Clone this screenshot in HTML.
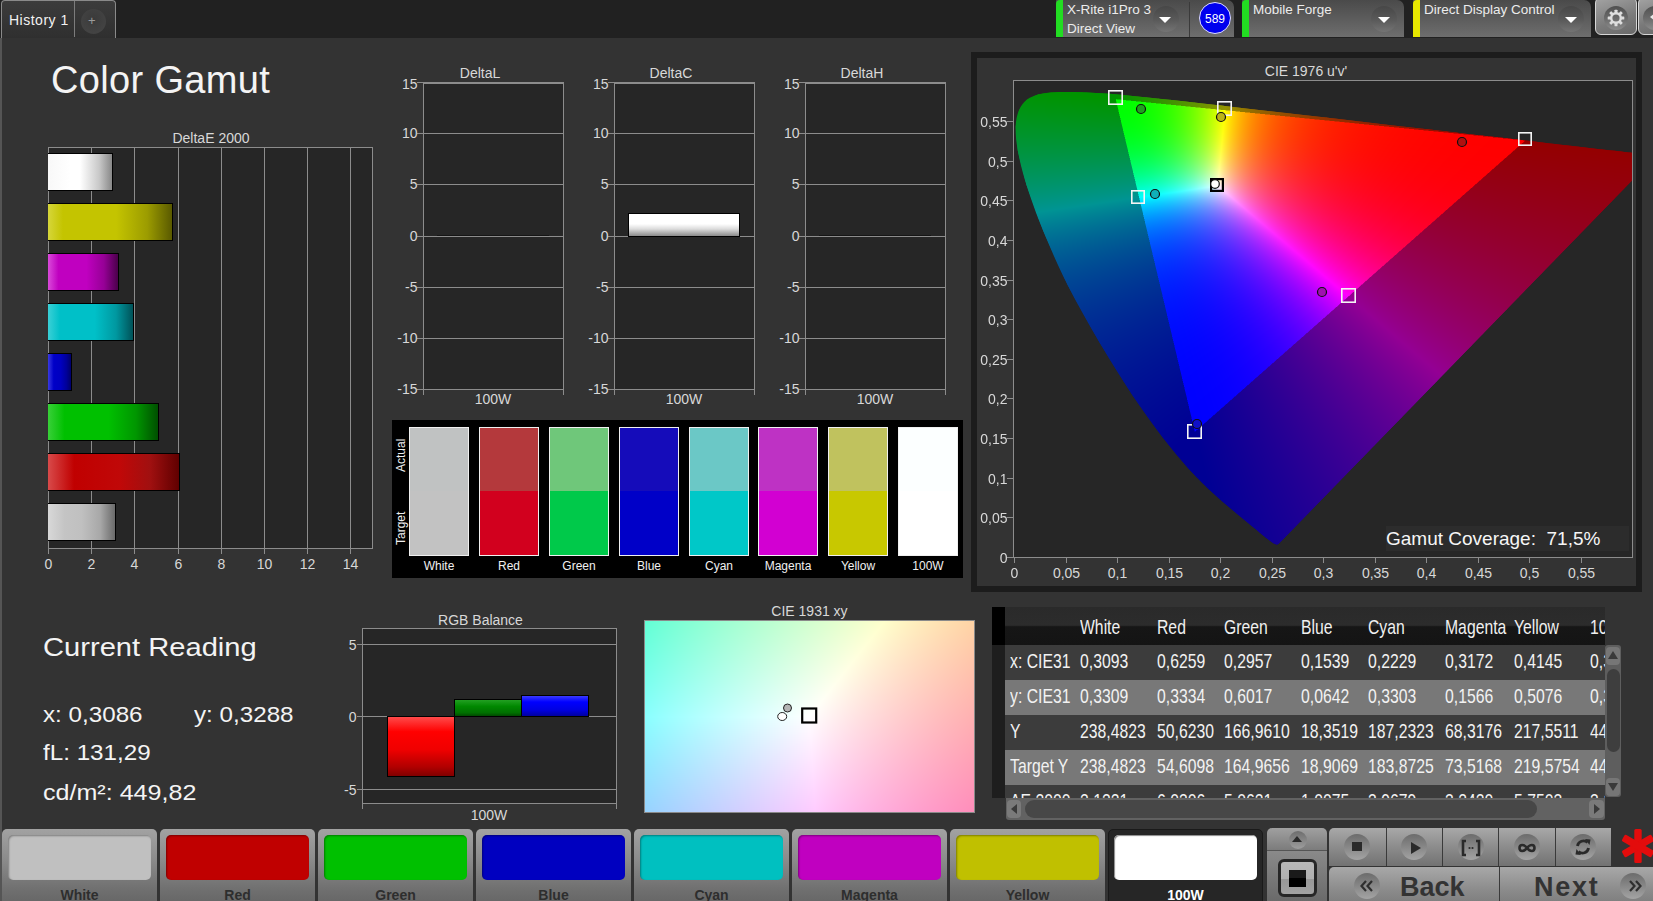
<!DOCTYPE html>
<html><head><meta charset="utf-8"><style>*{margin:0;padding:0;box-sizing:border-box}
html,body{width:1653px;height:901px;overflow:hidden;background:#212121;font-family:"Liberation Sans",sans-serif}
.a{position:absolute}
.t{position:absolute;white-space:nowrap;color:#e8e8e8;line-height:1}
.drop{position:absolute;width:26px;height:26px;border-radius:50%;background:linear-gradient(#474747,#5a5a5a 55%,#747474 100%)}
.drop:after{content:"";position:absolute;left:6.5px;top:11px;border-left:6.5px solid transparent;border-right:6.5px solid transparent;border-top:6.5px solid #fff}
</style></head><body>
<div class="a" style="left:0px;top:38px;width:1653px;height:863px;background:#333333"></div>
<div class="a" style="left:0px;top:38px;width:2px;height:863px;background:#555555"></div>
<div class="a" style="left:1px;top:0px;width:115px;height:38px;background:linear-gradient(#3c3c3c,#2f2f2f);border:1px solid #8a8a8a;border-bottom:none;border-radius:4px 4px 0 0"></div>
<div class="a" style="left:74px;top:1px;width:1px;height:36px;background:#7c7c7c"></div>
<div class="t" style="left:9px;top:12.5px;font-size:14px;color:#f2f2f2;letter-spacing:0.5px">History 1</div>
<div class="a" style="left:81px;top:9px;width:25px;height:25px;border-radius:50%;background:radial-gradient(circle at 50% 40%,#3a3a3a,#434343 70%,#3d3d3d)"></div>
<div class="t" style="left:88px;top:14px;font-size:13px;color:#9c9c9c;">+</div>
<div class="a" style="left:1056px;top:0px;width:178px;height:37px;background:linear-gradient(#4a4a4a,#6e6e6e);border-radius:0 7px 0 0"></div>
<div class="a" style="left:1056px;top:0px;width:7px;height:37px;background:#22dd22;border-radius:4px 0 0 0"></div>
<div class="t" style="left:1067px;top:3.0px;font-size:13.5px;color:#ececec;">X-Rite i1Pro 3</div>
<div class="t" style="left:1067px;top:21.5px;font-size:13.5px;color:#ececec;">Direct View</div>
<div class="drop" style="left:1152.5px;top:6px"></div>
<div class="a" style="left:1189px;top:2px;width:1px;height:35px;background:#3a3a3a"></div>
<div class="a" style="left:1199px;top:2px;width:32px;height:32px;border-radius:50%;background:#0000ee;border:1px solid #e0e0ff"></div>
<div class="t" style="left:1195.0px;top:12.5px;width:40px;text-align:center;font-size:12px;color:#ffffff;">589</div>
<div class="a" style="left:1242px;top:0px;width:162px;height:37px;background:linear-gradient(#4a4a4a,#6e6e6e);border-radius:0 7px 0 0"></div>
<div class="a" style="left:1242px;top:0px;width:7px;height:37px;background:#22dd22;border-radius:4px 0 0 0"></div>
<div class="t" style="left:1253px;top:3.0px;font-size:13.5px;color:#ececec;">Mobile Forge</div>
<div class="drop" style="left:1371px;top:6px"></div>
<div class="a" style="left:1413px;top:0px;width:178px;height:37px;background:linear-gradient(#4a4a4a,#6e6e6e);border-radius:0 7px 0 0"></div>
<div class="a" style="left:1413px;top:0px;width:7px;height:37px;background:#e8e800;border-radius:4px 0 0 0"></div>
<div class="t" style="left:1424px;top:3.0px;font-size:13.5px;color:#ececec;">Direct Display Control</div>
<div class="drop" style="left:1558px;top:6px"></div>
<div class="a" style="left:1595px;top:-3px;width:42px;height:38px;background:linear-gradient(160deg,#a4a4a4,#7a7a7a 60%,#6a6a6a);border:1.5px solid #d6d6d6;border-radius:6px"></div>
<div class="a" style="left:1604px;top:5.5px;width:24px;height:24px;border-radius:50%;background:linear-gradient(#505050,#6a6a6a 50%,#8c8c8c)"></div>
<svg class="a" style="left:1604px;top:5.5px" width="24" height="24" viewBox="-12 -12 24 24"><g fill="#dedede"><rect x="-1.5" y="-8.3" width="3" height="4" rx="0.6" transform="rotate(0)"/><rect x="-1.5" y="-8.3" width="3" height="4" rx="0.6" transform="rotate(45)"/><rect x="-1.5" y="-8.3" width="3" height="4" rx="0.6" transform="rotate(90)"/><rect x="-1.5" y="-8.3" width="3" height="4" rx="0.6" transform="rotate(135)"/><rect x="-1.5" y="-8.3" width="3" height="4" rx="0.6" transform="rotate(180)"/><rect x="-1.5" y="-8.3" width="3" height="4" rx="0.6" transform="rotate(225)"/><rect x="-1.5" y="-8.3" width="3" height="4" rx="0.6" transform="rotate(270)"/><rect x="-1.5" y="-8.3" width="3" height="4" rx="0.6" transform="rotate(315)"/></g><circle r="4.8" fill="none" stroke="#dedede" stroke-width="2.4"/></svg>
<div class="a" style="left:1638px;top:-3px;width:30px;height:38px;background:linear-gradient(160deg,#a4a4a4,#7a7a7a 60%,#6a6a6a);border:1.5px solid #d6d6d6;border-radius:6px"></div>
<div class="a" style="left:1643px;top:5.5px;width:24px;height:24px;border-radius:50%;background:linear-gradient(#505050,#6a6a6a 50%,#8c8c8c)"></div>
<div class="a" style="left:1650px;top:13px;border-top:4px solid transparent;border-bottom:4px solid transparent;border-right:5px solid #e8e8e8"></div>
<div class="t" style="left:51px;top:61px;font-size:38px;color:#f4f4f4;letter-spacing:0.35px">Color Gamut</div>
<div class="t" style="left:111.0px;top:131px;width:200px;text-align:center;font-size:14px;color:#d8d8d8;">DeltaE 2000</div>
<div class="a" style="left:48px;top:147px;width:325px;height:402px;background:#262626;border:1px solid #8c8c8c"></div>
<div class="a" style="left:91px;top:148px;width:1px;height:400px;background:#8c8c8c"></div>
<div class="a" style="left:134px;top:148px;width:1px;height:400px;background:#8c8c8c"></div>
<div class="a" style="left:178px;top:148px;width:1px;height:400px;background:#8c8c8c"></div>
<div class="a" style="left:221px;top:148px;width:1px;height:400px;background:#8c8c8c"></div>
<div class="a" style="left:264px;top:148px;width:1px;height:400px;background:#8c8c8c"></div>
<div class="a" style="left:307px;top:148px;width:1px;height:400px;background:#8c8c8c"></div>
<div class="a" style="left:350px;top:148px;width:1px;height:400px;background:#8c8c8c"></div>
<div class="a" style="left:48px;top:548px;width:1px;height:6px;background:#8c8c8c"></div>
<div class="t" style="left:28.5px;top:557px;width:40px;text-align:center;font-size:14px;color:#d8d8d8;">0</div>
<div class="a" style="left:91px;top:548px;width:1px;height:6px;background:#8c8c8c"></div>
<div class="t" style="left:71.5px;top:557px;width:40px;text-align:center;font-size:14px;color:#d8d8d8;">2</div>
<div class="a" style="left:134px;top:548px;width:1px;height:6px;background:#8c8c8c"></div>
<div class="t" style="left:114.5px;top:557px;width:40px;text-align:center;font-size:14px;color:#d8d8d8;">4</div>
<div class="a" style="left:178px;top:548px;width:1px;height:6px;background:#8c8c8c"></div>
<div class="t" style="left:158.5px;top:557px;width:40px;text-align:center;font-size:14px;color:#d8d8d8;">6</div>
<div class="a" style="left:221px;top:548px;width:1px;height:6px;background:#8c8c8c"></div>
<div class="t" style="left:201.5px;top:557px;width:40px;text-align:center;font-size:14px;color:#d8d8d8;">8</div>
<div class="a" style="left:264px;top:548px;width:1px;height:6px;background:#8c8c8c"></div>
<div class="t" style="left:244.5px;top:557px;width:40px;text-align:center;font-size:14px;color:#d8d8d8;">10</div>
<div class="a" style="left:307px;top:548px;width:1px;height:6px;background:#8c8c8c"></div>
<div class="t" style="left:287.5px;top:557px;width:40px;text-align:center;font-size:14px;color:#d8d8d8;">12</div>
<div class="a" style="left:350px;top:548px;width:1px;height:6px;background:#8c8c8c"></div>
<div class="t" style="left:330.5px;top:557px;width:40px;text-align:center;font-size:14px;color:#d8d8d8;">14</div>
<div class="a" style="left:48px;top:153px;width:65px;height:38px;background:linear-gradient(90deg,#f8f8f8 0%,#ffffff 35%,#ffffff 50%,#c8c8c8 80%,#888888 100%);border:1px solid #000;border-left:none"></div>
<div class="a" style="left:48px;top:203px;width:125px;height:38px;background:linear-gradient(90deg,#d6d63a 0%,#c4c400 12%,#c4c400 55%,#9c9c00 80%,#5a5a00 100%);border:1px solid #000;border-left:none"></div>
<div class="a" style="left:48px;top:253px;width:71px;height:38px;background:linear-gradient(90deg,#da4ada 0%,#c000c0 15%,#c000c0 55%,#960096 80%,#4a004a 100%);border:1px solid #000;border-left:none"></div>
<div class="a" style="left:48px;top:303px;width:86px;height:38px;background:linear-gradient(90deg,#3ad0d6 0%,#00c0c8 14%,#00c0c8 55%,#0098a0 80%,#005258 100%);border:1px solid #000;border-left:none"></div>
<div class="a" style="left:48px;top:353px;width:24px;height:38px;background:linear-gradient(90deg,#3a3ae0 0%,#0000c8 25%,#0000c0 55%,#00009a 80%,#00006a 100%);border:1px solid #000;border-left:none"></div>
<div class="a" style="left:48px;top:403px;width:111px;height:38px;background:linear-gradient(90deg,#38d038 0%,#00c000 15%,#00c000 55%,#009600 80%,#005000 100%);border:1px solid #000;border-left:none"></div>
<div class="a" style="left:48px;top:453px;width:132px;height:38px;background:linear-gradient(90deg,#d84a4a 0%,#c00000 20%,#c00808 55%,#a01010 78%,#600000 100%);border:1px solid #000;border-left:none"></div>
<div class="a" style="left:48px;top:503px;width:68px;height:38px;background:linear-gradient(90deg,#d8d8d8 0%,#c4c4c4 25%,#c0c0c0 50%,#a8a8a8 78%,#6a6a6a 100%);border:1px solid #000;border-left:none"></div>
<div class="t" style="left:43px;top:634.5px;font-size:25px;color:#f4f4f4;transform:scaleX(1.165);transform-origin:0 0">Current Reading</div>
<div class="t" style="left:43px;top:703.5px;font-size:22px;color:#f4f4f4;transform:scaleX(1.1);transform-origin:0 0">x: 0,3086</div>
<div class="t" style="left:194px;top:703.5px;font-size:22px;color:#f4f4f4;transform:scaleX(1.1);transform-origin:0 0">y: 0,3288</div>
<div class="t" style="left:43px;top:742px;font-size:22px;color:#f4f4f4;transform:scaleX(1.1);transform-origin:0 0">fL: 131,29</div>
<div class="t" style="left:43px;top:781.5px;font-size:22px;color:#f4f4f4;transform:scaleX(1.14);transform-origin:0 0">cd/m&#178;: 449,82</div>
<div class="t" style="left:380.5px;top:613px;width:200px;text-align:center;font-size:14px;color:#d8d8d8;">RGB Balance</div>
<div class="a" style="left:362px;top:628px;width:255px;height:176px;background:#262626;border:1px solid #8c8c8c"></div>
<div class="a" style="left:363px;top:644px;width:253px;height:1px;background:#8c8c8c"></div>
<div class="a" style="left:357px;top:644px;width:6px;height:1px;background:#8c8c8c"></div>
<div class="t" style="left:326.5px;top:638px;width:30px;text-align:right;font-size:14px;color:#d8d8d8;">5</div>
<div class="a" style="left:363px;top:716px;width:253px;height:1px;background:#8c8c8c"></div>
<div class="a" style="left:357px;top:716px;width:6px;height:1px;background:#8c8c8c"></div>
<div class="t" style="left:326.5px;top:710px;width:30px;text-align:right;font-size:14px;color:#d8d8d8;">0</div>
<div class="a" style="left:363px;top:789px;width:253px;height:1px;background:#8c8c8c"></div>
<div class="a" style="left:357px;top:789px;width:6px;height:1px;background:#8c8c8c"></div>
<div class="t" style="left:326.5px;top:783px;width:30px;text-align:right;font-size:14px;color:#d8d8d8;">-5</div>
<div class="a" style="left:362px;top:803px;width:1px;height:6px;background:#8c8c8c"></div>
<div class="a" style="left:616px;top:803px;width:1px;height:6px;background:#8c8c8c"></div>
<div class="t" style="left:389.0px;top:808px;width:200px;text-align:center;font-size:14px;color:#d8d8d8;">100W</div>
<div class="a" style="left:387px;top:716px;width:68px;height:61px;background:linear-gradient(#ff4a4a 0%,#ff0000 25%,#f00000 55%,#b00000 85%,#800000 100%);border:1px solid #000"></div>
<div class="a" style="left:454px;top:699px;width:68px;height:18px;background:linear-gradient(#22a022 0%,#008800 40%,#007000 80%,#004a00 100%);border:1px solid #000"></div>
<div class="a" style="left:521px;top:695px;width:68px;height:22px;background:linear-gradient(#3a3aff 0%,#0000ff 30%,#0000e0 70%,#0000a0 100%);border:1px solid #000"></div>
<div class="t" style="left:380.0px;top:66px;width:200px;text-align:center;font-size:14px;color:#d8d8d8;">DeltaL</div>
<div class="a" style="left:423px;top:82px;width:141px;height:308px;background:#262626;border:1px solid #8c8c8c"></div>
<div class="a" style="left:424px;top:83px;width:139px;height:1px;background:#8c8c8c"></div>
<div class="a" style="left:417px;top:82px;width:6px;height:1px;background:#8c8c8c"></div>
<div class="t" style="left:387.5px;top:77px;width:30px;text-align:right;font-size:14px;color:#d8d8d8;">15</div>
<div class="a" style="left:424px;top:133px;width:139px;height:1px;background:#8c8c8c"></div>
<div class="a" style="left:417px;top:133px;width:6px;height:1px;background:#8c8c8c"></div>
<div class="t" style="left:387.5px;top:126px;width:30px;text-align:right;font-size:14px;color:#d8d8d8;">10</div>
<div class="a" style="left:424px;top:184px;width:139px;height:1px;background:#8c8c8c"></div>
<div class="a" style="left:417px;top:184px;width:6px;height:1px;background:#8c8c8c"></div>
<div class="t" style="left:387.5px;top:177px;width:30px;text-align:right;font-size:14px;color:#d8d8d8;">5</div>
<div class="a" style="left:424px;top:236px;width:139px;height:1px;background:#8c8c8c"></div>
<div class="a" style="left:417px;top:236px;width:6px;height:1px;background:#8c8c8c"></div>
<div class="t" style="left:387.5px;top:229px;width:30px;text-align:right;font-size:14px;color:#d8d8d8;">0</div>
<div class="a" style="left:424px;top:287px;width:139px;height:1px;background:#8c8c8c"></div>
<div class="a" style="left:417px;top:287px;width:6px;height:1px;background:#8c8c8c"></div>
<div class="t" style="left:387.5px;top:280px;width:30px;text-align:right;font-size:14px;color:#d8d8d8;">-5</div>
<div class="a" style="left:424px;top:338px;width:139px;height:1px;background:#8c8c8c"></div>
<div class="a" style="left:417px;top:338px;width:6px;height:1px;background:#8c8c8c"></div>
<div class="t" style="left:387.5px;top:331px;width:30px;text-align:right;font-size:14px;color:#d8d8d8;">-10</div>
<div class="a" style="left:417px;top:389px;width:6px;height:1px;background:#8c8c8c"></div>
<div class="t" style="left:387.5px;top:382px;width:30px;text-align:right;font-size:14px;color:#d8d8d8;">-15</div>
<div class="a" style="left:423px;top:389px;width:1px;height:6px;background:#8c8c8c"></div>
<div class="a" style="left:563px;top:389px;width:1px;height:6px;background:#8c8c8c"></div>
<div class="t" style="left:393.0px;top:392px;width:200px;text-align:center;font-size:14px;color:#d8d8d8;">100W</div>
<div class="a" style="left:437px;top:235px;width:112px;height:1px;background:#151515"></div>
<div class="t" style="left:571.0px;top:66px;width:200px;text-align:center;font-size:14px;color:#d8d8d8;">DeltaC</div>
<div class="a" style="left:614px;top:82px;width:141px;height:308px;background:#262626;border:1px solid #8c8c8c"></div>
<div class="a" style="left:615px;top:83px;width:139px;height:1px;background:#8c8c8c"></div>
<div class="a" style="left:608px;top:82px;width:6px;height:1px;background:#8c8c8c"></div>
<div class="t" style="left:578.5px;top:77px;width:30px;text-align:right;font-size:14px;color:#d8d8d8;">15</div>
<div class="a" style="left:615px;top:133px;width:139px;height:1px;background:#8c8c8c"></div>
<div class="a" style="left:608px;top:133px;width:6px;height:1px;background:#8c8c8c"></div>
<div class="t" style="left:578.5px;top:126px;width:30px;text-align:right;font-size:14px;color:#d8d8d8;">10</div>
<div class="a" style="left:615px;top:184px;width:139px;height:1px;background:#8c8c8c"></div>
<div class="a" style="left:608px;top:184px;width:6px;height:1px;background:#8c8c8c"></div>
<div class="t" style="left:578.5px;top:177px;width:30px;text-align:right;font-size:14px;color:#d8d8d8;">5</div>
<div class="a" style="left:615px;top:236px;width:139px;height:1px;background:#8c8c8c"></div>
<div class="a" style="left:608px;top:236px;width:6px;height:1px;background:#8c8c8c"></div>
<div class="t" style="left:578.5px;top:229px;width:30px;text-align:right;font-size:14px;color:#d8d8d8;">0</div>
<div class="a" style="left:615px;top:287px;width:139px;height:1px;background:#8c8c8c"></div>
<div class="a" style="left:608px;top:287px;width:6px;height:1px;background:#8c8c8c"></div>
<div class="t" style="left:578.5px;top:280px;width:30px;text-align:right;font-size:14px;color:#d8d8d8;">-5</div>
<div class="a" style="left:615px;top:338px;width:139px;height:1px;background:#8c8c8c"></div>
<div class="a" style="left:608px;top:338px;width:6px;height:1px;background:#8c8c8c"></div>
<div class="t" style="left:578.5px;top:331px;width:30px;text-align:right;font-size:14px;color:#d8d8d8;">-10</div>
<div class="a" style="left:608px;top:389px;width:6px;height:1px;background:#8c8c8c"></div>
<div class="t" style="left:578.5px;top:382px;width:30px;text-align:right;font-size:14px;color:#d8d8d8;">-15</div>
<div class="a" style="left:614px;top:389px;width:1px;height:6px;background:#8c8c8c"></div>
<div class="a" style="left:754px;top:389px;width:1px;height:6px;background:#8c8c8c"></div>
<div class="t" style="left:584.0px;top:392px;width:200px;text-align:center;font-size:14px;color:#d8d8d8;">100W</div>
<div class="a" style="left:628px;top:213px;width:112px;height:24px;background:linear-gradient(#ffffff 0%,#ffffff 45%,#dcdcdc 68%,#8a8a8a 100%);border:1px solid #000"></div>
<div class="t" style="left:762.0px;top:66px;width:200px;text-align:center;font-size:14px;color:#d8d8d8;">DeltaH</div>
<div class="a" style="left:805px;top:82px;width:141px;height:308px;background:#262626;border:1px solid #8c8c8c"></div>
<div class="a" style="left:806px;top:83px;width:139px;height:1px;background:#8c8c8c"></div>
<div class="a" style="left:799px;top:82px;width:6px;height:1px;background:#8c8c8c"></div>
<div class="t" style="left:769.5px;top:77px;width:30px;text-align:right;font-size:14px;color:#d8d8d8;">15</div>
<div class="a" style="left:806px;top:133px;width:139px;height:1px;background:#8c8c8c"></div>
<div class="a" style="left:799px;top:133px;width:6px;height:1px;background:#8c8c8c"></div>
<div class="t" style="left:769.5px;top:126px;width:30px;text-align:right;font-size:14px;color:#d8d8d8;">10</div>
<div class="a" style="left:806px;top:184px;width:139px;height:1px;background:#8c8c8c"></div>
<div class="a" style="left:799px;top:184px;width:6px;height:1px;background:#8c8c8c"></div>
<div class="t" style="left:769.5px;top:177px;width:30px;text-align:right;font-size:14px;color:#d8d8d8;">5</div>
<div class="a" style="left:806px;top:236px;width:139px;height:1px;background:#8c8c8c"></div>
<div class="a" style="left:799px;top:236px;width:6px;height:1px;background:#8c8c8c"></div>
<div class="t" style="left:769.5px;top:229px;width:30px;text-align:right;font-size:14px;color:#d8d8d8;">0</div>
<div class="a" style="left:806px;top:287px;width:139px;height:1px;background:#8c8c8c"></div>
<div class="a" style="left:799px;top:287px;width:6px;height:1px;background:#8c8c8c"></div>
<div class="t" style="left:769.5px;top:280px;width:30px;text-align:right;font-size:14px;color:#d8d8d8;">-5</div>
<div class="a" style="left:806px;top:338px;width:139px;height:1px;background:#8c8c8c"></div>
<div class="a" style="left:799px;top:338px;width:6px;height:1px;background:#8c8c8c"></div>
<div class="t" style="left:769.5px;top:331px;width:30px;text-align:right;font-size:14px;color:#d8d8d8;">-10</div>
<div class="a" style="left:799px;top:389px;width:6px;height:1px;background:#8c8c8c"></div>
<div class="t" style="left:769.5px;top:382px;width:30px;text-align:right;font-size:14px;color:#d8d8d8;">-15</div>
<div class="a" style="left:805px;top:389px;width:1px;height:6px;background:#8c8c8c"></div>
<div class="a" style="left:945px;top:389px;width:1px;height:6px;background:#8c8c8c"></div>
<div class="t" style="left:775.0px;top:392px;width:200px;text-align:center;font-size:14px;color:#d8d8d8;">100W</div>
<div class="a" style="left:819px;top:235px;width:112px;height:1px;background:#151515"></div>
<div class="a" style="left:392px;top:420px;width:571px;height:158px;background:#000000"></div>
<div class="a" style="left:409px;top:427px;width:60px;height:129px;border:1px solid #f0f0f0;background:linear-gradient(#c0c2c2 0%,#c0c2c2 50%,#c2c2c2 50%,#c2c2c2 100%)"></div>
<div class="t" style="left:339.0px;top:560px;width:200px;text-align:center;font-size:12px;color:#f0f0f0;">White</div>
<div class="a" style="left:479px;top:427px;width:60px;height:129px;border:1px solid #f0f0f0;background:linear-gradient(#b4393c 0%,#b4393c 50%,#d2001e 50%,#d2001e 100%)"></div>
<div class="t" style="left:409.0px;top:560px;width:200px;text-align:center;font-size:12px;color:#f0f0f0;">Red</div>
<div class="a" style="left:549px;top:427px;width:60px;height:129px;border:1px solid #f0f0f0;background:linear-gradient(#6fc77a 0%,#6fc77a 50%,#00c94a 50%,#00c94a 100%)"></div>
<div class="t" style="left:479.0px;top:560px;width:200px;text-align:center;font-size:12px;color:#f0f0f0;">Green</div>
<div class="a" style="left:619px;top:427px;width:60px;height:129px;border:1px solid #f0f0f0;background:linear-gradient(#150cba 0%,#150cba 50%,#0000c8 50%,#0000c8 100%)"></div>
<div class="t" style="left:549.0px;top:560px;width:200px;text-align:center;font-size:12px;color:#f0f0f0;">Blue</div>
<div class="a" style="left:689px;top:427px;width:60px;height:129px;border:1px solid #f0f0f0;background:linear-gradient(#6bc8c6 0%,#6bc8c6 50%,#00c8c8 50%,#00c8c8 100%)"></div>
<div class="t" style="left:619.0px;top:560px;width:200px;text-align:center;font-size:12px;color:#f0f0f0;">Cyan</div>
<div class="a" style="left:758px;top:427px;width:60px;height:129px;border:1px solid #f0f0f0;background:linear-gradient(#be32c4 0%,#be32c4 50%,#d200d2 50%,#d200d2 100%)"></div>
<div class="t" style="left:688.0px;top:560px;width:200px;text-align:center;font-size:12px;color:#f0f0f0;">Magenta</div>
<div class="a" style="left:828px;top:427px;width:60px;height:129px;border:1px solid #f0f0f0;background:linear-gradient(#c0c25e 0%,#c0c25e 50%,#c8c800 50%,#c8c800 100%)"></div>
<div class="t" style="left:758.0px;top:560px;width:200px;text-align:center;font-size:12px;color:#f0f0f0;">Yellow</div>
<div class="a" style="left:898px;top:427px;width:60px;height:129px;border:1px solid #f0f0f0;background:linear-gradient(#fcffff 0%,#fcffff 50%,#ffffff 50%,#ffffff 100%)"></div>
<div class="t" style="left:828.0px;top:560px;width:200px;text-align:center;font-size:12px;color:#f0f0f0;">100W</div>
<div class="t" style="left:395px;top:472px;font-size:12px;color:#f0f0f0;transform:rotate(-90deg);transform-origin:0 0">Actual</div>
<div class="t" style="left:395px;top:545px;font-size:12px;color:#f0f0f0;transform:rotate(-90deg);transform-origin:0 0">Target</div>
<div class="a" style="left:971px;top:52px;width:671px;height:540px;background:#333333;border:6px solid #1c1c1c"></div>
<div class="t" style="left:1206.0px;top:64px;width:200px;text-align:center;font-size:14px;color:#d8d8d8;">CIE 1976 u'v'</div>
<div class="a" style="left:1013px;top:80px;width:620px;height:478px;background:#262626;border:1px solid #8c8c8c"></div>
<svg class="a" style="left:1014px;top:81px" width="618" height="476"><defs><clipPath id="lc"><path d="M264.7 462.8 L264.3 463.1 L263.5 463.4 L262.3 463.4 L259.9 462.6 L257.3 460.8 L253.7 458.1 L248.4 453.9 L241.9 448.3 L233.6 441.4 L222.7 432.5 L209.6 421.5 L193.5 407.0 L174.2 387.3 L148.6 356.3 L118.3 314.0 L85.5 261.4 L53.9 204.4 L29.2 149.7 L12.4 103.6 L3.8 69.4 L1.7 45.5 L5.0 29.2 L12.9 18.8 L24.0 13.4 L37.3 11.5 L51.8 11.0 L66.5 11.2 L81.8 11.9 L98.3 13.1 L116.3 14.7 L136.0 16.7 L157.9 19.1 L182.0 21.8 L208.8 24.8 L238.3 28.2 L270.4 31.9 L305.0 35.8 L341.6 40.0 L379.2 44.4 L415.7 48.6 L451.2 52.7 L483.4 56.3 L511.8 59.6 L536.0 62.4 L556.2 64.7 L573.3 66.7 L588.1 68.4 L600.6 69.8 L610.7 71.0 L618.6 71.9 L629.3 73.1 L642.2 74.6 Z"/></clipPath><clipPath id="tc"><path d="M101.7 17.3 L511.0 58.5 L180.7 350.5 Z"/></clipPath></defs><g clip-path="url(#lc)"><rect x="0" y="0" width="12.5" height="12.5" fill="#009300"/><rect x="12" y="0" width="12.5" height="12.5" fill="#009300"/><rect x="24" y="0" width="12.5" height="12.5" fill="#009300"/><rect x="36" y="0" width="12.5" height="12.5" fill="#009300"/><rect x="48" y="0" width="12.5" height="12.5" fill="#009300"/><rect x="60" y="0" width="12.5" height="12.5" fill="#009300"/><rect x="72" y="0" width="12.5" height="12.5" fill="#009300"/><rect x="84" y="0" width="12.5" height="12.5" fill="#009300"/><rect x="96" y="0" width="12.5" height="12.5" fill="#039300"/><rect x="108" y="0" width="12.5" height="12.5" fill="#0f9300"/><rect x="120" y="0" width="12.5" height="12.5" fill="#1c9300"/><rect x="132" y="0" width="12.5" height="12.5" fill="#299300"/><rect x="144" y="0" width="12.5" height="12.5" fill="#389300"/><rect x="156" y="0" width="12.5" height="12.5" fill="#479300"/><rect x="168" y="0" width="12.5" height="12.5" fill="#579300"/><rect x="180" y="0" width="12.5" height="12.5" fill="#689300"/><rect x="192" y="0" width="12.5" height="12.5" fill="#7b9300"/><rect x="204" y="0" width="12.5" height="12.5" fill="#8e9300"/><rect x="216" y="0" width="12.5" height="12.5" fill="#938500"/><rect x="228" y="0" width="12.5" height="12.5" fill="#937500"/><rect x="240" y="0" width="12.5" height="12.5" fill="#936800"/><rect x="252" y="0" width="12.5" height="12.5" fill="#935c00"/><rect x="264" y="0" width="12.5" height="12.5" fill="#935300"/><rect x="276" y="0" width="12.5" height="12.5" fill="#934a00"/><rect x="288" y="0" width="12.5" height="12.5" fill="#934300"/><rect x="300" y="0" width="12.5" height="12.5" fill="#933c00"/><rect x="312" y="0" width="12.5" height="12.5" fill="#933600"/><rect x="324" y="0" width="12.5" height="12.5" fill="#933100"/><rect x="336" y="0" width="12.5" height="12.5" fill="#932c00"/><rect x="348" y="0" width="12.5" height="12.5" fill="#932800"/><rect x="360" y="0" width="12.5" height="12.5" fill="#932400"/><rect x="372" y="0" width="12.5" height="12.5" fill="#932000"/><rect x="384" y="0" width="12.5" height="12.5" fill="#931d00"/><rect x="396" y="0" width="12.5" height="12.5" fill="#931a00"/><rect x="408" y="0" width="12.5" height="12.5" fill="#931700"/><rect x="420" y="0" width="12.5" height="12.5" fill="#931500"/><rect x="432" y="0" width="12.5" height="12.5" fill="#931200"/><rect x="444" y="0" width="12.5" height="12.5" fill="#931000"/><rect x="456" y="0" width="12.5" height="12.5" fill="#930e00"/><rect x="468" y="0" width="12.5" height="12.5" fill="#930c00"/><rect x="480" y="0" width="12.5" height="12.5" fill="#930a00"/><rect x="492" y="0" width="12.5" height="12.5" fill="#930800"/><rect x="504" y="0" width="12.5" height="12.5" fill="#930700"/><rect x="516" y="0" width="12.5" height="12.5" fill="#930500"/><rect x="528" y="0" width="12.5" height="12.5" fill="#930400"/><rect x="540" y="0" width="12.5" height="12.5" fill="#930200"/><rect x="552" y="0" width="12.5" height="12.5" fill="#930100"/><rect x="564" y="0" width="12.5" height="12.5" fill="#930000"/><rect x="576" y="0" width="12.5" height="12.5" fill="#930000"/><rect x="588" y="0" width="12.5" height="12.5" fill="#930000"/><rect x="600" y="0" width="12.5" height="12.5" fill="#930000"/><rect x="612" y="0" width="12.5" height="12.5" fill="#930000"/><rect x="0" y="12" width="12.5" height="12.5" fill="#009308"/><rect x="12" y="12" width="12.5" height="12.5" fill="#009307"/><rect x="24" y="12" width="12.5" height="12.5" fill="#009306"/><rect x="36" y="12" width="12.5" height="12.5" fill="#009305"/><rect x="48" y="12" width="12.5" height="12.5" fill="#009304"/><rect x="60" y="12" width="12.5" height="12.5" fill="#009303"/><rect x="72" y="12" width="12.5" height="12.5" fill="#009302"/><rect x="84" y="12" width="12.5" height="12.5" fill="#009301"/><rect x="96" y="12" width="12.5" height="12.5" fill="#009300"/><rect x="108" y="12" width="12.5" height="12.5" fill="#0c9300"/><rect x="120" y="12" width="12.5" height="12.5" fill="#1a9300"/><rect x="132" y="12" width="12.5" height="12.5" fill="#289300"/><rect x="144" y="12" width="12.5" height="12.5" fill="#369300"/><rect x="156" y="12" width="12.5" height="12.5" fill="#469300"/><rect x="168" y="12" width="12.5" height="12.5" fill="#579300"/><rect x="180" y="12" width="12.5" height="12.5" fill="#699300"/><rect x="192" y="12" width="12.5" height="12.5" fill="#7c9300"/><rect x="204" y="12" width="12.5" height="12.5" fill="#909300"/><rect x="216" y="12" width="12.5" height="12.5" fill="#938300"/><rect x="228" y="12" width="12.5" height="12.5" fill="#937300"/><rect x="240" y="12" width="12.5" height="12.5" fill="#936600"/><rect x="252" y="12" width="12.5" height="12.5" fill="#935a00"/><rect x="264" y="12" width="12.5" height="12.5" fill="#935000"/><rect x="276" y="12" width="12.5" height="12.5" fill="#934800"/><rect x="288" y="12" width="12.5" height="12.5" fill="#934000"/><rect x="300" y="12" width="12.5" height="12.5" fill="#933a00"/><rect x="312" y="12" width="12.5" height="12.5" fill="#933400"/><rect x="324" y="12" width="12.5" height="12.5" fill="#932f00"/><rect x="336" y="12" width="12.5" height="12.5" fill="#932a00"/><rect x="348" y="12" width="12.5" height="12.5" fill="#932600"/><rect x="360" y="12" width="12.5" height="12.5" fill="#932200"/><rect x="372" y="12" width="12.5" height="12.5" fill="#931e00"/><rect x="384" y="12" width="12.5" height="12.5" fill="#931b00"/><rect x="396" y="12" width="12.5" height="12.5" fill="#931800"/><rect x="408" y="12" width="12.5" height="12.5" fill="#931500"/><rect x="420" y="12" width="12.5" height="12.5" fill="#931300"/><rect x="432" y="12" width="12.5" height="12.5" fill="#931000"/><rect x="444" y="12" width="12.5" height="12.5" fill="#930e00"/><rect x="456" y="12" width="12.5" height="12.5" fill="#930c00"/><rect x="468" y="12" width="12.5" height="12.5" fill="#930a00"/><rect x="480" y="12" width="12.5" height="12.5" fill="#930800"/><rect x="492" y="12" width="12.5" height="12.5" fill="#930700"/><rect x="504" y="12" width="12.5" height="12.5" fill="#930500"/><rect x="516" y="12" width="12.5" height="12.5" fill="#930400"/><rect x="528" y="12" width="12.5" height="12.5" fill="#930200"/><rect x="540" y="12" width="12.5" height="12.5" fill="#930100"/><rect x="552" y="12" width="12.5" height="12.5" fill="#930000"/><rect x="564" y="12" width="12.5" height="12.5" fill="#930000"/><rect x="576" y="12" width="12.5" height="12.5" fill="#930000"/><rect x="588" y="12" width="12.5" height="12.5" fill="#930000"/><rect x="600" y="12" width="12.5" height="12.5" fill="#930000"/><rect x="612" y="12" width="12.5" height="12.5" fill="#930000"/><rect x="0" y="24" width="12.5" height="12.5" fill="#009313"/><rect x="12" y="24" width="12.5" height="12.5" fill="#009313"/><rect x="24" y="24" width="12.5" height="12.5" fill="#009312"/><rect x="36" y="24" width="12.5" height="12.5" fill="#009311"/><rect x="48" y="24" width="12.5" height="12.5" fill="#009310"/><rect x="60" y="24" width="12.5" height="12.5" fill="#00930f"/><rect x="72" y="24" width="12.5" height="12.5" fill="#00930f"/><rect x="84" y="24" width="12.5" height="12.5" fill="#00930e"/><rect x="96" y="24" width="12.5" height="12.5" fill="#00930d"/><rect x="108" y="24" width="12.5" height="12.5" fill="#0a930c"/><rect x="120" y="24" width="12.5" height="12.5" fill="#17930b"/><rect x="132" y="24" width="12.5" height="12.5" fill="#269309"/><rect x="144" y="24" width="12.5" height="12.5" fill="#359308"/><rect x="156" y="24" width="12.5" height="12.5" fill="#459307"/><rect x="168" y="24" width="12.5" height="12.5" fill="#569306"/><rect x="180" y="24" width="12.5" height="12.5" fill="#699304"/><rect x="192" y="24" width="12.5" height="12.5" fill="#7d9303"/><rect x="204" y="24" width="12.5" height="12.5" fill="#929301"/><rect x="216" y="24" width="12.5" height="12.5" fill="#938100"/><rect x="228" y="24" width="12.5" height="12.5" fill="#937100"/><rect x="240" y="24" width="12.5" height="12.5" fill="#936300"/><rect x="252" y="24" width="12.5" height="12.5" fill="#935800"/><rect x="264" y="24" width="12.5" height="12.5" fill="#934e00"/><rect x="276" y="24" width="12.5" height="12.5" fill="#934500"/><rect x="288" y="24" width="12.5" height="12.5" fill="#933e00"/><rect x="300" y="24" width="12.5" height="12.5" fill="#933700"/><rect x="312" y="24" width="12.5" height="12.5" fill="#933200"/><rect x="324" y="24" width="12.5" height="12.5" fill="#932c00"/><rect x="336" y="24" width="12.5" height="12.5" fill="#932800"/><rect x="348" y="24" width="12.5" height="12.5" fill="#932400"/><rect x="360" y="24" width="12.5" height="12.5" fill="#932000"/><rect x="372" y="24" width="12.5" height="12.5" fill="#931c00"/><rect x="384" y="24" width="12.5" height="12.5" fill="#931900"/><rect x="396" y="24" width="12.5" height="12.5" fill="#931600"/><rect x="408" y="24" width="12.5" height="12.5" fill="#931300"/><rect x="420" y="24" width="12.5" height="12.5" fill="#931100"/><rect x="432" y="24" width="12.5" height="12.5" fill="#930f00"/><rect x="444" y="24" width="12.5" height="12.5" fill="#930c00"/><rect x="456" y="24" width="12.5" height="12.5" fill="#930a00"/><rect x="468" y="24" width="12.5" height="12.5" fill="#930900"/><rect x="480" y="24" width="12.5" height="12.5" fill="#930700"/><rect x="492" y="24" width="12.5" height="12.5" fill="#930500"/><rect x="504" y="24" width="12.5" height="12.5" fill="#930400"/><rect x="516" y="24" width="12.5" height="12.5" fill="#930200"/><rect x="528" y="24" width="12.5" height="12.5" fill="#930100"/><rect x="540" y="24" width="12.5" height="12.5" fill="#930000"/><rect x="552" y="24" width="12.5" height="12.5" fill="#930000"/><rect x="564" y="24" width="12.5" height="12.5" fill="#930000"/><rect x="576" y="24" width="12.5" height="12.5" fill="#930000"/><rect x="588" y="24" width="12.5" height="12.5" fill="#930000"/><rect x="600" y="24" width="12.5" height="12.5" fill="#930000"/><rect x="612" y="24" width="12.5" height="12.5" fill="#930000"/><rect x="0" y="36" width="12.5" height="12.5" fill="#00931f"/><rect x="12" y="36" width="12.5" height="12.5" fill="#00931f"/><rect x="24" y="36" width="12.5" height="12.5" fill="#00931e"/><rect x="36" y="36" width="12.5" height="12.5" fill="#00931e"/><rect x="48" y="36" width="12.5" height="12.5" fill="#00931d"/><rect x="60" y="36" width="12.5" height="12.5" fill="#00931d"/><rect x="72" y="36" width="12.5" height="12.5" fill="#00931c"/><rect x="84" y="36" width="12.5" height="12.5" fill="#00931c"/><rect x="96" y="36" width="12.5" height="12.5" fill="#00931b"/><rect x="108" y="36" width="12.5" height="12.5" fill="#07931a"/><rect x="120" y="36" width="12.5" height="12.5" fill="#15931a"/><rect x="132" y="36" width="12.5" height="12.5" fill="#249319"/><rect x="144" y="36" width="12.5" height="12.5" fill="#339318"/><rect x="156" y="36" width="12.5" height="12.5" fill="#449317"/><rect x="168" y="36" width="12.5" height="12.5" fill="#569316"/><rect x="180" y="36" width="12.5" height="12.5" fill="#699315"/><rect x="192" y="36" width="12.5" height="12.5" fill="#7e9314"/><rect x="204" y="36" width="12.5" height="12.5" fill="#939313"/><rect x="216" y="36" width="12.5" height="12.5" fill="#937f10"/><rect x="228" y="36" width="12.5" height="12.5" fill="#936e0d"/><rect x="240" y="36" width="12.5" height="12.5" fill="#93600a"/><rect x="252" y="36" width="12.5" height="12.5" fill="#935508"/><rect x="264" y="36" width="12.5" height="12.5" fill="#934b06"/><rect x="276" y="36" width="12.5" height="12.5" fill="#934305"/><rect x="288" y="36" width="12.5" height="12.5" fill="#933b03"/><rect x="300" y="36" width="12.5" height="12.5" fill="#933502"/><rect x="312" y="36" width="12.5" height="12.5" fill="#932f01"/><rect x="324" y="36" width="12.5" height="12.5" fill="#932a00"/><rect x="336" y="36" width="12.5" height="12.5" fill="#932600"/><rect x="348" y="36" width="12.5" height="12.5" fill="#932100"/><rect x="360" y="36" width="12.5" height="12.5" fill="#931e00"/><rect x="372" y="36" width="12.5" height="12.5" fill="#931a00"/><rect x="384" y="36" width="12.5" height="12.5" fill="#931700"/><rect x="396" y="36" width="12.5" height="12.5" fill="#931400"/><rect x="408" y="36" width="12.5" height="12.5" fill="#931200"/><rect x="420" y="36" width="12.5" height="12.5" fill="#930f00"/><rect x="432" y="36" width="12.5" height="12.5" fill="#930d00"/><rect x="444" y="36" width="12.5" height="12.5" fill="#930b00"/><rect x="456" y="36" width="12.5" height="12.5" fill="#930900"/><rect x="468" y="36" width="12.5" height="12.5" fill="#930700"/><rect x="480" y="36" width="12.5" height="12.5" fill="#930500"/><rect x="492" y="36" width="12.5" height="12.5" fill="#930400"/><rect x="504" y="36" width="12.5" height="12.5" fill="#930200"/><rect x="516" y="36" width="12.5" height="12.5" fill="#930100"/><rect x="528" y="36" width="12.5" height="12.5" fill="#930000"/><rect x="540" y="36" width="12.5" height="12.5" fill="#930000"/><rect x="552" y="36" width="12.5" height="12.5" fill="#930000"/><rect x="564" y="36" width="12.5" height="12.5" fill="#930000"/><rect x="576" y="36" width="12.5" height="12.5" fill="#930000"/><rect x="588" y="36" width="12.5" height="12.5" fill="#930000"/><rect x="600" y="36" width="12.5" height="12.5" fill="#930000"/><rect x="612" y="36" width="12.5" height="12.5" fill="#930000"/><rect x="0" y="48" width="12.5" height="12.5" fill="#00932c"/><rect x="12" y="48" width="12.5" height="12.5" fill="#00932b"/><rect x="24" y="48" width="12.5" height="12.5" fill="#00932b"/><rect x="36" y="48" width="12.5" height="12.5" fill="#00932b"/><rect x="48" y="48" width="12.5" height="12.5" fill="#00932b"/><rect x="60" y="48" width="12.5" height="12.5" fill="#00932b"/><rect x="72" y="48" width="12.5" height="12.5" fill="#00932b"/><rect x="84" y="48" width="12.5" height="12.5" fill="#00932a"/><rect x="96" y="48" width="12.5" height="12.5" fill="#00932a"/><rect x="108" y="48" width="12.5" height="12.5" fill="#04932a"/><rect x="120" y="48" width="12.5" height="12.5" fill="#12932a"/><rect x="132" y="48" width="12.5" height="12.5" fill="#219329"/><rect x="144" y="48" width="12.5" height="12.5" fill="#329329"/><rect x="156" y="48" width="12.5" height="12.5" fill="#439329"/><rect x="168" y="48" width="12.5" height="12.5" fill="#569329"/><rect x="180" y="48" width="12.5" height="12.5" fill="#6a9328"/><rect x="192" y="48" width="12.5" height="12.5" fill="#7f9328"/><rect x="204" y="48" width="12.5" height="12.5" fill="#939127"/><rect x="216" y="48" width="12.5" height="12.5" fill="#937c21"/><rect x="228" y="48" width="12.5" height="12.5" fill="#936c1c"/><rect x="240" y="48" width="12.5" height="12.5" fill="#935e18"/><rect x="252" y="48" width="12.5" height="12.5" fill="#935215"/><rect x="264" y="48" width="12.5" height="12.5" fill="#934912"/><rect x="276" y="48" width="12.5" height="12.5" fill="#934010"/><rect x="288" y="48" width="12.5" height="12.5" fill="#93390e"/><rect x="300" y="48" width="12.5" height="12.5" fill="#93320c"/><rect x="312" y="48" width="12.5" height="12.5" fill="#932d0a"/><rect x="324" y="48" width="12.5" height="12.5" fill="#932809"/><rect x="336" y="48" width="12.5" height="12.5" fill="#932307"/><rect x="348" y="48" width="12.5" height="12.5" fill="#931f06"/><rect x="360" y="48" width="12.5" height="12.5" fill="#931b05"/><rect x="372" y="48" width="12.5" height="12.5" fill="#931804"/><rect x="384" y="48" width="12.5" height="12.5" fill="#931503"/><rect x="396" y="48" width="12.5" height="12.5" fill="#931202"/><rect x="408" y="48" width="12.5" height="12.5" fill="#931002"/><rect x="420" y="48" width="12.5" height="12.5" fill="#930d01"/><rect x="432" y="48" width="12.5" height="12.5" fill="#930b00"/><rect x="444" y="48" width="12.5" height="12.5" fill="#930900"/><rect x="456" y="48" width="12.5" height="12.5" fill="#930700"/><rect x="468" y="48" width="12.5" height="12.5" fill="#930500"/><rect x="480" y="48" width="12.5" height="12.5" fill="#930300"/><rect x="492" y="48" width="12.5" height="12.5" fill="#930200"/><rect x="504" y="48" width="12.5" height="12.5" fill="#930000"/><rect x="516" y="48" width="12.5" height="12.5" fill="#930000"/><rect x="528" y="48" width="12.5" height="12.5" fill="#930000"/><rect x="540" y="48" width="12.5" height="12.5" fill="#930000"/><rect x="552" y="48" width="12.5" height="12.5" fill="#930000"/><rect x="564" y="48" width="12.5" height="12.5" fill="#930000"/><rect x="576" y="48" width="12.5" height="12.5" fill="#930000"/><rect x="588" y="48" width="12.5" height="12.5" fill="#930000"/><rect x="600" y="48" width="12.5" height="12.5" fill="#930000"/><rect x="612" y="48" width="12.5" height="12.5" fill="#930000"/><rect x="0" y="60" width="12.5" height="12.5" fill="#009339"/><rect x="12" y="60" width="12.5" height="12.5" fill="#009339"/><rect x="24" y="60" width="12.5" height="12.5" fill="#009339"/><rect x="36" y="60" width="12.5" height="12.5" fill="#009339"/><rect x="48" y="60" width="12.5" height="12.5" fill="#009339"/><rect x="60" y="60" width="12.5" height="12.5" fill="#00933a"/><rect x="72" y="60" width="12.5" height="12.5" fill="#00933a"/><rect x="84" y="60" width="12.5" height="12.5" fill="#00933a"/><rect x="96" y="60" width="12.5" height="12.5" fill="#00933a"/><rect x="108" y="60" width="12.5" height="12.5" fill="#01933b"/><rect x="120" y="60" width="12.5" height="12.5" fill="#0f933b"/><rect x="132" y="60" width="12.5" height="12.5" fill="#1f933b"/><rect x="144" y="60" width="12.5" height="12.5" fill="#30933c"/><rect x="156" y="60" width="12.5" height="12.5" fill="#42933c"/><rect x="168" y="60" width="12.5" height="12.5" fill="#55933c"/><rect x="180" y="60" width="12.5" height="12.5" fill="#6a933d"/><rect x="192" y="60" width="12.5" height="12.5" fill="#80933d"/><rect x="204" y="60" width="12.5" height="12.5" fill="#938f3c"/><rect x="216" y="60" width="12.5" height="12.5" fill="#937a33"/><rect x="228" y="60" width="12.5" height="12.5" fill="#93692d"/><rect x="240" y="60" width="12.5" height="12.5" fill="#935b27"/><rect x="252" y="60" width="12.5" height="12.5" fill="#935022"/><rect x="264" y="60" width="12.5" height="12.5" fill="#93461f"/><rect x="276" y="60" width="12.5" height="12.5" fill="#933d1b"/><rect x="288" y="60" width="12.5" height="12.5" fill="#933618"/><rect x="300" y="60" width="12.5" height="12.5" fill="#933016"/><rect x="312" y="60" width="12.5" height="12.5" fill="#932a14"/><rect x="324" y="60" width="12.5" height="12.5" fill="#932512"/><rect x="336" y="60" width="12.5" height="12.5" fill="#932110"/><rect x="348" y="60" width="12.5" height="12.5" fill="#931d0e"/><rect x="360" y="60" width="12.5" height="12.5" fill="#93190d"/><rect x="372" y="60" width="12.5" height="12.5" fill="#93160b"/><rect x="384" y="60" width="12.5" height="12.5" fill="#93130a"/><rect x="396" y="60" width="12.5" height="12.5" fill="#931009"/><rect x="408" y="60" width="12.5" height="12.5" fill="#930e08"/><rect x="420" y="60" width="12.5" height="12.5" fill="#930b07"/><rect x="432" y="60" width="12.5" height="12.5" fill="#930906"/><rect x="444" y="60" width="12.5" height="12.5" fill="#930705"/><rect x="456" y="60" width="12.5" height="12.5" fill="#930505"/><rect x="468" y="60" width="12.5" height="12.5" fill="#930304"/><rect x="480" y="60" width="12.5" height="12.5" fill="#930203"/><rect x="492" y="60" width="12.5" height="12.5" fill="#930003"/><rect x="504" y="60" width="12.5" height="12.5" fill="#930002"/><rect x="516" y="60" width="12.5" height="12.5" fill="#930002"/><rect x="528" y="60" width="12.5" height="12.5" fill="#930001"/><rect x="540" y="60" width="12.5" height="12.5" fill="#930001"/><rect x="552" y="60" width="12.5" height="12.5" fill="#930000"/><rect x="564" y="60" width="12.5" height="12.5" fill="#930000"/><rect x="576" y="60" width="12.5" height="12.5" fill="#930000"/><rect x="588" y="60" width="12.5" height="12.5" fill="#930000"/><rect x="600" y="60" width="12.5" height="12.5" fill="#930000"/><rect x="612" y="60" width="12.5" height="12.5" fill="#930000"/><rect x="0" y="72" width="12.5" height="12.5" fill="#009347"/><rect x="12" y="72" width="12.5" height="12.5" fill="#009347"/><rect x="24" y="72" width="12.5" height="12.5" fill="#009348"/><rect x="36" y="72" width="12.5" height="12.5" fill="#009348"/><rect x="48" y="72" width="12.5" height="12.5" fill="#009349"/><rect x="60" y="72" width="12.5" height="12.5" fill="#00934a"/><rect x="72" y="72" width="12.5" height="12.5" fill="#00934a"/><rect x="84" y="72" width="12.5" height="12.5" fill="#00934b"/><rect x="96" y="72" width="12.5" height="12.5" fill="#00934c"/><rect x="108" y="72" width="12.5" height="12.5" fill="#00934d"/><rect x="120" y="72" width="12.5" height="12.5" fill="#0c934e"/><rect x="132" y="72" width="12.5" height="12.5" fill="#1d934f"/><rect x="144" y="72" width="12.5" height="12.5" fill="#2e9350"/><rect x="156" y="72" width="12.5" height="12.5" fill="#419351"/><rect x="168" y="72" width="12.5" height="12.5" fill="#559352"/><rect x="180" y="72" width="12.5" height="12.5" fill="#6a9353"/><rect x="192" y="72" width="12.5" height="12.5" fill="#829354"/><rect x="204" y="72" width="12.5" height="12.5" fill="#938c52"/><rect x="216" y="72" width="12.5" height="12.5" fill="#937747"/><rect x="228" y="72" width="12.5" height="12.5" fill="#93663e"/><rect x="240" y="72" width="12.5" height="12.5" fill="#935836"/><rect x="252" y="72" width="12.5" height="12.5" fill="#934d30"/><rect x="264" y="72" width="12.5" height="12.5" fill="#93432b"/><rect x="276" y="72" width="12.5" height="12.5" fill="#933b27"/><rect x="288" y="72" width="12.5" height="12.5" fill="#933323"/><rect x="300" y="72" width="12.5" height="12.5" fill="#932d20"/><rect x="312" y="72" width="12.5" height="12.5" fill="#93281d"/><rect x="324" y="72" width="12.5" height="12.5" fill="#93231b"/><rect x="336" y="72" width="12.5" height="12.5" fill="#931e18"/><rect x="348" y="72" width="12.5" height="12.5" fill="#931a16"/><rect x="360" y="72" width="12.5" height="12.5" fill="#931714"/><rect x="372" y="72" width="12.5" height="12.5" fill="#931413"/><rect x="384" y="72" width="12.5" height="12.5" fill="#931111"/><rect x="396" y="72" width="12.5" height="12.5" fill="#930e10"/><rect x="408" y="72" width="12.5" height="12.5" fill="#930c0f"/><rect x="420" y="72" width="12.5" height="12.5" fill="#93090d"/><rect x="432" y="72" width="12.5" height="12.5" fill="#93070c"/><rect x="444" y="72" width="12.5" height="12.5" fill="#93050b"/><rect x="456" y="72" width="12.5" height="12.5" fill="#93030a"/><rect x="468" y="72" width="12.5" height="12.5" fill="#930209"/><rect x="480" y="72" width="12.5" height="12.5" fill="#930008"/><rect x="492" y="72" width="12.5" height="12.5" fill="#930008"/><rect x="504" y="72" width="12.5" height="12.5" fill="#930007"/><rect x="516" y="72" width="12.5" height="12.5" fill="#930006"/><rect x="528" y="72" width="12.5" height="12.5" fill="#930006"/><rect x="540" y="72" width="12.5" height="12.5" fill="#930005"/><rect x="552" y="72" width="12.5" height="12.5" fill="#930004"/><rect x="564" y="72" width="12.5" height="12.5" fill="#930004"/><rect x="576" y="72" width="12.5" height="12.5" fill="#930003"/><rect x="588" y="72" width="12.5" height="12.5" fill="#930003"/><rect x="600" y="72" width="12.5" height="12.5" fill="#930002"/><rect x="612" y="72" width="12.5" height="12.5" fill="#930002"/><rect x="0" y="84" width="12.5" height="12.5" fill="#009355"/><rect x="12" y="84" width="12.5" height="12.5" fill="#009356"/><rect x="24" y="84" width="12.5" height="12.5" fill="#009357"/><rect x="36" y="84" width="12.5" height="12.5" fill="#009358"/><rect x="48" y="84" width="12.5" height="12.5" fill="#009359"/><rect x="60" y="84" width="12.5" height="12.5" fill="#00935b"/><rect x="72" y="84" width="12.5" height="12.5" fill="#00935c"/><rect x="84" y="84" width="12.5" height="12.5" fill="#00935d"/><rect x="96" y="84" width="12.5" height="12.5" fill="#00935e"/><rect x="108" y="84" width="12.5" height="12.5" fill="#009360"/><rect x="120" y="84" width="12.5" height="12.5" fill="#099362"/><rect x="132" y="84" width="12.5" height="12.5" fill="#1a9363"/><rect x="144" y="84" width="12.5" height="12.5" fill="#2c9365"/><rect x="156" y="84" width="12.5" height="12.5" fill="#3f9367"/><rect x="168" y="84" width="12.5" height="12.5" fill="#549369"/><rect x="180" y="84" width="12.5" height="12.5" fill="#6b936b"/><rect x="192" y="84" width="12.5" height="12.5" fill="#83936e"/><rect x="204" y="84" width="12.5" height="12.5" fill="#938969"/><rect x="216" y="84" width="12.5" height="12.5" fill="#93745b"/><rect x="228" y="84" width="12.5" height="12.5" fill="#936350"/><rect x="240" y="84" width="12.5" height="12.5" fill="#935547"/><rect x="252" y="84" width="12.5" height="12.5" fill="#934a3f"/><rect x="264" y="84" width="12.5" height="12.5" fill="#934039"/><rect x="276" y="84" width="12.5" height="12.5" fill="#933833"/><rect x="288" y="84" width="12.5" height="12.5" fill="#93312f"/><rect x="300" y="84" width="12.5" height="12.5" fill="#932a2b"/><rect x="312" y="84" width="12.5" height="12.5" fill="#932527"/><rect x="324" y="84" width="12.5" height="12.5" fill="#932024"/><rect x="336" y="84" width="12.5" height="12.5" fill="#931c21"/><rect x="348" y="84" width="12.5" height="12.5" fill="#93181f"/><rect x="360" y="84" width="12.5" height="12.5" fill="#93151c"/><rect x="372" y="84" width="12.5" height="12.5" fill="#93111a"/><rect x="384" y="84" width="12.5" height="12.5" fill="#930f18"/><rect x="396" y="84" width="12.5" height="12.5" fill="#930c17"/><rect x="408" y="84" width="12.5" height="12.5" fill="#930a15"/><rect x="420" y="84" width="12.5" height="12.5" fill="#930714"/><rect x="432" y="84" width="12.5" height="12.5" fill="#930512"/><rect x="444" y="84" width="12.5" height="12.5" fill="#930311"/><rect x="456" y="84" width="12.5" height="12.5" fill="#930210"/><rect x="468" y="84" width="12.5" height="12.5" fill="#93000f"/><rect x="480" y="84" width="12.5" height="12.5" fill="#93000e"/><rect x="492" y="84" width="12.5" height="12.5" fill="#93000d"/><rect x="504" y="84" width="12.5" height="12.5" fill="#93000c"/><rect x="516" y="84" width="12.5" height="12.5" fill="#93000b"/><rect x="528" y="84" width="12.5" height="12.5" fill="#93000a"/><rect x="540" y="84" width="12.5" height="12.5" fill="#930009"/><rect x="552" y="84" width="12.5" height="12.5" fill="#930009"/><rect x="564" y="84" width="12.5" height="12.5" fill="#930008"/><rect x="576" y="84" width="12.5" height="12.5" fill="#930007"/><rect x="588" y="84" width="12.5" height="12.5" fill="#930007"/><rect x="600" y="84" width="12.5" height="12.5" fill="#930006"/><rect x="612" y="84" width="12.5" height="12.5" fill="#930006"/><rect x="0" y="96" width="12.5" height="12.5" fill="#009365"/><rect x="12" y="96" width="12.5" height="12.5" fill="#009366"/><rect x="24" y="96" width="12.5" height="12.5" fill="#009368"/><rect x="36" y="96" width="12.5" height="12.5" fill="#009369"/><rect x="48" y="96" width="12.5" height="12.5" fill="#00936b"/><rect x="60" y="96" width="12.5" height="12.5" fill="#00936d"/><rect x="72" y="96" width="12.5" height="12.5" fill="#00936e"/><rect x="84" y="96" width="12.5" height="12.5" fill="#009370"/><rect x="96" y="96" width="12.5" height="12.5" fill="#009373"/><rect x="108" y="96" width="12.5" height="12.5" fill="#009375"/><rect x="120" y="96" width="12.5" height="12.5" fill="#059377"/><rect x="132" y="96" width="12.5" height="12.5" fill="#17937a"/><rect x="144" y="96" width="12.5" height="12.5" fill="#29937c"/><rect x="156" y="96" width="12.5" height="12.5" fill="#3e937f"/><rect x="168" y="96" width="12.5" height="12.5" fill="#539383"/><rect x="180" y="96" width="12.5" height="12.5" fill="#6b9386"/><rect x="192" y="96" width="12.5" height="12.5" fill="#85938a"/><rect x="204" y="96" width="12.5" height="12.5" fill="#938782"/><rect x="216" y="96" width="12.5" height="12.5" fill="#937170"/><rect x="228" y="96" width="12.5" height="12.5" fill="#936063"/><rect x="240" y="96" width="12.5" height="12.5" fill="#935258"/><rect x="252" y="96" width="12.5" height="12.5" fill="#93464e"/><rect x="264" y="96" width="12.5" height="12.5" fill="#933d47"/><rect x="276" y="96" width="12.5" height="12.5" fill="#933540"/><rect x="288" y="96" width="12.5" height="12.5" fill="#932e3b"/><rect x="300" y="96" width="12.5" height="12.5" fill="#932836"/><rect x="312" y="96" width="12.5" height="12.5" fill="#932231"/><rect x="324" y="96" width="12.5" height="12.5" fill="#931e2e"/><rect x="336" y="96" width="12.5" height="12.5" fill="#93192a"/><rect x="348" y="96" width="12.5" height="12.5" fill="#931627"/><rect x="360" y="96" width="12.5" height="12.5" fill="#931224"/><rect x="372" y="96" width="12.5" height="12.5" fill="#930f22"/><rect x="384" y="96" width="12.5" height="12.5" fill="#930c20"/><rect x="396" y="96" width="12.5" height="12.5" fill="#930a1e"/><rect x="408" y="96" width="12.5" height="12.5" fill="#93071c"/><rect x="420" y="96" width="12.5" height="12.5" fill="#93051a"/><rect x="432" y="96" width="12.5" height="12.5" fill="#930318"/><rect x="444" y="96" width="12.5" height="12.5" fill="#930117"/><rect x="456" y="96" width="12.5" height="12.5" fill="#930016"/><rect x="468" y="96" width="12.5" height="12.5" fill="#930014"/><rect x="480" y="96" width="12.5" height="12.5" fill="#930013"/><rect x="492" y="96" width="12.5" height="12.5" fill="#930012"/><rect x="504" y="96" width="12.5" height="12.5" fill="#930011"/><rect x="516" y="96" width="12.5" height="12.5" fill="#930010"/><rect x="528" y="96" width="12.5" height="12.5" fill="#93000f"/><rect x="540" y="96" width="12.5" height="12.5" fill="#93000e"/><rect x="552" y="96" width="12.5" height="12.5" fill="#93000d"/><rect x="564" y="96" width="12.5" height="12.5" fill="#93000c"/><rect x="576" y="96" width="12.5" height="12.5" fill="#93000c"/><rect x="588" y="96" width="12.5" height="12.5" fill="#93000b"/><rect x="600" y="96" width="12.5" height="12.5" fill="#93000a"/><rect x="612" y="96" width="12.5" height="12.5" fill="#93000a"/><rect x="0" y="108" width="12.5" height="12.5" fill="#009375"/><rect x="12" y="108" width="12.5" height="12.5" fill="#009377"/><rect x="24" y="108" width="12.5" height="12.5" fill="#009379"/><rect x="36" y="108" width="12.5" height="12.5" fill="#00937b"/><rect x="48" y="108" width="12.5" height="12.5" fill="#00937e"/><rect x="60" y="108" width="12.5" height="12.5" fill="#009380"/><rect x="72" y="108" width="12.5" height="12.5" fill="#009383"/><rect x="84" y="108" width="12.5" height="12.5" fill="#009385"/><rect x="96" y="108" width="12.5" height="12.5" fill="#009388"/><rect x="108" y="108" width="12.5" height="12.5" fill="#00938b"/><rect x="120" y="108" width="12.5" height="12.5" fill="#02938f"/><rect x="132" y="108" width="12.5" height="12.5" fill="#149392"/><rect x="144" y="108" width="12.5" height="12.5" fill="#269193"/><rect x="156" y="108" width="12.5" height="12.5" fill="#398d93"/><rect x="168" y="108" width="12.5" height="12.5" fill="#4d8993"/><rect x="180" y="108" width="12.5" height="12.5" fill="#618593"/><rect x="192" y="108" width="12.5" height="12.5" fill="#768093"/><rect x="204" y="108" width="12.5" height="12.5" fill="#8b7c93"/><rect x="216" y="108" width="12.5" height="12.5" fill="#936e87"/><rect x="228" y="108" width="12.5" height="12.5" fill="#935c77"/><rect x="240" y="108" width="12.5" height="12.5" fill="#934e69"/><rect x="252" y="108" width="12.5" height="12.5" fill="#93435e"/><rect x="264" y="108" width="12.5" height="12.5" fill="#933a55"/><rect x="276" y="108" width="12.5" height="12.5" fill="#93324d"/><rect x="288" y="108" width="12.5" height="12.5" fill="#932b47"/><rect x="300" y="108" width="12.5" height="12.5" fill="#932541"/><rect x="312" y="108" width="12.5" height="12.5" fill="#93203c"/><rect x="324" y="108" width="12.5" height="12.5" fill="#931b37"/><rect x="336" y="108" width="12.5" height="12.5" fill="#931734"/><rect x="348" y="108" width="12.5" height="12.5" fill="#931330"/><rect x="360" y="108" width="12.5" height="12.5" fill="#93102d"/><rect x="372" y="108" width="12.5" height="12.5" fill="#930d2a"/><rect x="384" y="108" width="12.5" height="12.5" fill="#930a27"/><rect x="396" y="108" width="12.5" height="12.5" fill="#930825"/><rect x="408" y="108" width="12.5" height="12.5" fill="#930523"/><rect x="420" y="108" width="12.5" height="12.5" fill="#930321"/><rect x="432" y="108" width="12.5" height="12.5" fill="#93011f"/><rect x="444" y="108" width="12.5" height="12.5" fill="#93001d"/><rect x="456" y="108" width="12.5" height="12.5" fill="#93001b"/><rect x="468" y="108" width="12.5" height="12.5" fill="#93001a"/><rect x="480" y="108" width="12.5" height="12.5" fill="#930018"/><rect x="492" y="108" width="12.5" height="12.5" fill="#930017"/><rect x="504" y="108" width="12.5" height="12.5" fill="#930016"/><rect x="516" y="108" width="12.5" height="12.5" fill="#930015"/><rect x="528" y="108" width="12.5" height="12.5" fill="#930014"/><rect x="540" y="108" width="12.5" height="12.5" fill="#930013"/><rect x="552" y="108" width="12.5" height="12.5" fill="#930012"/><rect x="564" y="108" width="12.5" height="12.5" fill="#930011"/><rect x="576" y="108" width="12.5" height="12.5" fill="#930010"/><rect x="588" y="108" width="12.5" height="12.5" fill="#93000f"/><rect x="600" y="108" width="12.5" height="12.5" fill="#93000e"/><rect x="612" y="108" width="12.5" height="12.5" fill="#93000e"/><rect x="0" y="120" width="12.5" height="12.5" fill="#009387"/><rect x="12" y="120" width="12.5" height="12.5" fill="#009389"/><rect x="24" y="120" width="12.5" height="12.5" fill="#00938c"/><rect x="36" y="120" width="12.5" height="12.5" fill="#00938f"/><rect x="48" y="120" width="12.5" height="12.5" fill="#009392"/><rect x="60" y="120" width="12.5" height="12.5" fill="#009293"/><rect x="72" y="120" width="12.5" height="12.5" fill="#008f93"/><rect x="84" y="120" width="12.5" height="12.5" fill="#008c93"/><rect x="96" y="120" width="12.5" height="12.5" fill="#008893"/><rect x="108" y="120" width="12.5" height="12.5" fill="#008593"/><rect x="120" y="120" width="12.5" height="12.5" fill="#008193"/><rect x="132" y="120" width="12.5" height="12.5" fill="#0e7e93"/><rect x="144" y="120" width="12.5" height="12.5" fill="#1e7a93"/><rect x="156" y="120" width="12.5" height="12.5" fill="#2f7693"/><rect x="168" y="120" width="12.5" height="12.5" fill="#407293"/><rect x="180" y="120" width="12.5" height="12.5" fill="#516f93"/><rect x="192" y="120" width="12.5" height="12.5" fill="#636b93"/><rect x="204" y="120" width="12.5" height="12.5" fill="#766693"/><rect x="216" y="120" width="12.5" height="12.5" fill="#886293"/><rect x="228" y="120" width="12.5" height="12.5" fill="#93598b"/><rect x="240" y="120" width="12.5" height="12.5" fill="#934b7c"/><rect x="252" y="120" width="12.5" height="12.5" fill="#93406f"/><rect x="264" y="120" width="12.5" height="12.5" fill="#933664"/><rect x="276" y="120" width="12.5" height="12.5" fill="#932e5b"/><rect x="288" y="120" width="12.5" height="12.5" fill="#932853"/><rect x="300" y="120" width="12.5" height="12.5" fill="#93224d"/><rect x="312" y="120" width="12.5" height="12.5" fill="#931d47"/><rect x="324" y="120" width="12.5" height="12.5" fill="#931842"/><rect x="336" y="120" width="12.5" height="12.5" fill="#93143d"/><rect x="348" y="120" width="12.5" height="12.5" fill="#931139"/><rect x="360" y="120" width="12.5" height="12.5" fill="#930d35"/><rect x="372" y="120" width="12.5" height="12.5" fill="#930a32"/><rect x="384" y="120" width="12.5" height="12.5" fill="#93082f"/><rect x="396" y="120" width="12.5" height="12.5" fill="#93052c"/><rect x="408" y="120" width="12.5" height="12.5" fill="#93032a"/><rect x="420" y="120" width="12.5" height="12.5" fill="#930127"/><rect x="432" y="120" width="12.5" height="12.5" fill="#930025"/><rect x="444" y="120" width="12.5" height="12.5" fill="#930023"/><rect x="456" y="120" width="12.5" height="12.5" fill="#930021"/><rect x="468" y="120" width="12.5" height="12.5" fill="#930020"/><rect x="480" y="120" width="12.5" height="12.5" fill="#93001e"/><rect x="492" y="120" width="12.5" height="12.5" fill="#93001c"/><rect x="504" y="120" width="12.5" height="12.5" fill="#93001b"/><rect x="516" y="120" width="12.5" height="12.5" fill="#93001a"/><rect x="528" y="120" width="12.5" height="12.5" fill="#930018"/><rect x="540" y="120" width="12.5" height="12.5" fill="#930017"/><rect x="552" y="120" width="12.5" height="12.5" fill="#930016"/><rect x="564" y="120" width="12.5" height="12.5" fill="#930015"/><rect x="576" y="120" width="12.5" height="12.5" fill="#930014"/><rect x="588" y="120" width="12.5" height="12.5" fill="#930013"/><rect x="600" y="120" width="12.5" height="12.5" fill="#930012"/><rect x="612" y="120" width="12.5" height="12.5" fill="#930011"/><rect x="0" y="132" width="12.5" height="12.5" fill="#008d93"/><rect x="12" y="132" width="12.5" height="12.5" fill="#008b93"/><rect x="24" y="132" width="12.5" height="12.5" fill="#008893"/><rect x="36" y="132" width="12.5" height="12.5" fill="#008593"/><rect x="48" y="132" width="12.5" height="12.5" fill="#008293"/><rect x="60" y="132" width="12.5" height="12.5" fill="#007f93"/><rect x="72" y="132" width="12.5" height="12.5" fill="#007c93"/><rect x="84" y="132" width="12.5" height="12.5" fill="#007993"/><rect x="96" y="132" width="12.5" height="12.5" fill="#007593"/><rect x="108" y="132" width="12.5" height="12.5" fill="#007293"/><rect x="120" y="132" width="12.5" height="12.5" fill="#006f93"/><rect x="132" y="132" width="12.5" height="12.5" fill="#096b93"/><rect x="144" y="132" width="12.5" height="12.5" fill="#176893"/><rect x="156" y="132" width="12.5" height="12.5" fill="#266493"/><rect x="168" y="132" width="12.5" height="12.5" fill="#356193"/><rect x="180" y="132" width="12.5" height="12.5" fill="#455d93"/><rect x="192" y="132" width="12.5" height="12.5" fill="#555993"/><rect x="204" y="132" width="12.5" height="12.5" fill="#655693"/><rect x="216" y="132" width="12.5" height="12.5" fill="#755293"/><rect x="228" y="132" width="12.5" height="12.5" fill="#864e93"/><rect x="240" y="132" width="12.5" height="12.5" fill="#93478f"/><rect x="252" y="132" width="12.5" height="12.5" fill="#933c80"/><rect x="264" y="132" width="12.5" height="12.5" fill="#933374"/><rect x="276" y="132" width="12.5" height="12.5" fill="#932b69"/><rect x="288" y="132" width="12.5" height="12.5" fill="#932460"/><rect x="300" y="132" width="12.5" height="12.5" fill="#931f59"/><rect x="312" y="132" width="12.5" height="12.5" fill="#931a52"/><rect x="324" y="132" width="12.5" height="12.5" fill="#93154c"/><rect x="336" y="132" width="12.5" height="12.5" fill="#931147"/><rect x="348" y="132" width="12.5" height="12.5" fill="#930e42"/><rect x="360" y="132" width="12.5" height="12.5" fill="#930b3e"/><rect x="372" y="132" width="12.5" height="12.5" fill="#93083a"/><rect x="384" y="132" width="12.5" height="12.5" fill="#930537"/><rect x="396" y="132" width="12.5" height="12.5" fill="#930334"/><rect x="408" y="132" width="12.5" height="12.5" fill="#930131"/><rect x="420" y="132" width="12.5" height="12.5" fill="#93002e"/><rect x="432" y="132" width="12.5" height="12.5" fill="#93002c"/><rect x="444" y="132" width="12.5" height="12.5" fill="#930029"/><rect x="456" y="132" width="12.5" height="12.5" fill="#930027"/><rect x="468" y="132" width="12.5" height="12.5" fill="#930025"/><rect x="480" y="132" width="12.5" height="12.5" fill="#930023"/><rect x="492" y="132" width="12.5" height="12.5" fill="#930022"/><rect x="504" y="132" width="12.5" height="12.5" fill="#930020"/><rect x="516" y="132" width="12.5" height="12.5" fill="#93001f"/><rect x="528" y="132" width="12.5" height="12.5" fill="#93001d"/><rect x="540" y="132" width="12.5" height="12.5" fill="#93001c"/><rect x="552" y="132" width="12.5" height="12.5" fill="#93001b"/><rect x="564" y="132" width="12.5" height="12.5" fill="#93001a"/><rect x="576" y="132" width="12.5" height="12.5" fill="#930018"/><rect x="588" y="132" width="12.5" height="12.5" fill="#930017"/><rect x="600" y="132" width="12.5" height="12.5" fill="#930016"/><rect x="612" y="132" width="12.5" height="12.5" fill="#930015"/><rect x="0" y="144" width="12.5" height="12.5" fill="#007d93"/><rect x="12" y="144" width="12.5" height="12.5" fill="#007a93"/><rect x="24" y="144" width="12.5" height="12.5" fill="#007893"/><rect x="36" y="144" width="12.5" height="12.5" fill="#007593"/><rect x="48" y="144" width="12.5" height="12.5" fill="#007293"/><rect x="60" y="144" width="12.5" height="12.5" fill="#006f93"/><rect x="72" y="144" width="12.5" height="12.5" fill="#006c93"/><rect x="84" y="144" width="12.5" height="12.5" fill="#006993"/><rect x="96" y="144" width="12.5" height="12.5" fill="#006693"/><rect x="108" y="144" width="12.5" height="12.5" fill="#006393"/><rect x="120" y="144" width="12.5" height="12.5" fill="#006093"/><rect x="132" y="144" width="12.5" height="12.5" fill="#055d93"/><rect x="144" y="144" width="12.5" height="12.5" fill="#125993"/><rect x="156" y="144" width="12.5" height="12.5" fill="#1f5693"/><rect x="168" y="144" width="12.5" height="12.5" fill="#2d5393"/><rect x="180" y="144" width="12.5" height="12.5" fill="#3b4f93"/><rect x="192" y="144" width="12.5" height="12.5" fill="#494c93"/><rect x="204" y="144" width="12.5" height="12.5" fill="#584893"/><rect x="216" y="144" width="12.5" height="12.5" fill="#664493"/><rect x="228" y="144" width="12.5" height="12.5" fill="#754193"/><rect x="240" y="144" width="12.5" height="12.5" fill="#853d93"/><rect x="252" y="144" width="12.5" height="12.5" fill="#933892"/><rect x="264" y="144" width="12.5" height="12.5" fill="#932f84"/><rect x="276" y="144" width="12.5" height="12.5" fill="#932878"/><rect x="288" y="144" width="12.5" height="12.5" fill="#93216e"/><rect x="300" y="144" width="12.5" height="12.5" fill="#931b65"/><rect x="312" y="144" width="12.5" height="12.5" fill="#93175d"/><rect x="324" y="144" width="12.5" height="12.5" fill="#931257"/><rect x="336" y="144" width="12.5" height="12.5" fill="#930f51"/><rect x="348" y="144" width="12.5" height="12.5" fill="#930b4c"/><rect x="360" y="144" width="12.5" height="12.5" fill="#930847"/><rect x="372" y="144" width="12.5" height="12.5" fill="#930543"/><rect x="384" y="144" width="12.5" height="12.5" fill="#93033f"/><rect x="396" y="144" width="12.5" height="12.5" fill="#93013b"/><rect x="408" y="144" width="12.5" height="12.5" fill="#930038"/><rect x="420" y="144" width="12.5" height="12.5" fill="#930035"/><rect x="432" y="144" width="12.5" height="12.5" fill="#930032"/><rect x="444" y="144" width="12.5" height="12.5" fill="#930030"/><rect x="456" y="144" width="12.5" height="12.5" fill="#93002d"/><rect x="468" y="144" width="12.5" height="12.5" fill="#93002b"/><rect x="480" y="144" width="12.5" height="12.5" fill="#930029"/><rect x="492" y="144" width="12.5" height="12.5" fill="#930027"/><rect x="504" y="144" width="12.5" height="12.5" fill="#930025"/><rect x="516" y="144" width="12.5" height="12.5" fill="#930024"/><rect x="528" y="144" width="12.5" height="12.5" fill="#930022"/><rect x="540" y="144" width="12.5" height="12.5" fill="#930021"/><rect x="552" y="144" width="12.5" height="12.5" fill="#93001f"/><rect x="564" y="144" width="12.5" height="12.5" fill="#93001e"/><rect x="576" y="144" width="12.5" height="12.5" fill="#93001d"/><rect x="588" y="144" width="12.5" height="12.5" fill="#93001c"/><rect x="600" y="144" width="12.5" height="12.5" fill="#93001b"/><rect x="612" y="144" width="12.5" height="12.5" fill="#930019"/><rect x="0" y="156" width="12.5" height="12.5" fill="#006f93"/><rect x="12" y="156" width="12.5" height="12.5" fill="#006d93"/><rect x="24" y="156" width="12.5" height="12.5" fill="#006a93"/><rect x="36" y="156" width="12.5" height="12.5" fill="#006793"/><rect x="48" y="156" width="12.5" height="12.5" fill="#006593"/><rect x="60" y="156" width="12.5" height="12.5" fill="#006293"/><rect x="72" y="156" width="12.5" height="12.5" fill="#005f93"/><rect x="84" y="156" width="12.5" height="12.5" fill="#005c93"/><rect x="96" y="156" width="12.5" height="12.5" fill="#005993"/><rect x="108" y="156" width="12.5" height="12.5" fill="#005693"/><rect x="120" y="156" width="12.5" height="12.5" fill="#005393"/><rect x="132" y="156" width="12.5" height="12.5" fill="#025093"/><rect x="144" y="156" width="12.5" height="12.5" fill="#0e4d93"/><rect x="156" y="156" width="12.5" height="12.5" fill="#1a4a93"/><rect x="168" y="156" width="12.5" height="12.5" fill="#264793"/><rect x="180" y="156" width="12.5" height="12.5" fill="#334493"/><rect x="192" y="156" width="12.5" height="12.5" fill="#404093"/><rect x="204" y="156" width="12.5" height="12.5" fill="#4d3d93"/><rect x="216" y="156" width="12.5" height="12.5" fill="#5a3993"/><rect x="228" y="156" width="12.5" height="12.5" fill="#683693"/><rect x="240" y="156" width="12.5" height="12.5" fill="#753293"/><rect x="252" y="156" width="12.5" height="12.5" fill="#832f93"/><rect x="264" y="156" width="12.5" height="12.5" fill="#922b93"/><rect x="276" y="156" width="12.5" height="12.5" fill="#932487"/><rect x="288" y="156" width="12.5" height="12.5" fill="#931e7c"/><rect x="300" y="156" width="12.5" height="12.5" fill="#931872"/><rect x="312" y="156" width="12.5" height="12.5" fill="#931369"/><rect x="324" y="156" width="12.5" height="12.5" fill="#930f62"/><rect x="336" y="156" width="12.5" height="12.5" fill="#930c5b"/><rect x="348" y="156" width="12.5" height="12.5" fill="#930855"/><rect x="360" y="156" width="12.5" height="12.5" fill="#930550"/><rect x="372" y="156" width="12.5" height="12.5" fill="#93034b"/><rect x="384" y="156" width="12.5" height="12.5" fill="#930047"/><rect x="396" y="156" width="12.5" height="12.5" fill="#930043"/><rect x="408" y="156" width="12.5" height="12.5" fill="#93003f"/><rect x="420" y="156" width="12.5" height="12.5" fill="#93003c"/><rect x="432" y="156" width="12.5" height="12.5" fill="#930039"/><rect x="444" y="156" width="12.5" height="12.5" fill="#930036"/><rect x="456" y="156" width="12.5" height="12.5" fill="#930034"/><rect x="468" y="156" width="12.5" height="12.5" fill="#930031"/><rect x="480" y="156" width="12.5" height="12.5" fill="#93002f"/><rect x="492" y="156" width="12.5" height="12.5" fill="#93002d"/><rect x="504" y="156" width="12.5" height="12.5" fill="#93002b"/><rect x="516" y="156" width="12.5" height="12.5" fill="#930029"/><rect x="528" y="156" width="12.5" height="12.5" fill="#930027"/><rect x="540" y="156" width="12.5" height="12.5" fill="#930026"/><rect x="552" y="156" width="12.5" height="12.5" fill="#930024"/><rect x="564" y="156" width="12.5" height="12.5" fill="#930023"/><rect x="576" y="156" width="12.5" height="12.5" fill="#930021"/><rect x="588" y="156" width="12.5" height="12.5" fill="#930020"/><rect x="600" y="156" width="12.5" height="12.5" fill="#93001f"/><rect x="612" y="156" width="12.5" height="12.5" fill="#93001e"/><rect x="0" y="168" width="12.5" height="12.5" fill="#006493"/><rect x="12" y="168" width="12.5" height="12.5" fill="#006193"/><rect x="24" y="168" width="12.5" height="12.5" fill="#005f93"/><rect x="36" y="168" width="12.5" height="12.5" fill="#005c93"/><rect x="48" y="168" width="12.5" height="12.5" fill="#005993"/><rect x="60" y="168" width="12.5" height="12.5" fill="#005793"/><rect x="72" y="168" width="12.5" height="12.5" fill="#005493"/><rect x="84" y="168" width="12.5" height="12.5" fill="#005193"/><rect x="96" y="168" width="12.5" height="12.5" fill="#004f93"/><rect x="108" y="168" width="12.5" height="12.5" fill="#004c93"/><rect x="120" y="168" width="12.5" height="12.5" fill="#004993"/><rect x="132" y="168" width="12.5" height="12.5" fill="#004693"/><rect x="144" y="168" width="12.5" height="12.5" fill="#0a4393"/><rect x="156" y="168" width="12.5" height="12.5" fill="#154093"/><rect x="168" y="168" width="12.5" height="12.5" fill="#203d93"/><rect x="180" y="168" width="12.5" height="12.5" fill="#2c3a93"/><rect x="192" y="168" width="12.5" height="12.5" fill="#383793"/><rect x="204" y="168" width="12.5" height="12.5" fill="#443493"/><rect x="216" y="168" width="12.5" height="12.5" fill="#503093"/><rect x="228" y="168" width="12.5" height="12.5" fill="#5c2d93"/><rect x="240" y="168" width="12.5" height="12.5" fill="#692a93"/><rect x="252" y="168" width="12.5" height="12.5" fill="#752693"/><rect x="264" y="168" width="12.5" height="12.5" fill="#822393"/><rect x="276" y="168" width="12.5" height="12.5" fill="#901f93"/><rect x="288" y="168" width="12.5" height="12.5" fill="#931a8a"/><rect x="300" y="168" width="12.5" height="12.5" fill="#93157f"/><rect x="312" y="168" width="12.5" height="12.5" fill="#931076"/><rect x="324" y="168" width="12.5" height="12.5" fill="#930c6d"/><rect x="336" y="168" width="12.5" height="12.5" fill="#930966"/><rect x="348" y="168" width="12.5" height="12.5" fill="#93065f"/><rect x="360" y="168" width="12.5" height="12.5" fill="#930359"/><rect x="372" y="168" width="12.5" height="12.5" fill="#930054"/><rect x="384" y="168" width="12.5" height="12.5" fill="#93004f"/><rect x="396" y="168" width="12.5" height="12.5" fill="#93004b"/><rect x="408" y="168" width="12.5" height="12.5" fill="#930047"/><rect x="420" y="168" width="12.5" height="12.5" fill="#930043"/><rect x="432" y="168" width="12.5" height="12.5" fill="#930040"/><rect x="444" y="168" width="12.5" height="12.5" fill="#93003d"/><rect x="456" y="168" width="12.5" height="12.5" fill="#93003a"/><rect x="468" y="168" width="12.5" height="12.5" fill="#930037"/><rect x="480" y="168" width="12.5" height="12.5" fill="#930035"/><rect x="492" y="168" width="12.5" height="12.5" fill="#930032"/><rect x="504" y="168" width="12.5" height="12.5" fill="#930030"/><rect x="516" y="168" width="12.5" height="12.5" fill="#93002e"/><rect x="528" y="168" width="12.5" height="12.5" fill="#93002c"/><rect x="540" y="168" width="12.5" height="12.5" fill="#93002b"/><rect x="552" y="168" width="12.5" height="12.5" fill="#930029"/><rect x="564" y="168" width="12.5" height="12.5" fill="#930027"/><rect x="576" y="168" width="12.5" height="12.5" fill="#930026"/><rect x="588" y="168" width="12.5" height="12.5" fill="#930024"/><rect x="600" y="168" width="12.5" height="12.5" fill="#930023"/><rect x="612" y="168" width="12.5" height="12.5" fill="#930022"/><rect x="0" y="180" width="12.5" height="12.5" fill="#005993"/><rect x="12" y="180" width="12.5" height="12.5" fill="#005793"/><rect x="24" y="180" width="12.5" height="12.5" fill="#005593"/><rect x="36" y="180" width="12.5" height="12.5" fill="#005293"/><rect x="48" y="180" width="12.5" height="12.5" fill="#005093"/><rect x="60" y="180" width="12.5" height="12.5" fill="#004d93"/><rect x="72" y="180" width="12.5" height="12.5" fill="#004b93"/><rect x="84" y="180" width="12.5" height="12.5" fill="#004893"/><rect x="96" y="180" width="12.5" height="12.5" fill="#004593"/><rect x="108" y="180" width="12.5" height="12.5" fill="#004393"/><rect x="120" y="180" width="12.5" height="12.5" fill="#004093"/><rect x="132" y="180" width="12.5" height="12.5" fill="#003d93"/><rect x="144" y="180" width="12.5" height="12.5" fill="#073a93"/><rect x="156" y="180" width="12.5" height="12.5" fill="#113893"/><rect x="168" y="180" width="12.5" height="12.5" fill="#1b3593"/><rect x="180" y="180" width="12.5" height="12.5" fill="#263293"/><rect x="192" y="180" width="12.5" height="12.5" fill="#312f93"/><rect x="204" y="180" width="12.5" height="12.5" fill="#3c2c93"/><rect x="216" y="180" width="12.5" height="12.5" fill="#472993"/><rect x="228" y="180" width="12.5" height="12.5" fill="#522693"/><rect x="240" y="180" width="12.5" height="12.5" fill="#5e2393"/><rect x="252" y="180" width="12.5" height="12.5" fill="#691f93"/><rect x="264" y="180" width="12.5" height="12.5" fill="#751c93"/><rect x="276" y="180" width="12.5" height="12.5" fill="#811993"/><rect x="288" y="180" width="12.5" height="12.5" fill="#8e1593"/><rect x="300" y="180" width="12.5" height="12.5" fill="#93118d"/><rect x="312" y="180" width="12.5" height="12.5" fill="#930d82"/><rect x="324" y="180" width="12.5" height="12.5" fill="#930979"/><rect x="336" y="180" width="12.5" height="12.5" fill="#930671"/><rect x="348" y="180" width="12.5" height="12.5" fill="#930369"/><rect x="360" y="180" width="12.5" height="12.5" fill="#930063"/><rect x="372" y="180" width="12.5" height="12.5" fill="#93005d"/><rect x="384" y="180" width="12.5" height="12.5" fill="#930058"/><rect x="396" y="180" width="12.5" height="12.5" fill="#930053"/><rect x="408" y="180" width="12.5" height="12.5" fill="#93004f"/><rect x="420" y="180" width="12.5" height="12.5" fill="#93004b"/><rect x="432" y="180" width="12.5" height="12.5" fill="#930047"/><rect x="444" y="180" width="12.5" height="12.5" fill="#930043"/><rect x="456" y="180" width="12.5" height="12.5" fill="#930040"/><rect x="468" y="180" width="12.5" height="12.5" fill="#93003d"/><rect x="480" y="180" width="12.5" height="12.5" fill="#93003b"/><rect x="492" y="180" width="12.5" height="12.5" fill="#930038"/><rect x="504" y="180" width="12.5" height="12.5" fill="#930036"/><rect x="516" y="180" width="12.5" height="12.5" fill="#930034"/><rect x="528" y="180" width="12.5" height="12.5" fill="#930032"/><rect x="540" y="180" width="12.5" height="12.5" fill="#930030"/><rect x="552" y="180" width="12.5" height="12.5" fill="#93002e"/><rect x="564" y="180" width="12.5" height="12.5" fill="#93002c"/><rect x="576" y="180" width="12.5" height="12.5" fill="#93002a"/><rect x="588" y="180" width="12.5" height="12.5" fill="#930029"/><rect x="600" y="180" width="12.5" height="12.5" fill="#930027"/><rect x="612" y="180" width="12.5" height="12.5" fill="#930026"/><rect x="0" y="192" width="12.5" height="12.5" fill="#005193"/><rect x="12" y="192" width="12.5" height="12.5" fill="#004e93"/><rect x="24" y="192" width="12.5" height="12.5" fill="#004c93"/><rect x="36" y="192" width="12.5" height="12.5" fill="#004a93"/><rect x="48" y="192" width="12.5" height="12.5" fill="#004793"/><rect x="60" y="192" width="12.5" height="12.5" fill="#004593"/><rect x="72" y="192" width="12.5" height="12.5" fill="#004293"/><rect x="84" y="192" width="12.5" height="12.5" fill="#004093"/><rect x="96" y="192" width="12.5" height="12.5" fill="#003d93"/><rect x="108" y="192" width="12.5" height="12.5" fill="#003b93"/><rect x="120" y="192" width="12.5" height="12.5" fill="#003893"/><rect x="132" y="192" width="12.5" height="12.5" fill="#003693"/><rect x="144" y="192" width="12.5" height="12.5" fill="#043393"/><rect x="156" y="192" width="12.5" height="12.5" fill="#0d3093"/><rect x="168" y="192" width="12.5" height="12.5" fill="#172e93"/><rect x="180" y="192" width="12.5" height="12.5" fill="#212b93"/><rect x="192" y="192" width="12.5" height="12.5" fill="#2b2893"/><rect x="204" y="192" width="12.5" height="12.5" fill="#352593"/><rect x="216" y="192" width="12.5" height="12.5" fill="#3f2293"/><rect x="228" y="192" width="12.5" height="12.5" fill="#4a1f93"/><rect x="240" y="192" width="12.5" height="12.5" fill="#551c93"/><rect x="252" y="192" width="12.5" height="12.5" fill="#5f1993"/><rect x="264" y="192" width="12.5" height="12.5" fill="#6a1693"/><rect x="276" y="192" width="12.5" height="12.5" fill="#751393"/><rect x="288" y="192" width="12.5" height="12.5" fill="#811093"/><rect x="300" y="192" width="12.5" height="12.5" fill="#8c0d93"/><rect x="312" y="192" width="12.5" height="12.5" fill="#93098f"/><rect x="324" y="192" width="12.5" height="12.5" fill="#930685"/><rect x="336" y="192" width="12.5" height="12.5" fill="#93027c"/><rect x="348" y="192" width="12.5" height="12.5" fill="#930074"/><rect x="360" y="192" width="12.5" height="12.5" fill="#93006d"/><rect x="372" y="192" width="12.5" height="12.5" fill="#930066"/><rect x="384" y="192" width="12.5" height="12.5" fill="#930061"/><rect x="396" y="192" width="12.5" height="12.5" fill="#93005b"/><rect x="408" y="192" width="12.5" height="12.5" fill="#930056"/><rect x="420" y="192" width="12.5" height="12.5" fill="#930052"/><rect x="432" y="192" width="12.5" height="12.5" fill="#93004e"/><rect x="444" y="192" width="12.5" height="12.5" fill="#93004a"/><rect x="456" y="192" width="12.5" height="12.5" fill="#930047"/><rect x="468" y="192" width="12.5" height="12.5" fill="#930044"/><rect x="480" y="192" width="12.5" height="12.5" fill="#930041"/><rect x="492" y="192" width="12.5" height="12.5" fill="#93003e"/><rect x="504" y="192" width="12.5" height="12.5" fill="#93003b"/><rect x="516" y="192" width="12.5" height="12.5" fill="#930039"/><rect x="528" y="192" width="12.5" height="12.5" fill="#930037"/><rect x="540" y="192" width="12.5" height="12.5" fill="#930035"/><rect x="552" y="192" width="12.5" height="12.5" fill="#930033"/><rect x="564" y="192" width="12.5" height="12.5" fill="#930031"/><rect x="576" y="192" width="12.5" height="12.5" fill="#93002f"/><rect x="588" y="192" width="12.5" height="12.5" fill="#93002d"/><rect x="600" y="192" width="12.5" height="12.5" fill="#93002c"/><rect x="612" y="192" width="12.5" height="12.5" fill="#93002a"/><rect x="0" y="204" width="12.5" height="12.5" fill="#004993"/><rect x="12" y="204" width="12.5" height="12.5" fill="#004793"/><rect x="24" y="204" width="12.5" height="12.5" fill="#004493"/><rect x="36" y="204" width="12.5" height="12.5" fill="#004293"/><rect x="48" y="204" width="12.5" height="12.5" fill="#004093"/><rect x="60" y="204" width="12.5" height="12.5" fill="#003e93"/><rect x="72" y="204" width="12.5" height="12.5" fill="#003b93"/><rect x="84" y="204" width="12.5" height="12.5" fill="#003993"/><rect x="96" y="204" width="12.5" height="12.5" fill="#003693"/><rect x="108" y="204" width="12.5" height="12.5" fill="#003493"/><rect x="120" y="204" width="12.5" height="12.5" fill="#003293"/><rect x="132" y="204" width="12.5" height="12.5" fill="#002f93"/><rect x="144" y="204" width="12.5" height="12.5" fill="#012c93"/><rect x="156" y="204" width="12.5" height="12.5" fill="#0a2a93"/><rect x="168" y="204" width="12.5" height="12.5" fill="#132793"/><rect x="180" y="204" width="12.5" height="12.5" fill="#1d2593"/><rect x="192" y="204" width="12.5" height="12.5" fill="#262293"/><rect x="204" y="204" width="12.5" height="12.5" fill="#2f1f93"/><rect x="216" y="204" width="12.5" height="12.5" fill="#391d93"/><rect x="228" y="204" width="12.5" height="12.5" fill="#431a93"/><rect x="240" y="204" width="12.5" height="12.5" fill="#4d1793"/><rect x="252" y="204" width="12.5" height="12.5" fill="#571493"/><rect x="264" y="204" width="12.5" height="12.5" fill="#611193"/><rect x="276" y="204" width="12.5" height="12.5" fill="#6b0e93"/><rect x="288" y="204" width="12.5" height="12.5" fill="#750b93"/><rect x="300" y="204" width="12.5" height="12.5" fill="#800893"/><rect x="312" y="204" width="12.5" height="12.5" fill="#8a0593"/><rect x="324" y="204" width="12.5" height="12.5" fill="#930292"/><rect x="336" y="204" width="12.5" height="12.5" fill="#930088"/><rect x="348" y="204" width="12.5" height="12.5" fill="#93007f"/><rect x="360" y="204" width="12.5" height="12.5" fill="#930077"/><rect x="372" y="204" width="12.5" height="12.5" fill="#930070"/><rect x="384" y="204" width="12.5" height="12.5" fill="#930069"/><rect x="396" y="204" width="12.5" height="12.5" fill="#930064"/><rect x="408" y="204" width="12.5" height="12.5" fill="#93005e"/><rect x="420" y="204" width="12.5" height="12.5" fill="#93005a"/><rect x="432" y="204" width="12.5" height="12.5" fill="#930055"/><rect x="444" y="204" width="12.5" height="12.5" fill="#930051"/><rect x="456" y="204" width="12.5" height="12.5" fill="#93004e"/><rect x="468" y="204" width="12.5" height="12.5" fill="#93004a"/><rect x="480" y="204" width="12.5" height="12.5" fill="#930047"/><rect x="492" y="204" width="12.5" height="12.5" fill="#930044"/><rect x="504" y="204" width="12.5" height="12.5" fill="#930041"/><rect x="516" y="204" width="12.5" height="12.5" fill="#93003f"/><rect x="528" y="204" width="12.5" height="12.5" fill="#93003c"/><rect x="540" y="204" width="12.5" height="12.5" fill="#93003a"/><rect x="552" y="204" width="12.5" height="12.5" fill="#930038"/><rect x="564" y="204" width="12.5" height="12.5" fill="#930036"/><rect x="576" y="204" width="12.5" height="12.5" fill="#930034"/><rect x="588" y="204" width="12.5" height="12.5" fill="#930032"/><rect x="600" y="204" width="12.5" height="12.5" fill="#930030"/><rect x="612" y="204" width="12.5" height="12.5" fill="#93002e"/><rect x="0" y="216" width="12.5" height="12.5" fill="#004293"/><rect x="12" y="216" width="12.5" height="12.5" fill="#004093"/><rect x="24" y="216" width="12.5" height="12.5" fill="#003e93"/><rect x="36" y="216" width="12.5" height="12.5" fill="#003b93"/><rect x="48" y="216" width="12.5" height="12.5" fill="#003993"/><rect x="60" y="216" width="12.5" height="12.5" fill="#003793"/><rect x="72" y="216" width="12.5" height="12.5" fill="#003593"/><rect x="84" y="216" width="12.5" height="12.5" fill="#003393"/><rect x="96" y="216" width="12.5" height="12.5" fill="#003093"/><rect x="108" y="216" width="12.5" height="12.5" fill="#002e93"/><rect x="120" y="216" width="12.5" height="12.5" fill="#002c93"/><rect x="132" y="216" width="12.5" height="12.5" fill="#002993"/><rect x="144" y="216" width="12.5" height="12.5" fill="#002793"/><rect x="156" y="216" width="12.5" height="12.5" fill="#082493"/><rect x="168" y="216" width="12.5" height="12.5" fill="#102293"/><rect x="180" y="216" width="12.5" height="12.5" fill="#191f93"/><rect x="192" y="216" width="12.5" height="12.5" fill="#221d93"/><rect x="204" y="216" width="12.5" height="12.5" fill="#2a1a93"/><rect x="216" y="216" width="12.5" height="12.5" fill="#331893"/><rect x="228" y="216" width="12.5" height="12.5" fill="#3c1593"/><rect x="240" y="216" width="12.5" height="12.5" fill="#461293"/><rect x="252" y="216" width="12.5" height="12.5" fill="#4f1093"/><rect x="264" y="216" width="12.5" height="12.5" fill="#580d93"/><rect x="276" y="216" width="12.5" height="12.5" fill="#620a93"/><rect x="288" y="216" width="12.5" height="12.5" fill="#6b0793"/><rect x="300" y="216" width="12.5" height="12.5" fill="#750593"/><rect x="312" y="216" width="12.5" height="12.5" fill="#7f0293"/><rect x="324" y="216" width="12.5" height="12.5" fill="#890093"/><rect x="336" y="216" width="12.5" height="12.5" fill="#930093"/><rect x="348" y="216" width="12.5" height="12.5" fill="#93008a"/><rect x="360" y="216" width="12.5" height="12.5" fill="#930081"/><rect x="372" y="216" width="12.5" height="12.5" fill="#93007a"/><rect x="384" y="216" width="12.5" height="12.5" fill="#930073"/><rect x="396" y="216" width="12.5" height="12.5" fill="#93006c"/><rect x="408" y="216" width="12.5" height="12.5" fill="#930067"/><rect x="420" y="216" width="12.5" height="12.5" fill="#930062"/><rect x="432" y="216" width="12.5" height="12.5" fill="#93005d"/><rect x="444" y="216" width="12.5" height="12.5" fill="#930058"/><rect x="456" y="216" width="12.5" height="12.5" fill="#930054"/><rect x="468" y="216" width="12.5" height="12.5" fill="#930051"/><rect x="480" y="216" width="12.5" height="12.5" fill="#93004d"/><rect x="492" y="216" width="12.5" height="12.5" fill="#93004a"/><rect x="504" y="216" width="12.5" height="12.5" fill="#930047"/><rect x="516" y="216" width="12.5" height="12.5" fill="#930044"/><rect x="528" y="216" width="12.5" height="12.5" fill="#930041"/><rect x="540" y="216" width="12.5" height="12.5" fill="#93003f"/><rect x="552" y="216" width="12.5" height="12.5" fill="#93003d"/><rect x="564" y="216" width="12.5" height="12.5" fill="#93003a"/><rect x="576" y="216" width="12.5" height="12.5" fill="#930038"/><rect x="588" y="216" width="12.5" height="12.5" fill="#930036"/><rect x="600" y="216" width="12.5" height="12.5" fill="#930035"/><rect x="612" y="216" width="12.5" height="12.5" fill="#930033"/><rect x="0" y="228" width="12.5" height="12.5" fill="#003c93"/><rect x="12" y="228" width="12.5" height="12.5" fill="#003a93"/><rect x="24" y="228" width="12.5" height="12.5" fill="#003893"/><rect x="36" y="228" width="12.5" height="12.5" fill="#003593"/><rect x="48" y="228" width="12.5" height="12.5" fill="#003393"/><rect x="60" y="228" width="12.5" height="12.5" fill="#003193"/><rect x="72" y="228" width="12.5" height="12.5" fill="#002f93"/><rect x="84" y="228" width="12.5" height="12.5" fill="#002d93"/><rect x="96" y="228" width="12.5" height="12.5" fill="#002b93"/><rect x="108" y="228" width="12.5" height="12.5" fill="#002993"/><rect x="120" y="228" width="12.5" height="12.5" fill="#002693"/><rect x="132" y="228" width="12.5" height="12.5" fill="#002493"/><rect x="144" y="228" width="12.5" height="12.5" fill="#002293"/><rect x="156" y="228" width="12.5" height="12.5" fill="#051f93"/><rect x="168" y="228" width="12.5" height="12.5" fill="#0d1d93"/><rect x="180" y="228" width="12.5" height="12.5" fill="#151b93"/><rect x="192" y="228" width="12.5" height="12.5" fill="#1e1893"/><rect x="204" y="228" width="12.5" height="12.5" fill="#261693"/><rect x="216" y="228" width="12.5" height="12.5" fill="#2e1393"/><rect x="228" y="228" width="12.5" height="12.5" fill="#371193"/><rect x="240" y="228" width="12.5" height="12.5" fill="#3f0e93"/><rect x="252" y="228" width="12.5" height="12.5" fill="#480c93"/><rect x="264" y="228" width="12.5" height="12.5" fill="#510993"/><rect x="276" y="228" width="12.5" height="12.5" fill="#5a0793"/><rect x="288" y="228" width="12.5" height="12.5" fill="#630493"/><rect x="300" y="228" width="12.5" height="12.5" fill="#6c0193"/><rect x="312" y="228" width="12.5" height="12.5" fill="#750093"/><rect x="324" y="228" width="12.5" height="12.5" fill="#7f0093"/><rect x="336" y="228" width="12.5" height="12.5" fill="#880093"/><rect x="348" y="228" width="12.5" height="12.5" fill="#920093"/><rect x="360" y="228" width="12.5" height="12.5" fill="#93008c"/><rect x="372" y="228" width="12.5" height="12.5" fill="#930084"/><rect x="384" y="228" width="12.5" height="12.5" fill="#93007c"/><rect x="396" y="228" width="12.5" height="12.5" fill="#930075"/><rect x="408" y="228" width="12.5" height="12.5" fill="#93006f"/><rect x="420" y="228" width="12.5" height="12.5" fill="#930069"/><rect x="432" y="228" width="12.5" height="12.5" fill="#930064"/><rect x="444" y="228" width="12.5" height="12.5" fill="#930060"/><rect x="456" y="228" width="12.5" height="12.5" fill="#93005b"/><rect x="468" y="228" width="12.5" height="12.5" fill="#930057"/><rect x="480" y="228" width="12.5" height="12.5" fill="#930054"/><rect x="492" y="228" width="12.5" height="12.5" fill="#930050"/><rect x="504" y="228" width="12.5" height="12.5" fill="#93004d"/><rect x="516" y="228" width="12.5" height="12.5" fill="#93004a"/><rect x="528" y="228" width="12.5" height="12.5" fill="#930047"/><rect x="540" y="228" width="12.5" height="12.5" fill="#930044"/><rect x="552" y="228" width="12.5" height="12.5" fill="#930042"/><rect x="564" y="228" width="12.5" height="12.5" fill="#93003f"/><rect x="576" y="228" width="12.5" height="12.5" fill="#93003d"/><rect x="588" y="228" width="12.5" height="12.5" fill="#93003b"/><rect x="600" y="228" width="12.5" height="12.5" fill="#930039"/><rect x="612" y="228" width="12.5" height="12.5" fill="#930037"/><rect x="0" y="240" width="12.5" height="12.5" fill="#003693"/><rect x="12" y="240" width="12.5" height="12.5" fill="#003493"/><rect x="24" y="240" width="12.5" height="12.5" fill="#003293"/><rect x="36" y="240" width="12.5" height="12.5" fill="#003093"/><rect x="48" y="240" width="12.5" height="12.5" fill="#002e93"/><rect x="60" y="240" width="12.5" height="12.5" fill="#002c93"/><rect x="72" y="240" width="12.5" height="12.5" fill="#002a93"/><rect x="84" y="240" width="12.5" height="12.5" fill="#002893"/><rect x="96" y="240" width="12.5" height="12.5" fill="#002693"/><rect x="108" y="240" width="12.5" height="12.5" fill="#002493"/><rect x="120" y="240" width="12.5" height="12.5" fill="#002293"/><rect x="132" y="240" width="12.5" height="12.5" fill="#001f93"/><rect x="144" y="240" width="12.5" height="12.5" fill="#001d93"/><rect x="156" y="240" width="12.5" height="12.5" fill="#031b93"/><rect x="168" y="240" width="12.5" height="12.5" fill="#0b1993"/><rect x="180" y="240" width="12.5" height="12.5" fill="#121693"/><rect x="192" y="240" width="12.5" height="12.5" fill="#1a1493"/><rect x="204" y="240" width="12.5" height="12.5" fill="#221293"/><rect x="216" y="240" width="12.5" height="12.5" fill="#2a0f93"/><rect x="228" y="240" width="12.5" height="12.5" fill="#320d93"/><rect x="240" y="240" width="12.5" height="12.5" fill="#3a0b93"/><rect x="252" y="240" width="12.5" height="12.5" fill="#420893"/><rect x="264" y="240" width="12.5" height="12.5" fill="#4a0693"/><rect x="276" y="240" width="12.5" height="12.5" fill="#530393"/><rect x="288" y="240" width="12.5" height="12.5" fill="#5b0193"/><rect x="300" y="240" width="12.5" height="12.5" fill="#640093"/><rect x="312" y="240" width="12.5" height="12.5" fill="#6c0093"/><rect x="324" y="240" width="12.5" height="12.5" fill="#750093"/><rect x="336" y="240" width="12.5" height="12.5" fill="#7e0093"/><rect x="348" y="240" width="12.5" height="12.5" fill="#870093"/><rect x="360" y="240" width="12.5" height="12.5" fill="#900093"/><rect x="372" y="240" width="12.5" height="12.5" fill="#93008e"/><rect x="384" y="240" width="12.5" height="12.5" fill="#930086"/><rect x="396" y="240" width="12.5" height="12.5" fill="#93007e"/><rect x="408" y="240" width="12.5" height="12.5" fill="#930078"/><rect x="420" y="240" width="12.5" height="12.5" fill="#930072"/><rect x="432" y="240" width="12.5" height="12.5" fill="#93006c"/><rect x="444" y="240" width="12.5" height="12.5" fill="#930067"/><rect x="456" y="240" width="12.5" height="12.5" fill="#930062"/><rect x="468" y="240" width="12.5" height="12.5" fill="#93005e"/><rect x="480" y="240" width="12.5" height="12.5" fill="#93005a"/><rect x="492" y="240" width="12.5" height="12.5" fill="#930056"/><rect x="504" y="240" width="12.5" height="12.5" fill="#930053"/><rect x="516" y="240" width="12.5" height="12.5" fill="#930050"/><rect x="528" y="240" width="12.5" height="12.5" fill="#93004c"/><rect x="540" y="240" width="12.5" height="12.5" fill="#93004a"/><rect x="552" y="240" width="12.5" height="12.5" fill="#930047"/><rect x="564" y="240" width="12.5" height="12.5" fill="#930044"/><rect x="576" y="240" width="12.5" height="12.5" fill="#930042"/><rect x="588" y="240" width="12.5" height="12.5" fill="#930040"/><rect x="600" y="240" width="12.5" height="12.5" fill="#93003e"/><rect x="612" y="240" width="12.5" height="12.5" fill="#93003c"/><rect x="0" y="252" width="12.5" height="12.5" fill="#003193"/><rect x="12" y="252" width="12.5" height="12.5" fill="#002f93"/><rect x="24" y="252" width="12.5" height="12.5" fill="#002d93"/><rect x="36" y="252" width="12.5" height="12.5" fill="#002b93"/><rect x="48" y="252" width="12.5" height="12.5" fill="#002993"/><rect x="60" y="252" width="12.5" height="12.5" fill="#002793"/><rect x="72" y="252" width="12.5" height="12.5" fill="#002593"/><rect x="84" y="252" width="12.5" height="12.5" fill="#002393"/><rect x="96" y="252" width="12.5" height="12.5" fill="#002193"/><rect x="108" y="252" width="12.5" height="12.5" fill="#001f93"/><rect x="120" y="252" width="12.5" height="12.5" fill="#001d93"/><rect x="132" y="252" width="12.5" height="12.5" fill="#001b93"/><rect x="144" y="252" width="12.5" height="12.5" fill="#001993"/><rect x="156" y="252" width="12.5" height="12.5" fill="#011793"/><rect x="168" y="252" width="12.5" height="12.5" fill="#091593"/><rect x="180" y="252" width="12.5" height="12.5" fill="#101393"/><rect x="192" y="252" width="12.5" height="12.5" fill="#171093"/><rect x="204" y="252" width="12.5" height="12.5" fill="#1e0e93"/><rect x="216" y="252" width="12.5" height="12.5" fill="#260c93"/><rect x="228" y="252" width="12.5" height="12.5" fill="#2d0a93"/><rect x="240" y="252" width="12.5" height="12.5" fill="#350793"/><rect x="252" y="252" width="12.5" height="12.5" fill="#3d0593"/><rect x="264" y="252" width="12.5" height="12.5" fill="#450393"/><rect x="276" y="252" width="12.5" height="12.5" fill="#4c0093"/><rect x="288" y="252" width="12.5" height="12.5" fill="#540093"/><rect x="300" y="252" width="12.5" height="12.5" fill="#5c0093"/><rect x="312" y="252" width="12.5" height="12.5" fill="#650093"/><rect x="324" y="252" width="12.5" height="12.5" fill="#6d0093"/><rect x="336" y="252" width="12.5" height="12.5" fill="#750093"/><rect x="348" y="252" width="12.5" height="12.5" fill="#7e0093"/><rect x="360" y="252" width="12.5" height="12.5" fill="#860093"/><rect x="372" y="252" width="12.5" height="12.5" fill="#8f0093"/><rect x="384" y="252" width="12.5" height="12.5" fill="#93008f"/><rect x="396" y="252" width="12.5" height="12.5" fill="#930088"/><rect x="408" y="252" width="12.5" height="12.5" fill="#930080"/><rect x="420" y="252" width="12.5" height="12.5" fill="#93007a"/><rect x="432" y="252" width="12.5" height="12.5" fill="#930074"/><rect x="444" y="252" width="12.5" height="12.5" fill="#93006f"/><rect x="456" y="252" width="12.5" height="12.5" fill="#93006a"/><rect x="468" y="252" width="12.5" height="12.5" fill="#930065"/><rect x="480" y="252" width="12.5" height="12.5" fill="#930061"/><rect x="492" y="252" width="12.5" height="12.5" fill="#93005d"/><rect x="504" y="252" width="12.5" height="12.5" fill="#930059"/><rect x="516" y="252" width="12.5" height="12.5" fill="#930055"/><rect x="528" y="252" width="12.5" height="12.5" fill="#930052"/><rect x="540" y="252" width="12.5" height="12.5" fill="#93004f"/><rect x="552" y="252" width="12.5" height="12.5" fill="#93004c"/><rect x="564" y="252" width="12.5" height="12.5" fill="#930049"/><rect x="576" y="252" width="12.5" height="12.5" fill="#930047"/><rect x="588" y="252" width="12.5" height="12.5" fill="#930045"/><rect x="600" y="252" width="12.5" height="12.5" fill="#930042"/><rect x="612" y="252" width="12.5" height="12.5" fill="#930040"/><rect x="0" y="264" width="12.5" height="12.5" fill="#002c93"/><rect x="12" y="264" width="12.5" height="12.5" fill="#002b93"/><rect x="24" y="264" width="12.5" height="12.5" fill="#002993"/><rect x="36" y="264" width="12.5" height="12.5" fill="#002793"/><rect x="48" y="264" width="12.5" height="12.5" fill="#002593"/><rect x="60" y="264" width="12.5" height="12.5" fill="#002393"/><rect x="72" y="264" width="12.5" height="12.5" fill="#002193"/><rect x="84" y="264" width="12.5" height="12.5" fill="#001f93"/><rect x="96" y="264" width="12.5" height="12.5" fill="#001d93"/><rect x="108" y="264" width="12.5" height="12.5" fill="#001b93"/><rect x="120" y="264" width="12.5" height="12.5" fill="#001993"/><rect x="132" y="264" width="12.5" height="12.5" fill="#001793"/><rect x="144" y="264" width="12.5" height="12.5" fill="#001593"/><rect x="156" y="264" width="12.5" height="12.5" fill="#001393"/><rect x="168" y="264" width="12.5" height="12.5" fill="#071193"/><rect x="180" y="264" width="12.5" height="12.5" fill="#0d0f93"/><rect x="192" y="264" width="12.5" height="12.5" fill="#140d93"/><rect x="204" y="264" width="12.5" height="12.5" fill="#1b0b93"/><rect x="216" y="264" width="12.5" height="12.5" fill="#220993"/><rect x="228" y="264" width="12.5" height="12.5" fill="#2a0793"/><rect x="240" y="264" width="12.5" height="12.5" fill="#310493"/><rect x="252" y="264" width="12.5" height="12.5" fill="#380293"/><rect x="264" y="264" width="12.5" height="12.5" fill="#3f0093"/><rect x="276" y="264" width="12.5" height="12.5" fill="#470093"/><rect x="288" y="264" width="12.5" height="12.5" fill="#4e0093"/><rect x="300" y="264" width="12.5" height="12.5" fill="#560093"/><rect x="312" y="264" width="12.5" height="12.5" fill="#5e0093"/><rect x="324" y="264" width="12.5" height="12.5" fill="#650093"/><rect x="336" y="264" width="12.5" height="12.5" fill="#6d0093"/><rect x="348" y="264" width="12.5" height="12.5" fill="#750093"/><rect x="360" y="264" width="12.5" height="12.5" fill="#7d0093"/><rect x="372" y="264" width="12.5" height="12.5" fill="#850093"/><rect x="384" y="264" width="12.5" height="12.5" fill="#8d0093"/><rect x="396" y="264" width="12.5" height="12.5" fill="#930091"/><rect x="408" y="264" width="12.5" height="12.5" fill="#930089"/><rect x="420" y="264" width="12.5" height="12.5" fill="#930082"/><rect x="432" y="264" width="12.5" height="12.5" fill="#93007c"/><rect x="444" y="264" width="12.5" height="12.5" fill="#930076"/><rect x="456" y="264" width="12.5" height="12.5" fill="#930071"/><rect x="468" y="264" width="12.5" height="12.5" fill="#93006c"/><rect x="480" y="264" width="12.5" height="12.5" fill="#930067"/><rect x="492" y="264" width="12.5" height="12.5" fill="#930063"/><rect x="504" y="264" width="12.5" height="12.5" fill="#93005f"/><rect x="516" y="264" width="12.5" height="12.5" fill="#93005b"/><rect x="528" y="264" width="12.5" height="12.5" fill="#930058"/><rect x="540" y="264" width="12.5" height="12.5" fill="#930055"/><rect x="552" y="264" width="12.5" height="12.5" fill="#930052"/><rect x="564" y="264" width="12.5" height="12.5" fill="#93004f"/><rect x="576" y="264" width="12.5" height="12.5" fill="#93004c"/><rect x="588" y="264" width="12.5" height="12.5" fill="#930049"/><rect x="600" y="264" width="12.5" height="12.5" fill="#930047"/><rect x="612" y="264" width="12.5" height="12.5" fill="#930045"/><rect x="0" y="276" width="12.5" height="12.5" fill="#002893"/><rect x="12" y="276" width="12.5" height="12.5" fill="#002793"/><rect x="24" y="276" width="12.5" height="12.5" fill="#002593"/><rect x="36" y="276" width="12.5" height="12.5" fill="#002393"/><rect x="48" y="276" width="12.5" height="12.5" fill="#002193"/><rect x="60" y="276" width="12.5" height="12.5" fill="#001f93"/><rect x="72" y="276" width="12.5" height="12.5" fill="#001d93"/><rect x="84" y="276" width="12.5" height="12.5" fill="#001c93"/><rect x="96" y="276" width="12.5" height="12.5" fill="#001a93"/><rect x="108" y="276" width="12.5" height="12.5" fill="#001893"/><rect x="120" y="276" width="12.5" height="12.5" fill="#001693"/><rect x="132" y="276" width="12.5" height="12.5" fill="#001493"/><rect x="144" y="276" width="12.5" height="12.5" fill="#001293"/><rect x="156" y="276" width="12.5" height="12.5" fill="#001093"/><rect x="168" y="276" width="12.5" height="12.5" fill="#050e93"/><rect x="180" y="276" width="12.5" height="12.5" fill="#0b0c93"/><rect x="192" y="276" width="12.5" height="12.5" fill="#120a93"/><rect x="204" y="276" width="12.5" height="12.5" fill="#180893"/><rect x="216" y="276" width="12.5" height="12.5" fill="#1f0693"/><rect x="228" y="276" width="12.5" height="12.5" fill="#260493"/><rect x="240" y="276" width="12.5" height="12.5" fill="#2d0293"/><rect x="252" y="276" width="12.5" height="12.5" fill="#340093"/><rect x="264" y="276" width="12.5" height="12.5" fill="#3b0093"/><rect x="276" y="276" width="12.5" height="12.5" fill="#420093"/><rect x="288" y="276" width="12.5" height="12.5" fill="#490093"/><rect x="300" y="276" width="12.5" height="12.5" fill="#500093"/><rect x="312" y="276" width="12.5" height="12.5" fill="#570093"/><rect x="324" y="276" width="12.5" height="12.5" fill="#5f0093"/><rect x="336" y="276" width="12.5" height="12.5" fill="#660093"/><rect x="348" y="276" width="12.5" height="12.5" fill="#6e0093"/><rect x="360" y="276" width="12.5" height="12.5" fill="#750093"/><rect x="372" y="276" width="12.5" height="12.5" fill="#7d0093"/><rect x="384" y="276" width="12.5" height="12.5" fill="#850093"/><rect x="396" y="276" width="12.5" height="12.5" fill="#8c0093"/><rect x="408" y="276" width="12.5" height="12.5" fill="#930093"/><rect x="420" y="276" width="12.5" height="12.5" fill="#93008b"/><rect x="432" y="276" width="12.5" height="12.5" fill="#930084"/><rect x="444" y="276" width="12.5" height="12.5" fill="#93007e"/><rect x="456" y="276" width="12.5" height="12.5" fill="#930078"/><rect x="468" y="276" width="12.5" height="12.5" fill="#930073"/><rect x="480" y="276" width="12.5" height="12.5" fill="#93006e"/><rect x="492" y="276" width="12.5" height="12.5" fill="#93006a"/><rect x="504" y="276" width="12.5" height="12.5" fill="#930065"/><rect x="516" y="276" width="12.5" height="12.5" fill="#930061"/><rect x="528" y="276" width="12.5" height="12.5" fill="#93005e"/><rect x="540" y="276" width="12.5" height="12.5" fill="#93005a"/><rect x="552" y="276" width="12.5" height="12.5" fill="#930057"/><rect x="564" y="276" width="12.5" height="12.5" fill="#930054"/><rect x="576" y="276" width="12.5" height="12.5" fill="#930051"/><rect x="588" y="276" width="12.5" height="12.5" fill="#93004e"/><rect x="600" y="276" width="12.5" height="12.5" fill="#93004c"/><rect x="612" y="276" width="12.5" height="12.5" fill="#930049"/><rect x="0" y="288" width="12.5" height="12.5" fill="#002493"/><rect x="12" y="288" width="12.5" height="12.5" fill="#002393"/><rect x="24" y="288" width="12.5" height="12.5" fill="#002193"/><rect x="36" y="288" width="12.5" height="12.5" fill="#001f93"/><rect x="48" y="288" width="12.5" height="12.5" fill="#001e93"/><rect x="60" y="288" width="12.5" height="12.5" fill="#001c93"/><rect x="72" y="288" width="12.5" height="12.5" fill="#001a93"/><rect x="84" y="288" width="12.5" height="12.5" fill="#001893"/><rect x="96" y="288" width="12.5" height="12.5" fill="#001693"/><rect x="108" y="288" width="12.5" height="12.5" fill="#001593"/><rect x="120" y="288" width="12.5" height="12.5" fill="#001393"/><rect x="132" y="288" width="12.5" height="12.5" fill="#001193"/><rect x="144" y="288" width="12.5" height="12.5" fill="#000f93"/><rect x="156" y="288" width="12.5" height="12.5" fill="#000d93"/><rect x="168" y="288" width="12.5" height="12.5" fill="#030b93"/><rect x="180" y="288" width="12.5" height="12.5" fill="#090993"/><rect x="192" y="288" width="12.5" height="12.5" fill="#0f0793"/><rect x="204" y="288" width="12.5" height="12.5" fill="#160593"/><rect x="216" y="288" width="12.5" height="12.5" fill="#1c0393"/><rect x="228" y="288" width="12.5" height="12.5" fill="#230193"/><rect x="240" y="288" width="12.5" height="12.5" fill="#290093"/><rect x="252" y="288" width="12.5" height="12.5" fill="#300093"/><rect x="264" y="288" width="12.5" height="12.5" fill="#360093"/><rect x="276" y="288" width="12.5" height="12.5" fill="#3d0093"/><rect x="288" y="288" width="12.5" height="12.5" fill="#440093"/><rect x="300" y="288" width="12.5" height="12.5" fill="#4b0093"/><rect x="312" y="288" width="12.5" height="12.5" fill="#520093"/><rect x="324" y="288" width="12.5" height="12.5" fill="#590093"/><rect x="336" y="288" width="12.5" height="12.5" fill="#600093"/><rect x="348" y="288" width="12.5" height="12.5" fill="#670093"/><rect x="360" y="288" width="12.5" height="12.5" fill="#6e0093"/><rect x="372" y="288" width="12.5" height="12.5" fill="#750093"/><rect x="384" y="288" width="12.5" height="12.5" fill="#7c0093"/><rect x="396" y="288" width="12.5" height="12.5" fill="#840093"/><rect x="408" y="288" width="12.5" height="12.5" fill="#8b0093"/><rect x="420" y="288" width="12.5" height="12.5" fill="#930093"/><rect x="432" y="288" width="12.5" height="12.5" fill="#93008d"/><rect x="444" y="288" width="12.5" height="12.5" fill="#930086"/><rect x="456" y="288" width="12.5" height="12.5" fill="#930080"/><rect x="468" y="288" width="12.5" height="12.5" fill="#93007a"/><rect x="480" y="288" width="12.5" height="12.5" fill="#930075"/><rect x="492" y="288" width="12.5" height="12.5" fill="#930070"/><rect x="504" y="288" width="12.5" height="12.5" fill="#93006c"/><rect x="516" y="288" width="12.5" height="12.5" fill="#930067"/><rect x="528" y="288" width="12.5" height="12.5" fill="#930064"/><rect x="540" y="288" width="12.5" height="12.5" fill="#930060"/><rect x="552" y="288" width="12.5" height="12.5" fill="#93005c"/><rect x="564" y="288" width="12.5" height="12.5" fill="#930059"/><rect x="576" y="288" width="12.5" height="12.5" fill="#930056"/><rect x="588" y="288" width="12.5" height="12.5" fill="#930053"/><rect x="600" y="288" width="12.5" height="12.5" fill="#930051"/><rect x="612" y="288" width="12.5" height="12.5" fill="#93004e"/><rect x="0" y="300" width="12.5" height="12.5" fill="#002193"/><rect x="12" y="300" width="12.5" height="12.5" fill="#001f93"/><rect x="24" y="300" width="12.5" height="12.5" fill="#001e93"/><rect x="36" y="300" width="12.5" height="12.5" fill="#001c93"/><rect x="48" y="300" width="12.5" height="12.5" fill="#001a93"/><rect x="60" y="300" width="12.5" height="12.5" fill="#001993"/><rect x="72" y="300" width="12.5" height="12.5" fill="#001793"/><rect x="84" y="300" width="12.5" height="12.5" fill="#001593"/><rect x="96" y="300" width="12.5" height="12.5" fill="#001393"/><rect x="108" y="300" width="12.5" height="12.5" fill="#001293"/><rect x="120" y="300" width="12.5" height="12.5" fill="#001093"/><rect x="132" y="300" width="12.5" height="12.5" fill="#000e93"/><rect x="144" y="300" width="12.5" height="12.5" fill="#000c93"/><rect x="156" y="300" width="12.5" height="12.5" fill="#000a93"/><rect x="168" y="300" width="12.5" height="12.5" fill="#010993"/><rect x="180" y="300" width="12.5" height="12.5" fill="#070793"/><rect x="192" y="300" width="12.5" height="12.5" fill="#0d0593"/><rect x="204" y="300" width="12.5" height="12.5" fill="#130393"/><rect x="216" y="300" width="12.5" height="12.5" fill="#1a0193"/><rect x="228" y="300" width="12.5" height="12.5" fill="#200093"/><rect x="240" y="300" width="12.5" height="12.5" fill="#260093"/><rect x="252" y="300" width="12.5" height="12.5" fill="#2c0093"/><rect x="264" y="300" width="12.5" height="12.5" fill="#330093"/><rect x="276" y="300" width="12.5" height="12.5" fill="#390093"/><rect x="288" y="300" width="12.5" height="12.5" fill="#3f0093"/><rect x="300" y="300" width="12.5" height="12.5" fill="#460093"/><rect x="312" y="300" width="12.5" height="12.5" fill="#4c0093"/><rect x="324" y="300" width="12.5" height="12.5" fill="#530093"/><rect x="336" y="300" width="12.5" height="12.5" fill="#5a0093"/><rect x="348" y="300" width="12.5" height="12.5" fill="#600093"/><rect x="360" y="300" width="12.5" height="12.5" fill="#670093"/><rect x="372" y="300" width="12.5" height="12.5" fill="#6e0093"/><rect x="384" y="300" width="12.5" height="12.5" fill="#750093"/><rect x="396" y="300" width="12.5" height="12.5" fill="#7c0093"/><rect x="408" y="300" width="12.5" height="12.5" fill="#830093"/><rect x="420" y="300" width="12.5" height="12.5" fill="#8a0093"/><rect x="432" y="300" width="12.5" height="12.5" fill="#920093"/><rect x="444" y="300" width="12.5" height="12.5" fill="#93008e"/><rect x="456" y="300" width="12.5" height="12.5" fill="#930088"/><rect x="468" y="300" width="12.5" height="12.5" fill="#930082"/><rect x="480" y="300" width="12.5" height="12.5" fill="#93007c"/><rect x="492" y="300" width="12.5" height="12.5" fill="#930077"/><rect x="504" y="300" width="12.5" height="12.5" fill="#930072"/><rect x="516" y="300" width="12.5" height="12.5" fill="#93006e"/><rect x="528" y="300" width="12.5" height="12.5" fill="#93006a"/><rect x="540" y="300" width="12.5" height="12.5" fill="#930066"/><rect x="552" y="300" width="12.5" height="12.5" fill="#930062"/><rect x="564" y="300" width="12.5" height="12.5" fill="#93005f"/><rect x="576" y="300" width="12.5" height="12.5" fill="#93005b"/><rect x="588" y="300" width="12.5" height="12.5" fill="#930058"/><rect x="600" y="300" width="12.5" height="12.5" fill="#930055"/><rect x="612" y="300" width="12.5" height="12.5" fill="#930053"/><rect x="0" y="312" width="12.5" height="12.5" fill="#001e93"/><rect x="12" y="312" width="12.5" height="12.5" fill="#001c93"/><rect x="24" y="312" width="12.5" height="12.5" fill="#001b93"/><rect x="36" y="312" width="12.5" height="12.5" fill="#001993"/><rect x="48" y="312" width="12.5" height="12.5" fill="#001793"/><rect x="60" y="312" width="12.5" height="12.5" fill="#001693"/><rect x="72" y="312" width="12.5" height="12.5" fill="#001493"/><rect x="84" y="312" width="12.5" height="12.5" fill="#001293"/><rect x="96" y="312" width="12.5" height="12.5" fill="#001193"/><rect x="108" y="312" width="12.5" height="12.5" fill="#000f93"/><rect x="120" y="312" width="12.5" height="12.5" fill="#000d93"/><rect x="132" y="312" width="12.5" height="12.5" fill="#000b93"/><rect x="144" y="312" width="12.5" height="12.5" fill="#000a93"/><rect x="156" y="312" width="12.5" height="12.5" fill="#000893"/><rect x="168" y="312" width="12.5" height="12.5" fill="#000693"/><rect x="180" y="312" width="12.5" height="12.5" fill="#060493"/><rect x="192" y="312" width="12.5" height="12.5" fill="#0b0393"/><rect x="204" y="312" width="12.5" height="12.5" fill="#110193"/><rect x="216" y="312" width="12.5" height="12.5" fill="#170093"/><rect x="228" y="312" width="12.5" height="12.5" fill="#1d0093"/><rect x="240" y="312" width="12.5" height="12.5" fill="#230093"/><rect x="252" y="312" width="12.5" height="12.5" fill="#290093"/><rect x="264" y="312" width="12.5" height="12.5" fill="#2f0093"/><rect x="276" y="312" width="12.5" height="12.5" fill="#350093"/><rect x="288" y="312" width="12.5" height="12.5" fill="#3b0093"/><rect x="300" y="312" width="12.5" height="12.5" fill="#410093"/><rect x="312" y="312" width="12.5" height="12.5" fill="#480093"/><rect x="324" y="312" width="12.5" height="12.5" fill="#4e0093"/><rect x="336" y="312" width="12.5" height="12.5" fill="#540093"/><rect x="348" y="312" width="12.5" height="12.5" fill="#5b0093"/><rect x="360" y="312" width="12.5" height="12.5" fill="#610093"/><rect x="372" y="312" width="12.5" height="12.5" fill="#680093"/><rect x="384" y="312" width="12.5" height="12.5" fill="#6e0093"/><rect x="396" y="312" width="12.5" height="12.5" fill="#750093"/><rect x="408" y="312" width="12.5" height="12.5" fill="#7c0093"/><rect x="420" y="312" width="12.5" height="12.5" fill="#830093"/><rect x="432" y="312" width="12.5" height="12.5" fill="#890093"/><rect x="444" y="312" width="12.5" height="12.5" fill="#900093"/><rect x="456" y="312" width="12.5" height="12.5" fill="#930090"/><rect x="468" y="312" width="12.5" height="12.5" fill="#930089"/><rect x="480" y="312" width="12.5" height="12.5" fill="#930083"/><rect x="492" y="312" width="12.5" height="12.5" fill="#93007e"/><rect x="504" y="312" width="12.5" height="12.5" fill="#930079"/><rect x="516" y="312" width="12.5" height="12.5" fill="#930074"/><rect x="528" y="312" width="12.5" height="12.5" fill="#930070"/><rect x="540" y="312" width="12.5" height="12.5" fill="#93006c"/><rect x="552" y="312" width="12.5" height="12.5" fill="#930068"/><rect x="564" y="312" width="12.5" height="12.5" fill="#930064"/><rect x="576" y="312" width="12.5" height="12.5" fill="#930061"/><rect x="588" y="312" width="12.5" height="12.5" fill="#93005d"/><rect x="600" y="312" width="12.5" height="12.5" fill="#93005a"/><rect x="612" y="312" width="12.5" height="12.5" fill="#930057"/><rect x="0" y="324" width="12.5" height="12.5" fill="#001b93"/><rect x="12" y="324" width="12.5" height="12.5" fill="#001993"/><rect x="24" y="324" width="12.5" height="12.5" fill="#001893"/><rect x="36" y="324" width="12.5" height="12.5" fill="#001693"/><rect x="48" y="324" width="12.5" height="12.5" fill="#001493"/><rect x="60" y="324" width="12.5" height="12.5" fill="#001393"/><rect x="72" y="324" width="12.5" height="12.5" fill="#001193"/><rect x="84" y="324" width="12.5" height="12.5" fill="#001093"/><rect x="96" y="324" width="12.5" height="12.5" fill="#000e93"/><rect x="108" y="324" width="12.5" height="12.5" fill="#000c93"/><rect x="120" y="324" width="12.5" height="12.5" fill="#000b93"/><rect x="132" y="324" width="12.5" height="12.5" fill="#000993"/><rect x="144" y="324" width="12.5" height="12.5" fill="#000793"/><rect x="156" y="324" width="12.5" height="12.5" fill="#000693"/><rect x="168" y="324" width="12.5" height="12.5" fill="#000493"/><rect x="180" y="324" width="12.5" height="12.5" fill="#040293"/><rect x="192" y="324" width="12.5" height="12.5" fill="#0a0093"/><rect x="204" y="324" width="12.5" height="12.5" fill="#0f0093"/><rect x="216" y="324" width="12.5" height="12.5" fill="#150093"/><rect x="228" y="324" width="12.5" height="12.5" fill="#1a0093"/><rect x="240" y="324" width="12.5" height="12.5" fill="#200093"/><rect x="252" y="324" width="12.5" height="12.5" fill="#260093"/><rect x="264" y="324" width="12.5" height="12.5" fill="#2c0093"/><rect x="276" y="324" width="12.5" height="12.5" fill="#320093"/><rect x="288" y="324" width="12.5" height="12.5" fill="#370093"/><rect x="300" y="324" width="12.5" height="12.5" fill="#3d0093"/><rect x="312" y="324" width="12.5" height="12.5" fill="#430093"/><rect x="324" y="324" width="12.5" height="12.5" fill="#490093"/><rect x="336" y="324" width="12.5" height="12.5" fill="#4f0093"/><rect x="348" y="324" width="12.5" height="12.5" fill="#560093"/><rect x="360" y="324" width="12.5" height="12.5" fill="#5c0093"/><rect x="372" y="324" width="12.5" height="12.5" fill="#620093"/><rect x="384" y="324" width="12.5" height="12.5" fill="#680093"/><rect x="396" y="324" width="12.5" height="12.5" fill="#6f0093"/><rect x="408" y="324" width="12.5" height="12.5" fill="#750093"/><rect x="420" y="324" width="12.5" height="12.5" fill="#7c0093"/><rect x="432" y="324" width="12.5" height="12.5" fill="#820093"/><rect x="444" y="324" width="12.5" height="12.5" fill="#890093"/><rect x="456" y="324" width="12.5" height="12.5" fill="#8f0093"/><rect x="468" y="324" width="12.5" height="12.5" fill="#930091"/><rect x="480" y="324" width="12.5" height="12.5" fill="#93008b"/><rect x="492" y="324" width="12.5" height="12.5" fill="#930085"/><rect x="504" y="324" width="12.5" height="12.5" fill="#93007f"/><rect x="516" y="324" width="12.5" height="12.5" fill="#93007a"/><rect x="528" y="324" width="12.5" height="12.5" fill="#930076"/><rect x="540" y="324" width="12.5" height="12.5" fill="#930071"/><rect x="552" y="324" width="12.5" height="12.5" fill="#93006d"/><rect x="564" y="324" width="12.5" height="12.5" fill="#93006a"/><rect x="576" y="324" width="12.5" height="12.5" fill="#930066"/><rect x="588" y="324" width="12.5" height="12.5" fill="#930063"/><rect x="600" y="324" width="12.5" height="12.5" fill="#93005f"/><rect x="612" y="324" width="12.5" height="12.5" fill="#93005c"/><rect x="0" y="336" width="12.5" height="12.5" fill="#001893"/><rect x="12" y="336" width="12.5" height="12.5" fill="#001693"/><rect x="24" y="336" width="12.5" height="12.5" fill="#001593"/><rect x="36" y="336" width="12.5" height="12.5" fill="#001393"/><rect x="48" y="336" width="12.5" height="12.5" fill="#001293"/><rect x="60" y="336" width="12.5" height="12.5" fill="#001093"/><rect x="72" y="336" width="12.5" height="12.5" fill="#000f93"/><rect x="84" y="336" width="12.5" height="12.5" fill="#000d93"/><rect x="96" y="336" width="12.5" height="12.5" fill="#000c93"/><rect x="108" y="336" width="12.5" height="12.5" fill="#000a93"/><rect x="120" y="336" width="12.5" height="12.5" fill="#000893"/><rect x="132" y="336" width="12.5" height="12.5" fill="#000793"/><rect x="144" y="336" width="12.5" height="12.5" fill="#000593"/><rect x="156" y="336" width="12.5" height="12.5" fill="#000493"/><rect x="168" y="336" width="12.5" height="12.5" fill="#000293"/><rect x="180" y="336" width="12.5" height="12.5" fill="#030093"/><rect x="192" y="336" width="12.5" height="12.5" fill="#080093"/><rect x="204" y="336" width="12.5" height="12.5" fill="#0d0093"/><rect x="216" y="336" width="12.5" height="12.5" fill="#130093"/><rect x="228" y="336" width="12.5" height="12.5" fill="#180093"/><rect x="240" y="336" width="12.5" height="12.5" fill="#1e0093"/><rect x="252" y="336" width="12.5" height="12.5" fill="#230093"/><rect x="264" y="336" width="12.5" height="12.5" fill="#290093"/><rect x="276" y="336" width="12.5" height="12.5" fill="#2e0093"/><rect x="288" y="336" width="12.5" height="12.5" fill="#340093"/><rect x="300" y="336" width="12.5" height="12.5" fill="#3a0093"/><rect x="312" y="336" width="12.5" height="12.5" fill="#3f0093"/><rect x="324" y="336" width="12.5" height="12.5" fill="#450093"/><rect x="336" y="336" width="12.5" height="12.5" fill="#4b0093"/><rect x="348" y="336" width="12.5" height="12.5" fill="#510093"/><rect x="360" y="336" width="12.5" height="12.5" fill="#570093"/><rect x="372" y="336" width="12.5" height="12.5" fill="#5d0093"/><rect x="384" y="336" width="12.5" height="12.5" fill="#630093"/><rect x="396" y="336" width="12.5" height="12.5" fill="#690093"/><rect x="408" y="336" width="12.5" height="12.5" fill="#6f0093"/><rect x="420" y="336" width="12.5" height="12.5" fill="#750093"/><rect x="432" y="336" width="12.5" height="12.5" fill="#7b0093"/><rect x="444" y="336" width="12.5" height="12.5" fill="#820093"/><rect x="456" y="336" width="12.5" height="12.5" fill="#880093"/><rect x="468" y="336" width="12.5" height="12.5" fill="#8e0093"/><rect x="480" y="336" width="12.5" height="12.5" fill="#930092"/><rect x="492" y="336" width="12.5" height="12.5" fill="#93008c"/><rect x="504" y="336" width="12.5" height="12.5" fill="#930086"/><rect x="516" y="336" width="12.5" height="12.5" fill="#930081"/><rect x="528" y="336" width="12.5" height="12.5" fill="#93007c"/><rect x="540" y="336" width="12.5" height="12.5" fill="#930078"/><rect x="552" y="336" width="12.5" height="12.5" fill="#930073"/><rect x="564" y="336" width="12.5" height="12.5" fill="#93006f"/><rect x="576" y="336" width="12.5" height="12.5" fill="#93006b"/><rect x="588" y="336" width="12.5" height="12.5" fill="#930068"/><rect x="600" y="336" width="12.5" height="12.5" fill="#930064"/><rect x="612" y="336" width="12.5" height="12.5" fill="#930061"/><rect x="0" y="348" width="12.5" height="12.5" fill="#001593"/><rect x="12" y="348" width="12.5" height="12.5" fill="#001493"/><rect x="24" y="348" width="12.5" height="12.5" fill="#001293"/><rect x="36" y="348" width="12.5" height="12.5" fill="#001193"/><rect x="48" y="348" width="12.5" height="12.5" fill="#000f93"/><rect x="60" y="348" width="12.5" height="12.5" fill="#000e93"/><rect x="72" y="348" width="12.5" height="12.5" fill="#000c93"/><rect x="84" y="348" width="12.5" height="12.5" fill="#000b93"/><rect x="96" y="348" width="12.5" height="12.5" fill="#000993"/><rect x="108" y="348" width="12.5" height="12.5" fill="#000893"/><rect x="120" y="348" width="12.5" height="12.5" fill="#000693"/><rect x="132" y="348" width="12.5" height="12.5" fill="#000593"/><rect x="144" y="348" width="12.5" height="12.5" fill="#000393"/><rect x="156" y="348" width="12.5" height="12.5" fill="#000293"/><rect x="168" y="348" width="12.5" height="12.5" fill="#000093"/><rect x="180" y="348" width="12.5" height="12.5" fill="#010093"/><rect x="192" y="348" width="12.5" height="12.5" fill="#060093"/><rect x="204" y="348" width="12.5" height="12.5" fill="#0c0093"/><rect x="216" y="348" width="12.5" height="12.5" fill="#110093"/><rect x="228" y="348" width="12.5" height="12.5" fill="#160093"/><rect x="240" y="348" width="12.5" height="12.5" fill="#1b0093"/><rect x="252" y="348" width="12.5" height="12.5" fill="#210093"/><rect x="264" y="348" width="12.5" height="12.5" fill="#260093"/><rect x="276" y="348" width="12.5" height="12.5" fill="#2b0093"/><rect x="288" y="348" width="12.5" height="12.5" fill="#310093"/><rect x="300" y="348" width="12.5" height="12.5" fill="#360093"/><rect x="312" y="348" width="12.5" height="12.5" fill="#3c0093"/><rect x="324" y="348" width="12.5" height="12.5" fill="#410093"/><rect x="336" y="348" width="12.5" height="12.5" fill="#470093"/><rect x="348" y="348" width="12.5" height="12.5" fill="#4c0093"/><rect x="360" y="348" width="12.5" height="12.5" fill="#520093"/><rect x="372" y="348" width="12.5" height="12.5" fill="#580093"/><rect x="384" y="348" width="12.5" height="12.5" fill="#5e0093"/><rect x="396" y="348" width="12.5" height="12.5" fill="#630093"/><rect x="408" y="348" width="12.5" height="12.5" fill="#690093"/><rect x="420" y="348" width="12.5" height="12.5" fill="#6f0093"/><rect x="432" y="348" width="12.5" height="12.5" fill="#750093"/><rect x="444" y="348" width="12.5" height="12.5" fill="#7b0093"/><rect x="456" y="348" width="12.5" height="12.5" fill="#810093"/><rect x="468" y="348" width="12.5" height="12.5" fill="#870093"/><rect x="480" y="348" width="12.5" height="12.5" fill="#8d0093"/><rect x="492" y="348" width="12.5" height="12.5" fill="#930093"/><rect x="504" y="348" width="12.5" height="12.5" fill="#93008d"/><rect x="516" y="348" width="12.5" height="12.5" fill="#930088"/><rect x="528" y="348" width="12.5" height="12.5" fill="#930083"/><rect x="540" y="348" width="12.5" height="12.5" fill="#93007e"/><rect x="552" y="348" width="12.5" height="12.5" fill="#930079"/><rect x="564" y="348" width="12.5" height="12.5" fill="#930075"/><rect x="576" y="348" width="12.5" height="12.5" fill="#930071"/><rect x="588" y="348" width="12.5" height="12.5" fill="#93006d"/><rect x="600" y="348" width="12.5" height="12.5" fill="#93006a"/><rect x="612" y="348" width="12.5" height="12.5" fill="#930066"/><rect x="0" y="360" width="12.5" height="12.5" fill="#001393"/><rect x="12" y="360" width="12.5" height="12.5" fill="#001293"/><rect x="24" y="360" width="12.5" height="12.5" fill="#001093"/><rect x="36" y="360" width="12.5" height="12.5" fill="#000f93"/><rect x="48" y="360" width="12.5" height="12.5" fill="#000d93"/><rect x="60" y="360" width="12.5" height="12.5" fill="#000c93"/><rect x="72" y="360" width="12.5" height="12.5" fill="#000a93"/><rect x="84" y="360" width="12.5" height="12.5" fill="#000993"/><rect x="96" y="360" width="12.5" height="12.5" fill="#000793"/><rect x="108" y="360" width="12.5" height="12.5" fill="#000693"/><rect x="120" y="360" width="12.5" height="12.5" fill="#000493"/><rect x="132" y="360" width="12.5" height="12.5" fill="#000393"/><rect x="144" y="360" width="12.5" height="12.5" fill="#000193"/><rect x="156" y="360" width="12.5" height="12.5" fill="#000093"/><rect x="168" y="360" width="12.5" height="12.5" fill="#000093"/><rect x="180" y="360" width="12.5" height="12.5" fill="#000093"/><rect x="192" y="360" width="12.5" height="12.5" fill="#050093"/><rect x="204" y="360" width="12.5" height="12.5" fill="#0a0093"/><rect x="216" y="360" width="12.5" height="12.5" fill="#0f0093"/><rect x="228" y="360" width="12.5" height="12.5" fill="#140093"/><rect x="240" y="360" width="12.5" height="12.5" fill="#190093"/><rect x="252" y="360" width="12.5" height="12.5" fill="#1e0093"/><rect x="264" y="360" width="12.5" height="12.5" fill="#230093"/><rect x="276" y="360" width="12.5" height="12.5" fill="#280093"/><rect x="288" y="360" width="12.5" height="12.5" fill="#2e0093"/><rect x="300" y="360" width="12.5" height="12.5" fill="#330093"/><rect x="312" y="360" width="12.5" height="12.5" fill="#380093"/><rect x="324" y="360" width="12.5" height="12.5" fill="#3e0093"/><rect x="336" y="360" width="12.5" height="12.5" fill="#430093"/><rect x="348" y="360" width="12.5" height="12.5" fill="#480093"/><rect x="360" y="360" width="12.5" height="12.5" fill="#4e0093"/><rect x="372" y="360" width="12.5" height="12.5" fill="#530093"/><rect x="384" y="360" width="12.5" height="12.5" fill="#590093"/><rect x="396" y="360" width="12.5" height="12.5" fill="#5e0093"/><rect x="408" y="360" width="12.5" height="12.5" fill="#640093"/><rect x="420" y="360" width="12.5" height="12.5" fill="#6a0093"/><rect x="432" y="360" width="12.5" height="12.5" fill="#6f0093"/><rect x="444" y="360" width="12.5" height="12.5" fill="#750093"/><rect x="456" y="360" width="12.5" height="12.5" fill="#7b0093"/><rect x="468" y="360" width="12.5" height="12.5" fill="#810093"/><rect x="480" y="360" width="12.5" height="12.5" fill="#870093"/><rect x="492" y="360" width="12.5" height="12.5" fill="#8d0093"/><rect x="504" y="360" width="12.5" height="12.5" fill="#920093"/><rect x="516" y="360" width="12.5" height="12.5" fill="#93008e"/><rect x="528" y="360" width="12.5" height="12.5" fill="#930089"/><rect x="540" y="360" width="12.5" height="12.5" fill="#930084"/><rect x="552" y="360" width="12.5" height="12.5" fill="#93007f"/><rect x="564" y="360" width="12.5" height="12.5" fill="#93007b"/><rect x="576" y="360" width="12.5" height="12.5" fill="#930076"/><rect x="588" y="360" width="12.5" height="12.5" fill="#930073"/><rect x="600" y="360" width="12.5" height="12.5" fill="#93006f"/><rect x="612" y="360" width="12.5" height="12.5" fill="#93006b"/><rect x="0" y="372" width="12.5" height="12.5" fill="#001193"/><rect x="12" y="372" width="12.5" height="12.5" fill="#000f93"/><rect x="24" y="372" width="12.5" height="12.5" fill="#000e93"/><rect x="36" y="372" width="12.5" height="12.5" fill="#000d93"/><rect x="48" y="372" width="12.5" height="12.5" fill="#000b93"/><rect x="60" y="372" width="12.5" height="12.5" fill="#000a93"/><rect x="72" y="372" width="12.5" height="12.5" fill="#000893"/><rect x="84" y="372" width="12.5" height="12.5" fill="#000793"/><rect x="96" y="372" width="12.5" height="12.5" fill="#000593"/><rect x="108" y="372" width="12.5" height="12.5" fill="#000493"/><rect x="120" y="372" width="12.5" height="12.5" fill="#000293"/><rect x="132" y="372" width="12.5" height="12.5" fill="#000193"/><rect x="144" y="372" width="12.5" height="12.5" fill="#000093"/><rect x="156" y="372" width="12.5" height="12.5" fill="#000093"/><rect x="168" y="372" width="12.5" height="12.5" fill="#000093"/><rect x="180" y="372" width="12.5" height="12.5" fill="#000093"/><rect x="192" y="372" width="12.5" height="12.5" fill="#040093"/><rect x="204" y="372" width="12.5" height="12.5" fill="#090093"/><rect x="216" y="372" width="12.5" height="12.5" fill="#0d0093"/><rect x="228" y="372" width="12.5" height="12.5" fill="#120093"/><rect x="240" y="372" width="12.5" height="12.5" fill="#170093"/><rect x="252" y="372" width="12.5" height="12.5" fill="#1c0093"/><rect x="264" y="372" width="12.5" height="12.5" fill="#210093"/><rect x="276" y="372" width="12.5" height="12.5" fill="#260093"/><rect x="288" y="372" width="12.5" height="12.5" fill="#2b0093"/><rect x="300" y="372" width="12.5" height="12.5" fill="#300093"/><rect x="312" y="372" width="12.5" height="12.5" fill="#350093"/><rect x="324" y="372" width="12.5" height="12.5" fill="#3a0093"/><rect x="336" y="372" width="12.5" height="12.5" fill="#3f0093"/><rect x="348" y="372" width="12.5" height="12.5" fill="#450093"/><rect x="360" y="372" width="12.5" height="12.5" fill="#4a0093"/><rect x="372" y="372" width="12.5" height="12.5" fill="#4f0093"/><rect x="384" y="372" width="12.5" height="12.5" fill="#540093"/><rect x="396" y="372" width="12.5" height="12.5" fill="#5a0093"/><rect x="408" y="372" width="12.5" height="12.5" fill="#5f0093"/><rect x="420" y="372" width="12.5" height="12.5" fill="#650093"/><rect x="432" y="372" width="12.5" height="12.5" fill="#6a0093"/><rect x="444" y="372" width="12.5" height="12.5" fill="#700093"/><rect x="456" y="372" width="12.5" height="12.5" fill="#750093"/><rect x="468" y="372" width="12.5" height="12.5" fill="#7b0093"/><rect x="480" y="372" width="12.5" height="12.5" fill="#800093"/><rect x="492" y="372" width="12.5" height="12.5" fill="#860093"/><rect x="504" y="372" width="12.5" height="12.5" fill="#8c0093"/><rect x="516" y="372" width="12.5" height="12.5" fill="#910093"/><rect x="528" y="372" width="12.5" height="12.5" fill="#930090"/><rect x="540" y="372" width="12.5" height="12.5" fill="#93008a"/><rect x="552" y="372" width="12.5" height="12.5" fill="#930085"/><rect x="564" y="372" width="12.5" height="12.5" fill="#930081"/><rect x="576" y="372" width="12.5" height="12.5" fill="#93007c"/><rect x="588" y="372" width="12.5" height="12.5" fill="#930078"/><rect x="600" y="372" width="12.5" height="12.5" fill="#930074"/><rect x="612" y="372" width="12.5" height="12.5" fill="#930070"/><rect x="0" y="384" width="12.5" height="12.5" fill="#000f93"/><rect x="12" y="384" width="12.5" height="12.5" fill="#000d93"/><rect x="24" y="384" width="12.5" height="12.5" fill="#000c93"/><rect x="36" y="384" width="12.5" height="12.5" fill="#000b93"/><rect x="48" y="384" width="12.5" height="12.5" fill="#000993"/><rect x="60" y="384" width="12.5" height="12.5" fill="#000893"/><rect x="72" y="384" width="12.5" height="12.5" fill="#000693"/><rect x="84" y="384" width="12.5" height="12.5" fill="#000593"/><rect x="96" y="384" width="12.5" height="12.5" fill="#000493"/><rect x="108" y="384" width="12.5" height="12.5" fill="#000293"/><rect x="120" y="384" width="12.5" height="12.5" fill="#000193"/><rect x="132" y="384" width="12.5" height="12.5" fill="#000093"/><rect x="144" y="384" width="12.5" height="12.5" fill="#000093"/><rect x="156" y="384" width="12.5" height="12.5" fill="#000093"/><rect x="168" y="384" width="12.5" height="12.5" fill="#000093"/><rect x="180" y="384" width="12.5" height="12.5" fill="#000093"/><rect x="192" y="384" width="12.5" height="12.5" fill="#020093"/><rect x="204" y="384" width="12.5" height="12.5" fill="#070093"/><rect x="216" y="384" width="12.5" height="12.5" fill="#0c0093"/><rect x="228" y="384" width="12.5" height="12.5" fill="#100093"/><rect x="240" y="384" width="12.5" height="12.5" fill="#150093"/><rect x="252" y="384" width="12.5" height="12.5" fill="#1a0093"/><rect x="264" y="384" width="12.5" height="12.5" fill="#1f0093"/><rect x="276" y="384" width="12.5" height="12.5" fill="#230093"/><rect x="288" y="384" width="12.5" height="12.5" fill="#280093"/><rect x="300" y="384" width="12.5" height="12.5" fill="#2d0093"/><rect x="312" y="384" width="12.5" height="12.5" fill="#320093"/><rect x="324" y="384" width="12.5" height="12.5" fill="#370093"/><rect x="336" y="384" width="12.5" height="12.5" fill="#3c0093"/><rect x="348" y="384" width="12.5" height="12.5" fill="#410093"/><rect x="360" y="384" width="12.5" height="12.5" fill="#460093"/><rect x="372" y="384" width="12.5" height="12.5" fill="#4b0093"/><rect x="384" y="384" width="12.5" height="12.5" fill="#500093"/><rect x="396" y="384" width="12.5" height="12.5" fill="#550093"/><rect x="408" y="384" width="12.5" height="12.5" fill="#5b0093"/><rect x="420" y="384" width="12.5" height="12.5" fill="#600093"/><rect x="432" y="384" width="12.5" height="12.5" fill="#650093"/><rect x="444" y="384" width="12.5" height="12.5" fill="#6a0093"/><rect x="456" y="384" width="12.5" height="12.5" fill="#700093"/><rect x="468" y="384" width="12.5" height="12.5" fill="#750093"/><rect x="480" y="384" width="12.5" height="12.5" fill="#7a0093"/><rect x="492" y="384" width="12.5" height="12.5" fill="#800093"/><rect x="504" y="384" width="12.5" height="12.5" fill="#850093"/><rect x="516" y="384" width="12.5" height="12.5" fill="#8b0093"/><rect x="528" y="384" width="12.5" height="12.5" fill="#910093"/><rect x="540" y="384" width="12.5" height="12.5" fill="#930091"/><rect x="552" y="384" width="12.5" height="12.5" fill="#93008b"/><rect x="564" y="384" width="12.5" height="12.5" fill="#930087"/><rect x="576" y="384" width="12.5" height="12.5" fill="#930082"/><rect x="588" y="384" width="12.5" height="12.5" fill="#93007e"/><rect x="600" y="384" width="12.5" height="12.5" fill="#930079"/><rect x="612" y="384" width="12.5" height="12.5" fill="#930076"/><rect x="0" y="396" width="12.5" height="12.5" fill="#000d93"/><rect x="12" y="396" width="12.5" height="12.5" fill="#000b93"/><rect x="24" y="396" width="12.5" height="12.5" fill="#000a93"/><rect x="36" y="396" width="12.5" height="12.5" fill="#000993"/><rect x="48" y="396" width="12.5" height="12.5" fill="#000793"/><rect x="60" y="396" width="12.5" height="12.5" fill="#000693"/><rect x="72" y="396" width="12.5" height="12.5" fill="#000593"/><rect x="84" y="396" width="12.5" height="12.5" fill="#000393"/><rect x="96" y="396" width="12.5" height="12.5" fill="#000293"/><rect x="108" y="396" width="12.5" height="12.5" fill="#000193"/><rect x="120" y="396" width="12.5" height="12.5" fill="#000093"/><rect x="132" y="396" width="12.5" height="12.5" fill="#000093"/><rect x="144" y="396" width="12.5" height="12.5" fill="#000093"/><rect x="156" y="396" width="12.5" height="12.5" fill="#000093"/><rect x="168" y="396" width="12.5" height="12.5" fill="#000093"/><rect x="180" y="396" width="12.5" height="12.5" fill="#000093"/><rect x="192" y="396" width="12.5" height="12.5" fill="#010093"/><rect x="204" y="396" width="12.5" height="12.5" fill="#060093"/><rect x="216" y="396" width="12.5" height="12.5" fill="#0a0093"/><rect x="228" y="396" width="12.5" height="12.5" fill="#0f0093"/><rect x="240" y="396" width="12.5" height="12.5" fill="#130093"/><rect x="252" y="396" width="12.5" height="12.5" fill="#180093"/><rect x="264" y="396" width="12.5" height="12.5" fill="#1d0093"/><rect x="276" y="396" width="12.5" height="12.5" fill="#210093"/><rect x="288" y="396" width="12.5" height="12.5" fill="#260093"/><rect x="300" y="396" width="12.5" height="12.5" fill="#2b0093"/><rect x="312" y="396" width="12.5" height="12.5" fill="#2f0093"/><rect x="324" y="396" width="12.5" height="12.5" fill="#340093"/><rect x="336" y="396" width="12.5" height="12.5" fill="#390093"/><rect x="348" y="396" width="12.5" height="12.5" fill="#3e0093"/><rect x="360" y="396" width="12.5" height="12.5" fill="#430093"/><rect x="372" y="396" width="12.5" height="12.5" fill="#470093"/><rect x="384" y="396" width="12.5" height="12.5" fill="#4c0093"/><rect x="396" y="396" width="12.5" height="12.5" fill="#510093"/><rect x="408" y="396" width="12.5" height="12.5" fill="#560093"/><rect x="420" y="396" width="12.5" height="12.5" fill="#5b0093"/><rect x="432" y="396" width="12.5" height="12.5" fill="#600093"/><rect x="444" y="396" width="12.5" height="12.5" fill="#660093"/><rect x="456" y="396" width="12.5" height="12.5" fill="#6b0093"/><rect x="468" y="396" width="12.5" height="12.5" fill="#700093"/><rect x="480" y="396" width="12.5" height="12.5" fill="#750093"/><rect x="492" y="396" width="12.5" height="12.5" fill="#7a0093"/><rect x="504" y="396" width="12.5" height="12.5" fill="#800093"/><rect x="516" y="396" width="12.5" height="12.5" fill="#850093"/><rect x="528" y="396" width="12.5" height="12.5" fill="#8a0093"/><rect x="540" y="396" width="12.5" height="12.5" fill="#900093"/><rect x="552" y="396" width="12.5" height="12.5" fill="#930092"/><rect x="564" y="396" width="12.5" height="12.5" fill="#93008d"/><rect x="576" y="396" width="12.5" height="12.5" fill="#930088"/><rect x="588" y="396" width="12.5" height="12.5" fill="#930083"/><rect x="600" y="396" width="12.5" height="12.5" fill="#93007f"/><rect x="612" y="396" width="12.5" height="12.5" fill="#93007b"/><rect x="0" y="408" width="12.5" height="12.5" fill="#000b93"/><rect x="12" y="408" width="12.5" height="12.5" fill="#000993"/><rect x="24" y="408" width="12.5" height="12.5" fill="#000893"/><rect x="36" y="408" width="12.5" height="12.5" fill="#000793"/><rect x="48" y="408" width="12.5" height="12.5" fill="#000693"/><rect x="60" y="408" width="12.5" height="12.5" fill="#000493"/><rect x="72" y="408" width="12.5" height="12.5" fill="#000393"/><rect x="84" y="408" width="12.5" height="12.5" fill="#000293"/><rect x="96" y="408" width="12.5" height="12.5" fill="#000093"/><rect x="108" y="408" width="12.5" height="12.5" fill="#000093"/><rect x="120" y="408" width="12.5" height="12.5" fill="#000093"/><rect x="132" y="408" width="12.5" height="12.5" fill="#000093"/><rect x="144" y="408" width="12.5" height="12.5" fill="#000093"/><rect x="156" y="408" width="12.5" height="12.5" fill="#000093"/><rect x="168" y="408" width="12.5" height="12.5" fill="#000093"/><rect x="180" y="408" width="12.5" height="12.5" fill="#000093"/><rect x="192" y="408" width="12.5" height="12.5" fill="#000093"/><rect x="204" y="408" width="12.5" height="12.5" fill="#050093"/><rect x="216" y="408" width="12.5" height="12.5" fill="#090093"/><rect x="228" y="408" width="12.5" height="12.5" fill="#0d0093"/><rect x="240" y="408" width="12.5" height="12.5" fill="#120093"/><rect x="252" y="408" width="12.5" height="12.5" fill="#160093"/><rect x="264" y="408" width="12.5" height="12.5" fill="#1b0093"/><rect x="276" y="408" width="12.5" height="12.5" fill="#1f0093"/><rect x="288" y="408" width="12.5" height="12.5" fill="#240093"/><rect x="300" y="408" width="12.5" height="12.5" fill="#280093"/><rect x="312" y="408" width="12.5" height="12.5" fill="#2d0093"/><rect x="324" y="408" width="12.5" height="12.5" fill="#310093"/><rect x="336" y="408" width="12.5" height="12.5" fill="#360093"/><rect x="348" y="408" width="12.5" height="12.5" fill="#3b0093"/><rect x="360" y="408" width="12.5" height="12.5" fill="#3f0093"/><rect x="372" y="408" width="12.5" height="12.5" fill="#440093"/><rect x="384" y="408" width="12.5" height="12.5" fill="#490093"/><rect x="396" y="408" width="12.5" height="12.5" fill="#4e0093"/><rect x="408" y="408" width="12.5" height="12.5" fill="#520093"/><rect x="420" y="408" width="12.5" height="12.5" fill="#570093"/><rect x="432" y="408" width="12.5" height="12.5" fill="#5c0093"/><rect x="444" y="408" width="12.5" height="12.5" fill="#610093"/><rect x="456" y="408" width="12.5" height="12.5" fill="#660093"/><rect x="468" y="408" width="12.5" height="12.5" fill="#6b0093"/><rect x="480" y="408" width="12.5" height="12.5" fill="#700093"/><rect x="492" y="408" width="12.5" height="12.5" fill="#750093"/><rect x="504" y="408" width="12.5" height="12.5" fill="#7a0093"/><rect x="516" y="408" width="12.5" height="12.5" fill="#7f0093"/><rect x="528" y="408" width="12.5" height="12.5" fill="#840093"/><rect x="540" y="408" width="12.5" height="12.5" fill="#8a0093"/><rect x="552" y="408" width="12.5" height="12.5" fill="#8f0093"/><rect x="564" y="408" width="12.5" height="12.5" fill="#930093"/><rect x="576" y="408" width="12.5" height="12.5" fill="#93008e"/><rect x="588" y="408" width="12.5" height="12.5" fill="#930089"/><rect x="600" y="408" width="12.5" height="12.5" fill="#930084"/><rect x="612" y="408" width="12.5" height="12.5" fill="#930080"/><rect x="0" y="420" width="12.5" height="12.5" fill="#000993"/><rect x="12" y="420" width="12.5" height="12.5" fill="#000893"/><rect x="24" y="420" width="12.5" height="12.5" fill="#000693"/><rect x="36" y="420" width="12.5" height="12.5" fill="#000593"/><rect x="48" y="420" width="12.5" height="12.5" fill="#000493"/><rect x="60" y="420" width="12.5" height="12.5" fill="#000393"/><rect x="72" y="420" width="12.5" height="12.5" fill="#000193"/><rect x="84" y="420" width="12.5" height="12.5" fill="#000093"/><rect x="96" y="420" width="12.5" height="12.5" fill="#000093"/><rect x="108" y="420" width="12.5" height="12.5" fill="#000093"/><rect x="120" y="420" width="12.5" height="12.5" fill="#000093"/><rect x="132" y="420" width="12.5" height="12.5" fill="#000093"/><rect x="144" y="420" width="12.5" height="12.5" fill="#000093"/><rect x="156" y="420" width="12.5" height="12.5" fill="#000093"/><rect x="168" y="420" width="12.5" height="12.5" fill="#000093"/><rect x="180" y="420" width="12.5" height="12.5" fill="#000093"/><rect x="192" y="420" width="12.5" height="12.5" fill="#000093"/><rect x="204" y="420" width="12.5" height="12.5" fill="#030093"/><rect x="216" y="420" width="12.5" height="12.5" fill="#080093"/><rect x="228" y="420" width="12.5" height="12.5" fill="#0c0093"/><rect x="240" y="420" width="12.5" height="12.5" fill="#100093"/><rect x="252" y="420" width="12.5" height="12.5" fill="#140093"/><rect x="264" y="420" width="12.5" height="12.5" fill="#190093"/><rect x="276" y="420" width="12.5" height="12.5" fill="#1d0093"/><rect x="288" y="420" width="12.5" height="12.5" fill="#210093"/><rect x="300" y="420" width="12.5" height="12.5" fill="#260093"/><rect x="312" y="420" width="12.5" height="12.5" fill="#2a0093"/><rect x="324" y="420" width="12.5" height="12.5" fill="#2f0093"/><rect x="336" y="420" width="12.5" height="12.5" fill="#330093"/><rect x="348" y="420" width="12.5" height="12.5" fill="#380093"/><rect x="360" y="420" width="12.5" height="12.5" fill="#3c0093"/><rect x="372" y="420" width="12.5" height="12.5" fill="#410093"/><rect x="384" y="420" width="12.5" height="12.5" fill="#450093"/><rect x="396" y="420" width="12.5" height="12.5" fill="#4a0093"/><rect x="408" y="420" width="12.5" height="12.5" fill="#4f0093"/><rect x="420" y="420" width="12.5" height="12.5" fill="#530093"/><rect x="432" y="420" width="12.5" height="12.5" fill="#580093"/><rect x="444" y="420" width="12.5" height="12.5" fill="#5d0093"/><rect x="456" y="420" width="12.5" height="12.5" fill="#620093"/><rect x="468" y="420" width="12.5" height="12.5" fill="#660093"/><rect x="480" y="420" width="12.5" height="12.5" fill="#6b0093"/><rect x="492" y="420" width="12.5" height="12.5" fill="#700093"/><rect x="504" y="420" width="12.5" height="12.5" fill="#750093"/><rect x="516" y="420" width="12.5" height="12.5" fill="#7a0093"/><rect x="528" y="420" width="12.5" height="12.5" fill="#7f0093"/><rect x="540" y="420" width="12.5" height="12.5" fill="#840093"/><rect x="552" y="420" width="12.5" height="12.5" fill="#890093"/><rect x="564" y="420" width="12.5" height="12.5" fill="#8e0093"/><rect x="576" y="420" width="12.5" height="12.5" fill="#930093"/><rect x="588" y="420" width="12.5" height="12.5" fill="#93008f"/><rect x="600" y="420" width="12.5" height="12.5" fill="#93008a"/><rect x="612" y="420" width="12.5" height="12.5" fill="#930086"/><rect x="0" y="432" width="12.5" height="12.5" fill="#000793"/><rect x="12" y="432" width="12.5" height="12.5" fill="#000693"/><rect x="24" y="432" width="12.5" height="12.5" fill="#000593"/><rect x="36" y="432" width="12.5" height="12.5" fill="#000493"/><rect x="48" y="432" width="12.5" height="12.5" fill="#000293"/><rect x="60" y="432" width="12.5" height="12.5" fill="#000193"/><rect x="72" y="432" width="12.5" height="12.5" fill="#000093"/><rect x="84" y="432" width="12.5" height="12.5" fill="#000093"/><rect x="96" y="432" width="12.5" height="12.5" fill="#000093"/><rect x="108" y="432" width="12.5" height="12.5" fill="#000093"/><rect x="120" y="432" width="12.5" height="12.5" fill="#000093"/><rect x="132" y="432" width="12.5" height="12.5" fill="#000093"/><rect x="144" y="432" width="12.5" height="12.5" fill="#000093"/><rect x="156" y="432" width="12.5" height="12.5" fill="#000093"/><rect x="168" y="432" width="12.5" height="12.5" fill="#000093"/><rect x="180" y="432" width="12.5" height="12.5" fill="#000093"/><rect x="192" y="432" width="12.5" height="12.5" fill="#000093"/><rect x="204" y="432" width="12.5" height="12.5" fill="#020093"/><rect x="216" y="432" width="12.5" height="12.5" fill="#060093"/><rect x="228" y="432" width="12.5" height="12.5" fill="#0b0093"/><rect x="240" y="432" width="12.5" height="12.5" fill="#0f0093"/><rect x="252" y="432" width="12.5" height="12.5" fill="#130093"/><rect x="264" y="432" width="12.5" height="12.5" fill="#170093"/><rect x="276" y="432" width="12.5" height="12.5" fill="#1b0093"/><rect x="288" y="432" width="12.5" height="12.5" fill="#1f0093"/><rect x="300" y="432" width="12.5" height="12.5" fill="#240093"/><rect x="312" y="432" width="12.5" height="12.5" fill="#280093"/><rect x="324" y="432" width="12.5" height="12.5" fill="#2c0093"/><rect x="336" y="432" width="12.5" height="12.5" fill="#310093"/><rect x="348" y="432" width="12.5" height="12.5" fill="#350093"/><rect x="360" y="432" width="12.5" height="12.5" fill="#390093"/><rect x="372" y="432" width="12.5" height="12.5" fill="#3e0093"/><rect x="384" y="432" width="12.5" height="12.5" fill="#420093"/><rect x="396" y="432" width="12.5" height="12.5" fill="#470093"/><rect x="408" y="432" width="12.5" height="12.5" fill="#4b0093"/><rect x="420" y="432" width="12.5" height="12.5" fill="#500093"/><rect x="432" y="432" width="12.5" height="12.5" fill="#540093"/><rect x="444" y="432" width="12.5" height="12.5" fill="#590093"/><rect x="456" y="432" width="12.5" height="12.5" fill="#5e0093"/><rect x="468" y="432" width="12.5" height="12.5" fill="#620093"/><rect x="480" y="432" width="12.5" height="12.5" fill="#670093"/><rect x="492" y="432" width="12.5" height="12.5" fill="#6c0093"/><rect x="504" y="432" width="12.5" height="12.5" fill="#700093"/><rect x="516" y="432" width="12.5" height="12.5" fill="#750093"/><rect x="528" y="432" width="12.5" height="12.5" fill="#7a0093"/><rect x="540" y="432" width="12.5" height="12.5" fill="#7f0093"/><rect x="552" y="432" width="12.5" height="12.5" fill="#840093"/><rect x="564" y="432" width="12.5" height="12.5" fill="#880093"/><rect x="576" y="432" width="12.5" height="12.5" fill="#8d0093"/><rect x="588" y="432" width="12.5" height="12.5" fill="#920093"/><rect x="600" y="432" width="12.5" height="12.5" fill="#930090"/><rect x="612" y="432" width="12.5" height="12.5" fill="#93008b"/><rect x="0" y="444" width="12.5" height="12.5" fill="#000693"/><rect x="12" y="444" width="12.5" height="12.5" fill="#000593"/><rect x="24" y="444" width="12.5" height="12.5" fill="#000393"/><rect x="36" y="444" width="12.5" height="12.5" fill="#000293"/><rect x="48" y="444" width="12.5" height="12.5" fill="#000193"/><rect x="60" y="444" width="12.5" height="12.5" fill="#000093"/><rect x="72" y="444" width="12.5" height="12.5" fill="#000093"/><rect x="84" y="444" width="12.5" height="12.5" fill="#000093"/><rect x="96" y="444" width="12.5" height="12.5" fill="#000093"/><rect x="108" y="444" width="12.5" height="12.5" fill="#000093"/><rect x="120" y="444" width="12.5" height="12.5" fill="#000093"/><rect x="132" y="444" width="12.5" height="12.5" fill="#000093"/><rect x="144" y="444" width="12.5" height="12.5" fill="#000093"/><rect x="156" y="444" width="12.5" height="12.5" fill="#000093"/><rect x="168" y="444" width="12.5" height="12.5" fill="#000093"/><rect x="180" y="444" width="12.5" height="12.5" fill="#000093"/><rect x="192" y="444" width="12.5" height="12.5" fill="#000093"/><rect x="204" y="444" width="12.5" height="12.5" fill="#010093"/><rect x="216" y="444" width="12.5" height="12.5" fill="#050093"/><rect x="228" y="444" width="12.5" height="12.5" fill="#090093"/><rect x="240" y="444" width="12.5" height="12.5" fill="#0d0093"/><rect x="252" y="444" width="12.5" height="12.5" fill="#110093"/><rect x="264" y="444" width="12.5" height="12.5" fill="#150093"/><rect x="276" y="444" width="12.5" height="12.5" fill="#190093"/><rect x="288" y="444" width="12.5" height="12.5" fill="#1e0093"/><rect x="300" y="444" width="12.5" height="12.5" fill="#220093"/><rect x="312" y="444" width="12.5" height="12.5" fill="#260093"/><rect x="324" y="444" width="12.5" height="12.5" fill="#2a0093"/><rect x="336" y="444" width="12.5" height="12.5" fill="#2e0093"/><rect x="348" y="444" width="12.5" height="12.5" fill="#320093"/><rect x="360" y="444" width="12.5" height="12.5" fill="#370093"/><rect x="372" y="444" width="12.5" height="12.5" fill="#3b0093"/><rect x="384" y="444" width="12.5" height="12.5" fill="#3f0093"/><rect x="396" y="444" width="12.5" height="12.5" fill="#440093"/><rect x="408" y="444" width="12.5" height="12.5" fill="#480093"/><rect x="420" y="444" width="12.5" height="12.5" fill="#4c0093"/><rect x="432" y="444" width="12.5" height="12.5" fill="#510093"/><rect x="444" y="444" width="12.5" height="12.5" fill="#550093"/><rect x="456" y="444" width="12.5" height="12.5" fill="#5a0093"/><rect x="468" y="444" width="12.5" height="12.5" fill="#5e0093"/><rect x="480" y="444" width="12.5" height="12.5" fill="#630093"/><rect x="492" y="444" width="12.5" height="12.5" fill="#670093"/><rect x="504" y="444" width="12.5" height="12.5" fill="#6c0093"/><rect x="516" y="444" width="12.5" height="12.5" fill="#700093"/><rect x="528" y="444" width="12.5" height="12.5" fill="#750093"/><rect x="540" y="444" width="12.5" height="12.5" fill="#7a0093"/><rect x="552" y="444" width="12.5" height="12.5" fill="#7e0093"/><rect x="564" y="444" width="12.5" height="12.5" fill="#830093"/><rect x="576" y="444" width="12.5" height="12.5" fill="#880093"/><rect x="588" y="444" width="12.5" height="12.5" fill="#8d0093"/><rect x="600" y="444" width="12.5" height="12.5" fill="#910093"/><rect x="612" y="444" width="12.5" height="12.5" fill="#930091"/><rect x="0" y="456" width="12.5" height="12.5" fill="#000493"/><rect x="12" y="456" width="12.5" height="12.5" fill="#000393"/><rect x="24" y="456" width="12.5" height="12.5" fill="#000293"/><rect x="36" y="456" width="12.5" height="12.5" fill="#000193"/><rect x="48" y="456" width="12.5" height="12.5" fill="#000093"/><rect x="60" y="456" width="12.5" height="12.5" fill="#000093"/><rect x="72" y="456" width="12.5" height="12.5" fill="#000093"/><rect x="84" y="456" width="12.5" height="12.5" fill="#000093"/><rect x="96" y="456" width="12.5" height="12.5" fill="#000093"/><rect x="108" y="456" width="12.5" height="12.5" fill="#000093"/><rect x="120" y="456" width="12.5" height="12.5" fill="#000093"/><rect x="132" y="456" width="12.5" height="12.5" fill="#000093"/><rect x="144" y="456" width="12.5" height="12.5" fill="#000093"/><rect x="156" y="456" width="12.5" height="12.5" fill="#000093"/><rect x="168" y="456" width="12.5" height="12.5" fill="#000093"/><rect x="180" y="456" width="12.5" height="12.5" fill="#000093"/><rect x="192" y="456" width="12.5" height="12.5" fill="#000093"/><rect x="204" y="456" width="12.5" height="12.5" fill="#000093"/><rect x="216" y="456" width="12.5" height="12.5" fill="#040093"/><rect x="228" y="456" width="12.5" height="12.5" fill="#080093"/><rect x="240" y="456" width="12.5" height="12.5" fill="#0c0093"/><rect x="252" y="456" width="12.5" height="12.5" fill="#100093"/><rect x="264" y="456" width="12.5" height="12.5" fill="#140093"/><rect x="276" y="456" width="12.5" height="12.5" fill="#180093"/><rect x="288" y="456" width="12.5" height="12.5" fill="#1c0093"/><rect x="300" y="456" width="12.5" height="12.5" fill="#200093"/><rect x="312" y="456" width="12.5" height="12.5" fill="#240093"/><rect x="324" y="456" width="12.5" height="12.5" fill="#280093"/><rect x="336" y="456" width="12.5" height="12.5" fill="#2c0093"/><rect x="348" y="456" width="12.5" height="12.5" fill="#300093"/><rect x="360" y="456" width="12.5" height="12.5" fill="#340093"/><rect x="372" y="456" width="12.5" height="12.5" fill="#380093"/><rect x="384" y="456" width="12.5" height="12.5" fill="#3c0093"/><rect x="396" y="456" width="12.5" height="12.5" fill="#410093"/><rect x="408" y="456" width="12.5" height="12.5" fill="#450093"/><rect x="420" y="456" width="12.5" height="12.5" fill="#490093"/><rect x="432" y="456" width="12.5" height="12.5" fill="#4d0093"/><rect x="444" y="456" width="12.5" height="12.5" fill="#520093"/><rect x="456" y="456" width="12.5" height="12.5" fill="#560093"/><rect x="468" y="456" width="12.5" height="12.5" fill="#5a0093"/><rect x="480" y="456" width="12.5" height="12.5" fill="#5f0093"/><rect x="492" y="456" width="12.5" height="12.5" fill="#630093"/><rect x="504" y="456" width="12.5" height="12.5" fill="#680093"/><rect x="516" y="456" width="12.5" height="12.5" fill="#6c0093"/><rect x="528" y="456" width="12.5" height="12.5" fill="#710093"/><rect x="540" y="456" width="12.5" height="12.5" fill="#750093"/><rect x="552" y="456" width="12.5" height="12.5" fill="#7a0093"/><rect x="564" y="456" width="12.5" height="12.5" fill="#7e0093"/><rect x="576" y="456" width="12.5" height="12.5" fill="#830093"/><rect x="588" y="456" width="12.5" height="12.5" fill="#870093"/><rect x="600" y="456" width="12.5" height="12.5" fill="#8c0093"/><rect x="612" y="456" width="12.5" height="12.5" fill="#910093"/><g clip-path="url(#tc)"><rect x="84" y="0" width="12.5" height="12.5" fill="#00ff00"/><rect x="96" y="0" width="12.5" height="12.5" fill="#00ff00"/><rect x="108" y="0" width="12.5" height="12.5" fill="#04ff00"/><rect x="120" y="0" width="12.5" height="12.5" fill="#0cff00"/><rect x="132" y="0" width="12.5" height="12.5" fill="#1aff00"/><rect x="144" y="0" width="12.5" height="12.5" fill="#2cff00"/><rect x="156" y="0" width="12.5" height="12.5" fill="#44ff00"/><rect x="168" y="0" width="12.5" height="12.5" fill="#63ff00"/><rect x="180" y="0" width="12.5" height="12.5" fill="#89ff00"/><rect x="192" y="0" width="12.5" height="12.5" fill="#b7ff00"/><rect x="204" y="0" width="12.5" height="12.5" fill="#eeff00"/><rect x="216" y="0" width="12.5" height="12.5" fill="#ffd500"/><rect x="228" y="0" width="12.5" height="12.5" fill="#ffa900"/><rect x="240" y="0" width="12.5" height="12.5" fill="#ff8800"/><rect x="252" y="0" width="12.5" height="12.5" fill="#ff6e00"/><rect x="264" y="0" width="12.5" height="12.5" fill="#ff5a00"/><rect x="276" y="0" width="12.5" height="12.5" fill="#ff4a00"/><rect x="288" y="0" width="12.5" height="12.5" fill="#ff3d00"/><rect x="300" y="0" width="12.5" height="12.5" fill="#ff3300"/><rect x="312" y="0" width="12.5" height="12.5" fill="#ff2a00"/><rect x="324" y="0" width="12.5" height="12.5" fill="#ff2300"/><rect x="336" y="0" width="12.5" height="12.5" fill="#ff1d00"/><rect x="348" y="0" width="12.5" height="12.5" fill="#ff1800"/><rect x="360" y="0" width="12.5" height="12.5" fill="#ff1400"/><rect x="372" y="0" width="12.5" height="12.5" fill="#ff1000"/><rect x="384" y="0" width="12.5" height="12.5" fill="#ff0d00"/><rect x="396" y="0" width="12.5" height="12.5" fill="#ff0b00"/><rect x="408" y="0" width="12.5" height="12.5" fill="#ff0900"/><rect x="420" y="0" width="12.5" height="12.5" fill="#ff0700"/><rect x="432" y="0" width="12.5" height="12.5" fill="#ff0600"/><rect x="444" y="0" width="12.5" height="12.5" fill="#ff0400"/><rect x="456" y="0" width="12.5" height="12.5" fill="#ff0300"/><rect x="468" y="0" width="12.5" height="12.5" fill="#ff0200"/><rect x="480" y="0" width="12.5" height="12.5" fill="#ff0200"/><rect x="492" y="0" width="12.5" height="12.5" fill="#ff0100"/><rect x="504" y="0" width="12.5" height="12.5" fill="#ff0100"/><rect x="516" y="0" width="12.5" height="12.5" fill="#ff0000"/><rect x="84" y="12" width="12.5" height="12.5" fill="#00ff00"/><rect x="96" y="12" width="12.5" height="12.5" fill="#00ff00"/><rect x="108" y="12" width="12.5" height="12.5" fill="#03ff00"/><rect x="120" y="12" width="12.5" height="12.5" fill="#0bff00"/><rect x="132" y="12" width="12.5" height="12.5" fill="#18ff00"/><rect x="144" y="12" width="12.5" height="12.5" fill="#2aff00"/><rect x="156" y="12" width="12.5" height="12.5" fill="#43ff00"/><rect x="168" y="12" width="12.5" height="12.5" fill="#62ff00"/><rect x="180" y="12" width="12.5" height="12.5" fill="#89ff00"/><rect x="192" y="12" width="12.5" height="12.5" fill="#b9ff00"/><rect x="204" y="12" width="12.5" height="12.5" fill="#f3ff00"/><rect x="216" y="12" width="12.5" height="12.5" fill="#ffcf00"/><rect x="228" y="12" width="12.5" height="12.5" fill="#ffa300"/><rect x="240" y="12" width="12.5" height="12.5" fill="#ff8200"/><rect x="252" y="12" width="12.5" height="12.5" fill="#ff6900"/><rect x="264" y="12" width="12.5" height="12.5" fill="#ff5500"/><rect x="276" y="12" width="12.5" height="12.5" fill="#ff4600"/><rect x="288" y="12" width="12.5" height="12.5" fill="#ff3900"/><rect x="300" y="12" width="12.5" height="12.5" fill="#ff2f00"/><rect x="312" y="12" width="12.5" height="12.5" fill="#ff2700"/><rect x="324" y="12" width="12.5" height="12.5" fill="#ff2000"/><rect x="336" y="12" width="12.5" height="12.5" fill="#ff1a00"/><rect x="348" y="12" width="12.5" height="12.5" fill="#ff1600"/><rect x="360" y="12" width="12.5" height="12.5" fill="#ff1200"/><rect x="372" y="12" width="12.5" height="12.5" fill="#ff0f00"/><rect x="384" y="12" width="12.5" height="12.5" fill="#ff0c00"/><rect x="396" y="12" width="12.5" height="12.5" fill="#ff0a00"/><rect x="408" y="12" width="12.5" height="12.5" fill="#ff0800"/><rect x="420" y="12" width="12.5" height="12.5" fill="#ff0600"/><rect x="432" y="12" width="12.5" height="12.5" fill="#ff0500"/><rect x="444" y="12" width="12.5" height="12.5" fill="#ff0300"/><rect x="456" y="12" width="12.5" height="12.5" fill="#ff0300"/><rect x="468" y="12" width="12.5" height="12.5" fill="#ff0200"/><rect x="480" y="12" width="12.5" height="12.5" fill="#ff0100"/><rect x="492" y="12" width="12.5" height="12.5" fill="#ff0100"/><rect x="504" y="12" width="12.5" height="12.5" fill="#ff0000"/><rect x="516" y="12" width="12.5" height="12.5" fill="#ff0000"/><rect x="84" y="24" width="12.5" height="12.5" fill="#00ff03"/><rect x="96" y="24" width="12.5" height="12.5" fill="#00ff03"/><rect x="108" y="24" width="12.5" height="12.5" fill="#02ff02"/><rect x="120" y="24" width="12.5" height="12.5" fill="#09ff02"/><rect x="132" y="24" width="12.5" height="12.5" fill="#16ff01"/><rect x="144" y="24" width="12.5" height="12.5" fill="#28ff01"/><rect x="156" y="24" width="12.5" height="12.5" fill="#41ff01"/><rect x="168" y="24" width="12.5" height="12.5" fill="#61ff00"/><rect x="180" y="24" width="12.5" height="12.5" fill="#8aff00"/><rect x="192" y="24" width="12.5" height="12.5" fill="#bcff00"/><rect x="204" y="24" width="12.5" height="12.5" fill="#f9ff00"/><rect x="216" y="24" width="12.5" height="12.5" fill="#ffc800"/><rect x="228" y="24" width="12.5" height="12.5" fill="#ff9d00"/><rect x="240" y="24" width="12.5" height="12.5" fill="#ff7d00"/><rect x="252" y="24" width="12.5" height="12.5" fill="#ff6400"/><rect x="264" y="24" width="12.5" height="12.5" fill="#ff5100"/><rect x="276" y="24" width="12.5" height="12.5" fill="#ff4200"/><rect x="288" y="24" width="12.5" height="12.5" fill="#ff3500"/><rect x="300" y="24" width="12.5" height="12.5" fill="#ff2c00"/><rect x="312" y="24" width="12.5" height="12.5" fill="#ff2400"/><rect x="324" y="24" width="12.5" height="12.5" fill="#ff1d00"/><rect x="336" y="24" width="12.5" height="12.5" fill="#ff1800"/><rect x="348" y="24" width="12.5" height="12.5" fill="#ff1400"/><rect x="360" y="24" width="12.5" height="12.5" fill="#ff1000"/><rect x="372" y="24" width="12.5" height="12.5" fill="#ff0d00"/><rect x="384" y="24" width="12.5" height="12.5" fill="#ff0a00"/><rect x="396" y="24" width="12.5" height="12.5" fill="#ff0800"/><rect x="408" y="24" width="12.5" height="12.5" fill="#ff0600"/><rect x="420" y="24" width="12.5" height="12.5" fill="#ff0500"/><rect x="432" y="24" width="12.5" height="12.5" fill="#ff0400"/><rect x="444" y="24" width="12.5" height="12.5" fill="#ff0300"/><rect x="456" y="24" width="12.5" height="12.5" fill="#ff0200"/><rect x="468" y="24" width="12.5" height="12.5" fill="#ff0100"/><rect x="480" y="24" width="12.5" height="12.5" fill="#ff0100"/><rect x="492" y="24" width="12.5" height="12.5" fill="#ff0000"/><rect x="504" y="24" width="12.5" height="12.5" fill="#ff0000"/><rect x="516" y="24" width="12.5" height="12.5" fill="#ff0000"/><rect x="84" y="36" width="12.5" height="12.5" fill="#00ff0c"/><rect x="96" y="36" width="12.5" height="12.5" fill="#00ff0c"/><rect x="108" y="36" width="12.5" height="12.5" fill="#01ff0b"/><rect x="120" y="36" width="12.5" height="12.5" fill="#07ff0b"/><rect x="132" y="36" width="12.5" height="12.5" fill="#14ff0a"/><rect x="144" y="36" width="12.5" height="12.5" fill="#26ff0a"/><rect x="156" y="36" width="12.5" height="12.5" fill="#40ff09"/><rect x="168" y="36" width="12.5" height="12.5" fill="#61ff08"/><rect x="180" y="36" width="12.5" height="12.5" fill="#8bff08"/><rect x="192" y="36" width="12.5" height="12.5" fill="#bfff07"/><rect x="204" y="36" width="12.5" height="12.5" fill="#fffd06"/><rect x="216" y="36" width="12.5" height="12.5" fill="#ffc204"/><rect x="228" y="36" width="12.5" height="12.5" fill="#ff9703"/><rect x="240" y="36" width="12.5" height="12.5" fill="#ff7702"/><rect x="252" y="36" width="12.5" height="12.5" fill="#ff5f01"/><rect x="264" y="36" width="12.5" height="12.5" fill="#ff4c00"/><rect x="276" y="36" width="12.5" height="12.5" fill="#ff3d00"/><rect x="288" y="36" width="12.5" height="12.5" fill="#ff3200"/><rect x="300" y="36" width="12.5" height="12.5" fill="#ff2800"/><rect x="312" y="36" width="12.5" height="12.5" fill="#ff2100"/><rect x="324" y="36" width="12.5" height="12.5" fill="#ff1b00"/><rect x="336" y="36" width="12.5" height="12.5" fill="#ff1600"/><rect x="348" y="36" width="12.5" height="12.5" fill="#ff1100"/><rect x="360" y="36" width="12.5" height="12.5" fill="#ff0e00"/><rect x="372" y="36" width="12.5" height="12.5" fill="#ff0b00"/><rect x="384" y="36" width="12.5" height="12.5" fill="#ff0900"/><rect x="396" y="36" width="12.5" height="12.5" fill="#ff0700"/><rect x="408" y="36" width="12.5" height="12.5" fill="#ff0500"/><rect x="420" y="36" width="12.5" height="12.5" fill="#ff0400"/><rect x="432" y="36" width="12.5" height="12.5" fill="#ff0300"/><rect x="444" y="36" width="12.5" height="12.5" fill="#ff0200"/><rect x="456" y="36" width="12.5" height="12.5" fill="#ff0100"/><rect x="468" y="36" width="12.5" height="12.5" fill="#ff0100"/><rect x="480" y="36" width="12.5" height="12.5" fill="#ff0000"/><rect x="492" y="36" width="12.5" height="12.5" fill="#ff0000"/><rect x="504" y="36" width="12.5" height="12.5" fill="#ff0000"/><rect x="516" y="36" width="12.5" height="12.5" fill="#ff0000"/><rect x="84" y="48" width="12.5" height="12.5" fill="#00ff1b"/><rect x="96" y="48" width="12.5" height="12.5" fill="#00ff1b"/><rect x="108" y="48" width="12.5" height="12.5" fill="#00ff1a"/><rect x="120" y="48" width="12.5" height="12.5" fill="#06ff1a"/><rect x="132" y="48" width="12.5" height="12.5" fill="#12ff1a"/><rect x="144" y="48" width="12.5" height="12.5" fill="#24ff1a"/><rect x="156" y="48" width="12.5" height="12.5" fill="#3eff19"/><rect x="168" y="48" width="12.5" height="12.5" fill="#60ff19"/><rect x="180" y="48" width="12.5" height="12.5" fill="#8cff19"/><rect x="192" y="48" width="12.5" height="12.5" fill="#c3ff18"/><rect x="204" y="48" width="12.5" height="12.5" fill="#fff717"/><rect x="216" y="48" width="12.5" height="12.5" fill="#ffbb11"/><rect x="228" y="48" width="12.5" height="12.5" fill="#ff900d"/><rect x="240" y="48" width="12.5" height="12.5" fill="#ff710a"/><rect x="252" y="48" width="12.5" height="12.5" fill="#ff5907"/><rect x="264" y="48" width="12.5" height="12.5" fill="#ff4706"/><rect x="276" y="48" width="12.5" height="12.5" fill="#ff3904"/><rect x="288" y="48" width="12.5" height="12.5" fill="#ff2e03"/><rect x="300" y="48" width="12.5" height="12.5" fill="#ff2502"/><rect x="312" y="48" width="12.5" height="12.5" fill="#ff1e02"/><rect x="324" y="48" width="12.5" height="12.5" fill="#ff1801"/><rect x="336" y="48" width="12.5" height="12.5" fill="#ff1301"/><rect x="348" y="48" width="12.5" height="12.5" fill="#ff0f00"/><rect x="360" y="48" width="12.5" height="12.5" fill="#ff0c00"/><rect x="372" y="48" width="12.5" height="12.5" fill="#ff0a00"/><rect x="384" y="48" width="12.5" height="12.5" fill="#ff0700"/><rect x="396" y="48" width="12.5" height="12.5" fill="#ff0600"/><rect x="408" y="48" width="12.5" height="12.5" fill="#ff0400"/><rect x="420" y="48" width="12.5" height="12.5" fill="#ff0300"/><rect x="432" y="48" width="12.5" height="12.5" fill="#ff0200"/><rect x="444" y="48" width="12.5" height="12.5" fill="#ff0100"/><rect x="456" y="48" width="12.5" height="12.5" fill="#ff0100"/><rect x="468" y="48" width="12.5" height="12.5" fill="#ff0000"/><rect x="480" y="48" width="12.5" height="12.5" fill="#ff0000"/><rect x="492" y="48" width="12.5" height="12.5" fill="#ff0000"/><rect x="504" y="48" width="12.5" height="12.5" fill="#ff0000"/><rect x="516" y="48" width="12.5" height="12.5" fill="#ff0000"/><rect x="84" y="60" width="12.5" height="12.5" fill="#00ff30"/><rect x="96" y="60" width="12.5" height="12.5" fill="#00ff30"/><rect x="108" y="60" width="12.5" height="12.5" fill="#00ff31"/><rect x="120" y="60" width="12.5" height="12.5" fill="#04ff31"/><rect x="132" y="60" width="12.5" height="12.5" fill="#0fff31"/><rect x="144" y="60" width="12.5" height="12.5" fill="#22ff32"/><rect x="156" y="60" width="12.5" height="12.5" fill="#3cff33"/><rect x="168" y="60" width="12.5" height="12.5" fill="#5fff33"/><rect x="180" y="60" width="12.5" height="12.5" fill="#8cff34"/><rect x="192" y="60" width="12.5" height="12.5" fill="#c6ff34"/><rect x="204" y="60" width="12.5" height="12.5" fill="#fff032"/><rect x="216" y="60" width="12.5" height="12.5" fill="#ffb426"/><rect x="228" y="60" width="12.5" height="12.5" fill="#ff8a1e"/><rect x="240" y="60" width="12.5" height="12.5" fill="#ff6b17"/><rect x="252" y="60" width="12.5" height="12.5" fill="#ff5412"/><rect x="264" y="60" width="12.5" height="12.5" fill="#ff420f"/><rect x="276" y="60" width="12.5" height="12.5" fill="#ff350c"/><rect x="288" y="60" width="12.5" height="12.5" fill="#ff2a0a"/><rect x="300" y="60" width="12.5" height="12.5" fill="#ff2208"/><rect x="312" y="60" width="12.5" height="12.5" fill="#ff1b06"/><rect x="324" y="60" width="12.5" height="12.5" fill="#ff1505"/><rect x="336" y="60" width="12.5" height="12.5" fill="#ff1104"/><rect x="348" y="60" width="12.5" height="12.5" fill="#ff0d03"/><rect x="360" y="60" width="12.5" height="12.5" fill="#ff0a03"/><rect x="372" y="60" width="12.5" height="12.5" fill="#ff0802"/><rect x="384" y="60" width="12.5" height="12.5" fill="#ff0602"/><rect x="396" y="60" width="12.5" height="12.5" fill="#ff0401"/><rect x="408" y="60" width="12.5" height="12.5" fill="#ff0301"/><rect x="420" y="60" width="12.5" height="12.5" fill="#ff0201"/><rect x="432" y="60" width="12.5" height="12.5" fill="#ff0100"/><rect x="444" y="60" width="12.5" height="12.5" fill="#ff0100"/><rect x="456" y="60" width="12.5" height="12.5" fill="#ff0000"/><rect x="468" y="60" width="12.5" height="12.5" fill="#ff0000"/><rect x="480" y="60" width="12.5" height="12.5" fill="#ff0000"/><rect x="492" y="60" width="12.5" height="12.5" fill="#ff0000"/><rect x="504" y="60" width="12.5" height="12.5" fill="#ff0000"/><rect x="516" y="60" width="12.5" height="12.5" fill="#ff0000"/><rect x="84" y="72" width="12.5" height="12.5" fill="#00ff4c"/><rect x="96" y="72" width="12.5" height="12.5" fill="#00ff4d"/><rect x="108" y="72" width="12.5" height="12.5" fill="#00ff4f"/><rect x="120" y="72" width="12.5" height="12.5" fill="#03ff50"/><rect x="132" y="72" width="12.5" height="12.5" fill="#0dff52"/><rect x="144" y="72" width="12.5" height="12.5" fill="#1fff54"/><rect x="156" y="72" width="12.5" height="12.5" fill="#3aff56"/><rect x="168" y="72" width="12.5" height="12.5" fill="#5eff58"/><rect x="180" y="72" width="12.5" height="12.5" fill="#8dff5b"/><rect x="192" y="72" width="12.5" height="12.5" fill="#caff5e"/><rect x="204" y="72" width="12.5" height="12.5" fill="#ffe858"/><rect x="216" y="72" width="12.5" height="12.5" fill="#ffad44"/><rect x="228" y="72" width="12.5" height="12.5" fill="#ff8335"/><rect x="240" y="72" width="12.5" height="12.5" fill="#ff652a"/><rect x="252" y="72" width="12.5" height="12.5" fill="#ff4e22"/><rect x="264" y="72" width="12.5" height="12.5" fill="#ff3e1c"/><rect x="276" y="72" width="12.5" height="12.5" fill="#ff3017"/><rect x="288" y="72" width="12.5" height="12.5" fill="#ff2613"/><rect x="300" y="72" width="12.5" height="12.5" fill="#ff1e10"/><rect x="312" y="72" width="12.5" height="12.5" fill="#ff180e"/><rect x="324" y="72" width="12.5" height="12.5" fill="#ff130c"/><rect x="336" y="72" width="12.5" height="12.5" fill="#ff0f0a"/><rect x="348" y="72" width="12.5" height="12.5" fill="#ff0b08"/><rect x="360" y="72" width="12.5" height="12.5" fill="#ff0907"/><rect x="372" y="72" width="12.5" height="12.5" fill="#ff0706"/><rect x="384" y="72" width="12.5" height="12.5" fill="#ff0505"/><rect x="396" y="72" width="12.5" height="12.5" fill="#ff0304"/><rect x="408" y="72" width="12.5" height="12.5" fill="#ff0204"/><rect x="420" y="72" width="12.5" height="12.5" fill="#ff0103"/><rect x="432" y="72" width="12.5" height="12.5" fill="#ff0103"/><rect x="444" y="72" width="12.5" height="12.5" fill="#ff0002"/><rect x="456" y="72" width="12.5" height="12.5" fill="#ff0002"/><rect x="468" y="72" width="12.5" height="12.5" fill="#ff0001"/><rect x="480" y="72" width="12.5" height="12.5" fill="#ff0001"/><rect x="492" y="72" width="12.5" height="12.5" fill="#ff0001"/><rect x="504" y="72" width="12.5" height="12.5" fill="#ff0001"/><rect x="516" y="72" width="12.5" height="12.5" fill="#ff0000"/><rect x="84" y="84" width="12.5" height="12.5" fill="#00ff6f"/><rect x="96" y="84" width="12.5" height="12.5" fill="#00ff72"/><rect x="108" y="84" width="12.5" height="12.5" fill="#00ff76"/><rect x="120" y="84" width="12.5" height="12.5" fill="#01ff79"/><rect x="132" y="84" width="12.5" height="12.5" fill="#0bff7d"/><rect x="144" y="84" width="12.5" height="12.5" fill="#1dff81"/><rect x="156" y="84" width="12.5" height="12.5" fill="#37ff86"/><rect x="168" y="84" width="12.5" height="12.5" fill="#5dff8b"/><rect x="180" y="84" width="12.5" height="12.5" fill="#8eff90"/><rect x="192" y="84" width="12.5" height="12.5" fill="#cfff96"/><rect x="204" y="84" width="12.5" height="12.5" fill="#ffe08a"/><rect x="216" y="84" width="12.5" height="12.5" fill="#ffa56b"/><rect x="228" y="84" width="12.5" height="12.5" fill="#ff7c54"/><rect x="240" y="84" width="12.5" height="12.5" fill="#ff5f44"/><rect x="252" y="84" width="12.5" height="12.5" fill="#ff4937"/><rect x="264" y="84" width="12.5" height="12.5" fill="#ff392e"/><rect x="276" y="84" width="12.5" height="12.5" fill="#ff2c26"/><rect x="288" y="84" width="12.5" height="12.5" fill="#ff2320"/><rect x="300" y="84" width="12.5" height="12.5" fill="#ff1b1b"/><rect x="312" y="84" width="12.5" height="12.5" fill="#ff1517"/><rect x="324" y="84" width="12.5" height="12.5" fill="#ff1014"/><rect x="336" y="84" width="12.5" height="12.5" fill="#ff0d11"/><rect x="348" y="84" width="12.5" height="12.5" fill="#ff0a0f"/><rect x="360" y="84" width="12.5" height="12.5" fill="#ff070d"/><rect x="372" y="84" width="12.5" height="12.5" fill="#ff050b"/><rect x="384" y="84" width="12.5" height="12.5" fill="#ff040a"/><rect x="396" y="84" width="12.5" height="12.5" fill="#ff0209"/><rect x="408" y="84" width="12.5" height="12.5" fill="#ff0207"/><rect x="420" y="84" width="12.5" height="12.5" fill="#ff0107"/><rect x="432" y="84" width="12.5" height="12.5" fill="#ff0006"/><rect x="444" y="84" width="12.5" height="12.5" fill="#ff0005"/><rect x="456" y="84" width="12.5" height="12.5" fill="#ff0004"/><rect x="468" y="84" width="12.5" height="12.5" fill="#ff0004"/><rect x="480" y="84" width="12.5" height="12.5" fill="#ff0003"/><rect x="492" y="84" width="12.5" height="12.5" fill="#ff0003"/><rect x="504" y="84" width="12.5" height="12.5" fill="#ff0002"/><rect x="516" y="84" width="12.5" height="12.5" fill="#ff0002"/><rect x="84" y="96" width="12.5" height="12.5" fill="#00ff9c"/><rect x="96" y="96" width="12.5" height="12.5" fill="#00ffa2"/><rect x="108" y="96" width="12.5" height="12.5" fill="#00ffa7"/><rect x="120" y="96" width="12.5" height="12.5" fill="#00ffae"/><rect x="132" y="96" width="12.5" height="12.5" fill="#09ffb4"/><rect x="144" y="96" width="12.5" height="12.5" fill="#1affbc"/><rect x="156" y="96" width="12.5" height="12.5" fill="#35ffc4"/><rect x="168" y="96" width="12.5" height="12.5" fill="#5cffcd"/><rect x="180" y="96" width="12.5" height="12.5" fill="#90ffd7"/><rect x="192" y="96" width="12.5" height="12.5" fill="#d4ffe2"/><rect x="204" y="96" width="12.5" height="12.5" fill="#ffd8cb"/><rect x="216" y="96" width="12.5" height="12.5" fill="#ff9d9c"/><rect x="228" y="96" width="12.5" height="12.5" fill="#ff757c"/><rect x="240" y="96" width="12.5" height="12.5" fill="#ff5864"/><rect x="252" y="96" width="12.5" height="12.5" fill="#ff4352"/><rect x="264" y="96" width="12.5" height="12.5" fill="#ff3444"/><rect x="276" y="96" width="12.5" height="12.5" fill="#ff2839"/><rect x="288" y="96" width="12.5" height="12.5" fill="#ff1f30"/><rect x="300" y="96" width="12.5" height="12.5" fill="#ff1829"/><rect x="312" y="96" width="12.5" height="12.5" fill="#ff1224"/><rect x="324" y="96" width="12.5" height="12.5" fill="#ff0e1f"/><rect x="336" y="96" width="12.5" height="12.5" fill="#ff0b1b"/><rect x="348" y="96" width="12.5" height="12.5" fill="#ff0817"/><rect x="360" y="96" width="12.5" height="12.5" fill="#ff0615"/><rect x="372" y="96" width="12.5" height="12.5" fill="#ff0412"/><rect x="384" y="96" width="12.5" height="12.5" fill="#ff0310"/><rect x="396" y="96" width="12.5" height="12.5" fill="#ff020e"/><rect x="408" y="96" width="12.5" height="12.5" fill="#ff010c"/><rect x="420" y="96" width="12.5" height="12.5" fill="#ff000b"/><rect x="432" y="96" width="12.5" height="12.5" fill="#ff000a"/><rect x="444" y="96" width="12.5" height="12.5" fill="#ff0009"/><rect x="456" y="96" width="12.5" height="12.5" fill="#ff0008"/><rect x="468" y="96" width="12.5" height="12.5" fill="#ff0007"/><rect x="480" y="96" width="12.5" height="12.5" fill="#ff0006"/><rect x="492" y="96" width="12.5" height="12.5" fill="#ff0005"/><rect x="504" y="96" width="12.5" height="12.5" fill="#ff0005"/><rect x="516" y="96" width="12.5" height="12.5" fill="#ff0004"/><rect x="84" y="108" width="12.5" height="12.5" fill="#00ffd4"/><rect x="96" y="108" width="12.5" height="12.5" fill="#00ffdd"/><rect x="108" y="108" width="12.5" height="12.5" fill="#00ffe6"/><rect x="120" y="108" width="12.5" height="12.5" fill="#00fff0"/><rect x="132" y="108" width="12.5" height="12.5" fill="#07fffb"/><rect x="144" y="108" width="12.5" height="12.5" fill="#16f7ff"/><rect x="156" y="108" width="12.5" height="12.5" fill="#2febff"/><rect x="168" y="108" width="12.5" height="12.5" fill="#4fdfff"/><rect x="180" y="108" width="12.5" height="12.5" fill="#78d3ff"/><rect x="192" y="108" width="12.5" height="12.5" fill="#aac7ff"/><rect x="204" y="108" width="12.5" height="12.5" fill="#e5baff"/><rect x="216" y="108" width="12.5" height="12.5" fill="#ff95da"/><rect x="228" y="108" width="12.5" height="12.5" fill="#ff6eac"/><rect x="240" y="108" width="12.5" height="12.5" fill="#ff528b"/><rect x="252" y="108" width="12.5" height="12.5" fill="#ff3e72"/><rect x="264" y="108" width="12.5" height="12.5" fill="#ff2f5f"/><rect x="276" y="108" width="12.5" height="12.5" fill="#ff2450"/><rect x="288" y="108" width="12.5" height="12.5" fill="#ff1b44"/><rect x="300" y="108" width="12.5" height="12.5" fill="#ff153a"/><rect x="312" y="108" width="12.5" height="12.5" fill="#ff1032"/><rect x="324" y="108" width="12.5" height="12.5" fill="#ff0c2c"/><rect x="336" y="108" width="12.5" height="12.5" fill="#ff0926"/><rect x="348" y="108" width="12.5" height="12.5" fill="#ff0622"/><rect x="360" y="108" width="12.5" height="12.5" fill="#ff041e"/><rect x="372" y="108" width="12.5" height="12.5" fill="#ff031a"/><rect x="384" y="108" width="12.5" height="12.5" fill="#ff0217"/><rect x="396" y="108" width="12.5" height="12.5" fill="#ff0115"/><rect x="408" y="108" width="12.5" height="12.5" fill="#ff0013"/><rect x="420" y="108" width="12.5" height="12.5" fill="#ff0011"/><rect x="432" y="108" width="12.5" height="12.5" fill="#ff000f"/><rect x="444" y="108" width="12.5" height="12.5" fill="#ff000d"/><rect x="456" y="108" width="12.5" height="12.5" fill="#ff000c"/><rect x="468" y="108" width="12.5" height="12.5" fill="#ff000b"/><rect x="480" y="108" width="12.5" height="12.5" fill="#ff000a"/><rect x="492" y="108" width="12.5" height="12.5" fill="#ff0009"/><rect x="504" y="108" width="12.5" height="12.5" fill="#ff0008"/><rect x="516" y="108" width="12.5" height="12.5" fill="#ff0007"/><rect x="84" y="120" width="12.5" height="12.5" fill="#00e7ff"/><rect x="96" y="120" width="12.5" height="12.5" fill="#00ddff"/><rect x="108" y="120" width="12.5" height="12.5" fill="#00d3ff"/><rect x="120" y="120" width="12.5" height="12.5" fill="#00c9ff"/><rect x="132" y="120" width="12.5" height="12.5" fill="#03bfff"/><rect x="144" y="120" width="12.5" height="12.5" fill="#0eb5ff"/><rect x="156" y="120" width="12.5" height="12.5" fill="#20abff"/><rect x="168" y="120" width="12.5" height="12.5" fill="#38a2ff"/><rect x="180" y="120" width="12.5" height="12.5" fill="#5798ff"/><rect x="192" y="120" width="12.5" height="12.5" fill="#7d8eff"/><rect x="204" y="120" width="12.5" height="12.5" fill="#a984ff"/><rect x="216" y="120" width="12.5" height="12.5" fill="#dd7aff"/><rect x="228" y="120" width="12.5" height="12.5" fill="#ff66e6"/><rect x="240" y="120" width="12.5" height="12.5" fill="#ff4bba"/><rect x="252" y="120" width="12.5" height="12.5" fill="#ff3898"/><rect x="264" y="120" width="12.5" height="12.5" fill="#ff2a7f"/><rect x="276" y="120" width="12.5" height="12.5" fill="#ff206b"/><rect x="288" y="120" width="12.5" height="12.5" fill="#ff185b"/><rect x="300" y="120" width="12.5" height="12.5" fill="#ff124f"/><rect x="312" y="120" width="12.5" height="12.5" fill="#ff0d44"/><rect x="324" y="120" width="12.5" height="12.5" fill="#ff0a3b"/><rect x="336" y="120" width="12.5" height="12.5" fill="#ff0734"/><rect x="348" y="120" width="12.5" height="12.5" fill="#ff052e"/><rect x="360" y="120" width="12.5" height="12.5" fill="#ff0329"/><rect x="372" y="120" width="12.5" height="12.5" fill="#ff0224"/><rect x="384" y="120" width="12.5" height="12.5" fill="#ff0120"/><rect x="396" y="120" width="12.5" height="12.5" fill="#ff001d"/><rect x="408" y="120" width="12.5" height="12.5" fill="#ff001a"/><rect x="420" y="120" width="12.5" height="12.5" fill="#ff0017"/><rect x="432" y="120" width="12.5" height="12.5" fill="#ff0015"/><rect x="444" y="120" width="12.5" height="12.5" fill="#ff0013"/><rect x="456" y="120" width="12.5" height="12.5" fill="#ff0011"/><rect x="468" y="120" width="12.5" height="12.5" fill="#ff0010"/><rect x="480" y="120" width="12.5" height="12.5" fill="#ff000e"/><rect x="492" y="120" width="12.5" height="12.5" fill="#ff000d"/><rect x="504" y="120" width="12.5" height="12.5" fill="#ff000c"/><rect x="516" y="120" width="12.5" height="12.5" fill="#ff000b"/><rect x="84" y="132" width="12.5" height="12.5" fill="#00b2ff"/><rect x="96" y="132" width="12.5" height="12.5" fill="#00a9ff"/><rect x="108" y="132" width="12.5" height="12.5" fill="#00a1ff"/><rect x="120" y="132" width="12.5" height="12.5" fill="#0099ff"/><rect x="132" y="132" width="12.5" height="12.5" fill="#0190ff"/><rect x="144" y="132" width="12.5" height="12.5" fill="#0988ff"/><rect x="156" y="132" width="12.5" height="12.5" fill="#1680ff"/><rect x="168" y="132" width="12.5" height="12.5" fill="#2978ff"/><rect x="180" y="132" width="12.5" height="12.5" fill="#4170ff"/><rect x="192" y="132" width="12.5" height="12.5" fill="#5e68ff"/><rect x="204" y="132" width="12.5" height="12.5" fill="#8160ff"/><rect x="216" y="132" width="12.5" height="12.5" fill="#a958ff"/><rect x="228" y="132" width="12.5" height="12.5" fill="#d850ff"/><rect x="240" y="132" width="12.5" height="12.5" fill="#ff45f1"/><rect x="252" y="132" width="12.5" height="12.5" fill="#ff33c6"/><rect x="264" y="132" width="12.5" height="12.5" fill="#ff25a5"/><rect x="276" y="132" width="12.5" height="12.5" fill="#ff1c8b"/><rect x="288" y="132" width="12.5" height="12.5" fill="#ff1477"/><rect x="300" y="132" width="12.5" height="12.5" fill="#ff0f66"/><rect x="312" y="132" width="12.5" height="12.5" fill="#ff0b59"/><rect x="324" y="132" width="12.5" height="12.5" fill="#ff084d"/><rect x="336" y="132" width="12.5" height="12.5" fill="#ff0544"/><rect x="348" y="132" width="12.5" height="12.5" fill="#ff033c"/><rect x="360" y="132" width="12.5" height="12.5" fill="#ff0235"/><rect x="372" y="132" width="12.5" height="12.5" fill="#ff0130"/><rect x="384" y="132" width="12.5" height="12.5" fill="#ff002b"/><rect x="396" y="132" width="12.5" height="12.5" fill="#ff0026"/><rect x="408" y="132" width="12.5" height="12.5" fill="#ff0023"/><rect x="420" y="132" width="12.5" height="12.5" fill="#ff001f"/><rect x="432" y="132" width="12.5" height="12.5" fill="#ff001c"/><rect x="444" y="132" width="12.5" height="12.5" fill="#ff001a"/><rect x="456" y="132" width="12.5" height="12.5" fill="#ff0017"/><rect x="468" y="132" width="12.5" height="12.5" fill="#ff0015"/><rect x="480" y="132" width="12.5" height="12.5" fill="#ff0014"/><rect x="492" y="132" width="12.5" height="12.5" fill="#ff0012"/><rect x="504" y="132" width="12.5" height="12.5" fill="#ff0010"/><rect x="516" y="132" width="12.5" height="12.5" fill="#ff000f"/><rect x="84" y="144" width="12.5" height="12.5" fill="#008bff"/><rect x="96" y="144" width="12.5" height="12.5" fill="#0084ff"/><rect x="108" y="144" width="12.5" height="12.5" fill="#007dff"/><rect x="120" y="144" width="12.5" height="12.5" fill="#0076ff"/><rect x="132" y="144" width="12.5" height="12.5" fill="#006fff"/><rect x="144" y="144" width="12.5" height="12.5" fill="#0668ff"/><rect x="156" y="144" width="12.5" height="12.5" fill="#1061ff"/><rect x="168" y="144" width="12.5" height="12.5" fill="#1e5aff"/><rect x="180" y="144" width="12.5" height="12.5" fill="#3153ff"/><rect x="192" y="144" width="12.5" height="12.5" fill="#484dff"/><rect x="204" y="144" width="12.5" height="12.5" fill="#6446ff"/><rect x="216" y="144" width="12.5" height="12.5" fill="#8440ff"/><rect x="228" y="144" width="12.5" height="12.5" fill="#a93aff"/><rect x="240" y="144" width="12.5" height="12.5" fill="#d334ff"/><rect x="252" y="144" width="12.5" height="12.5" fill="#ff2dfb"/><rect x="264" y="144" width="12.5" height="12.5" fill="#ff21d1"/><rect x="276" y="144" width="12.5" height="12.5" fill="#ff18b0"/><rect x="288" y="144" width="12.5" height="12.5" fill="#ff1196"/><rect x="300" y="144" width="12.5" height="12.5" fill="#ff0c81"/><rect x="312" y="144" width="12.5" height="12.5" fill="#ff0970"/><rect x="324" y="144" width="12.5" height="12.5" fill="#ff0662"/><rect x="336" y="144" width="12.5" height="12.5" fill="#ff0456"/><rect x="348" y="144" width="12.5" height="12.5" fill="#ff024d"/><rect x="360" y="144" width="12.5" height="12.5" fill="#ff0144"/><rect x="372" y="144" width="12.5" height="12.5" fill="#ff003d"/><rect x="384" y="144" width="12.5" height="12.5" fill="#ff0037"/><rect x="396" y="144" width="12.5" height="12.5" fill="#ff0031"/><rect x="408" y="144" width="12.5" height="12.5" fill="#ff002c"/><rect x="420" y="144" width="12.5" height="12.5" fill="#ff0028"/><rect x="432" y="144" width="12.5" height="12.5" fill="#ff0025"/><rect x="444" y="144" width="12.5" height="12.5" fill="#ff0021"/><rect x="456" y="144" width="12.5" height="12.5" fill="#ff001e"/><rect x="468" y="144" width="12.5" height="12.5" fill="#ff001c"/><rect x="480" y="144" width="12.5" height="12.5" fill="#ff001a"/><rect x="492" y="144" width="12.5" height="12.5" fill="#ff0017"/><rect x="504" y="144" width="12.5" height="12.5" fill="#ff0016"/><rect x="516" y="144" width="12.5" height="12.5" fill="#ff0014"/><rect x="84" y="156" width="12.5" height="12.5" fill="#006eff"/><rect x="96" y="156" width="12.5" height="12.5" fill="#0068ff"/><rect x="108" y="156" width="12.5" height="12.5" fill="#0062ff"/><rect x="120" y="156" width="12.5" height="12.5" fill="#005cff"/><rect x="132" y="156" width="12.5" height="12.5" fill="#0056ff"/><rect x="144" y="156" width="12.5" height="12.5" fill="#0350ff"/><rect x="156" y="156" width="12.5" height="12.5" fill="#0b4aff"/><rect x="168" y="156" width="12.5" height="12.5" fill="#1644ff"/><rect x="180" y="156" width="12.5" height="12.5" fill="#253fff"/><rect x="192" y="156" width="12.5" height="12.5" fill="#3839ff"/><rect x="204" y="156" width="12.5" height="12.5" fill="#4f34ff"/><rect x="216" y="156" width="12.5" height="12.5" fill="#692fff"/><rect x="228" y="156" width="12.5" height="12.5" fill="#872aff"/><rect x="240" y="156" width="12.5" height="12.5" fill="#a925ff"/><rect x="252" y="156" width="12.5" height="12.5" fill="#cf20ff"/><rect x="264" y="156" width="12.5" height="12.5" fill="#fa1cff"/><rect x="276" y="156" width="12.5" height="12.5" fill="#ff14da"/><rect x="288" y="156" width="12.5" height="12.5" fill="#ff0eba"/><rect x="300" y="156" width="12.5" height="12.5" fill="#ff0aa0"/><rect x="312" y="156" width="12.5" height="12.5" fill="#ff068b"/><rect x="324" y="156" width="12.5" height="12.5" fill="#ff047a"/><rect x="336" y="156" width="12.5" height="12.5" fill="#ff026b"/><rect x="348" y="156" width="12.5" height="12.5" fill="#ff015f"/><rect x="360" y="156" width="12.5" height="12.5" fill="#ff0055"/><rect x="372" y="156" width="12.5" height="12.5" fill="#ff004c"/><rect x="384" y="156" width="12.5" height="12.5" fill="#ff0044"/><rect x="396" y="156" width="12.5" height="12.5" fill="#ff003d"/><rect x="408" y="156" width="12.5" height="12.5" fill="#ff0038"/><rect x="420" y="156" width="12.5" height="12.5" fill="#ff0033"/><rect x="432" y="156" width="12.5" height="12.5" fill="#ff002e"/><rect x="444" y="156" width="12.5" height="12.5" fill="#ff002a"/><rect x="456" y="156" width="12.5" height="12.5" fill="#ff0026"/><rect x="468" y="156" width="12.5" height="12.5" fill="#ff0023"/><rect x="480" y="156" width="12.5" height="12.5" fill="#ff0020"/><rect x="492" y="156" width="12.5" height="12.5" fill="#ff001e"/><rect x="504" y="156" width="12.5" height="12.5" fill="#ff001c"/><rect x="516" y="156" width="12.5" height="12.5" fill="#ff0019"/><rect x="84" y="168" width="12.5" height="12.5" fill="#0058ff"/><rect x="96" y="168" width="12.5" height="12.5" fill="#0052ff"/><rect x="108" y="168" width="12.5" height="12.5" fill="#004dff"/><rect x="120" y="168" width="12.5" height="12.5" fill="#0048ff"/><rect x="132" y="168" width="12.5" height="12.5" fill="#0043ff"/><rect x="144" y="168" width="12.5" height="12.5" fill="#023eff"/><rect x="156" y="168" width="12.5" height="12.5" fill="#0739ff"/><rect x="168" y="168" width="12.5" height="12.5" fill="#1034ff"/><rect x="180" y="168" width="12.5" height="12.5" fill="#1d30ff"/><rect x="192" y="168" width="12.5" height="12.5" fill="#2c2bff"/><rect x="204" y="168" width="12.5" height="12.5" fill="#3f27ff"/><rect x="216" y="168" width="12.5" height="12.5" fill="#5422ff"/><rect x="228" y="168" width="12.5" height="12.5" fill="#6d1eff"/><rect x="240" y="168" width="12.5" height="12.5" fill="#891aff"/><rect x="252" y="168" width="12.5" height="12.5" fill="#a917ff"/><rect x="264" y="168" width="12.5" height="12.5" fill="#cc13ff"/><rect x="276" y="168" width="12.5" height="12.5" fill="#f310ff"/><rect x="288" y="168" width="12.5" height="12.5" fill="#ff0be3"/><rect x="300" y="168" width="12.5" height="12.5" fill="#ff07c3"/><rect x="312" y="168" width="12.5" height="12.5" fill="#ff05aa"/><rect x="324" y="168" width="12.5" height="12.5" fill="#ff0394"/><rect x="336" y="168" width="12.5" height="12.5" fill="#ff0183"/><rect x="348" y="168" width="12.5" height="12.5" fill="#ff0074"/><rect x="360" y="168" width="12.5" height="12.5" fill="#ff0067"/><rect x="372" y="168" width="12.5" height="12.5" fill="#ff005d"/><rect x="384" y="168" width="12.5" height="12.5" fill="#ff0053"/><rect x="396" y="168" width="12.5" height="12.5" fill="#ff004b"/><rect x="408" y="168" width="12.5" height="12.5" fill="#ff0044"/><rect x="420" y="168" width="12.5" height="12.5" fill="#ff003e"/><rect x="432" y="168" width="12.5" height="12.5" fill="#ff0039"/><rect x="444" y="168" width="12.5" height="12.5" fill="#ff0034"/><rect x="456" y="168" width="12.5" height="12.5" fill="#ff002f"/><rect x="468" y="168" width="12.5" height="12.5" fill="#ff002c"/><rect x="480" y="168" width="12.5" height="12.5" fill="#ff0028"/><rect x="492" y="168" width="12.5" height="12.5" fill="#ff0025"/><rect x="504" y="168" width="12.5" height="12.5" fill="#ff0022"/><rect x="516" y="168" width="12.5" height="12.5" fill="#ff0020"/><rect x="84" y="180" width="12.5" height="12.5" fill="#0046ff"/><rect x="96" y="180" width="12.5" height="12.5" fill="#0042ff"/><rect x="108" y="180" width="12.5" height="12.5" fill="#003dff"/><rect x="120" y="180" width="12.5" height="12.5" fill="#0039ff"/><rect x="132" y="180" width="12.5" height="12.5" fill="#0034ff"/><rect x="144" y="180" width="12.5" height="12.5" fill="#0130ff"/><rect x="156" y="180" width="12.5" height="12.5" fill="#052cff"/><rect x="168" y="180" width="12.5" height="12.5" fill="#0c28ff"/><rect x="180" y="180" width="12.5" height="12.5" fill="#1624ff"/><rect x="192" y="180" width="12.5" height="12.5" fill="#2320ff"/><rect x="204" y="180" width="12.5" height="12.5" fill="#321dff"/><rect x="216" y="180" width="12.5" height="12.5" fill="#4419ff"/><rect x="228" y="180" width="12.5" height="12.5" fill="#5916ff"/><rect x="240" y="180" width="12.5" height="12.5" fill="#7113ff"/><rect x="252" y="180" width="12.5" height="12.5" fill="#8b10ff"/><rect x="264" y="180" width="12.5" height="12.5" fill="#a90dff"/><rect x="276" y="180" width="12.5" height="12.5" fill="#c90aff"/><rect x="288" y="180" width="12.5" height="12.5" fill="#ed08ff"/><rect x="300" y="180" width="12.5" height="12.5" fill="#ff05eb"/><rect x="312" y="180" width="12.5" height="12.5" fill="#ff03cc"/><rect x="324" y="180" width="12.5" height="12.5" fill="#ff01b2"/><rect x="336" y="180" width="12.5" height="12.5" fill="#ff009d"/><rect x="348" y="180" width="12.5" height="12.5" fill="#ff008b"/><rect x="360" y="180" width="12.5" height="12.5" fill="#ff007c"/><rect x="372" y="180" width="12.5" height="12.5" fill="#ff006f"/><rect x="384" y="180" width="12.5" height="12.5" fill="#ff0064"/><rect x="396" y="180" width="12.5" height="12.5" fill="#ff005b"/><rect x="408" y="180" width="12.5" height="12.5" fill="#ff0052"/><rect x="420" y="180" width="12.5" height="12.5" fill="#ff004b"/><rect x="432" y="180" width="12.5" height="12.5" fill="#ff0044"/><rect x="444" y="180" width="12.5" height="12.5" fill="#ff003e"/><rect x="456" y="180" width="12.5" height="12.5" fill="#ff0039"/><rect x="468" y="180" width="12.5" height="12.5" fill="#ff0035"/><rect x="480" y="180" width="12.5" height="12.5" fill="#ff0031"/><rect x="492" y="180" width="12.5" height="12.5" fill="#ff002d"/><rect x="504" y="180" width="12.5" height="12.5" fill="#ff002a"/><rect x="516" y="180" width="12.5" height="12.5" fill="#ff0026"/><rect x="84" y="192" width="12.5" height="12.5" fill="#0039ff"/><rect x="96" y="192" width="12.5" height="12.5" fill="#0035ff"/><rect x="108" y="192" width="12.5" height="12.5" fill="#0031ff"/><rect x="120" y="192" width="12.5" height="12.5" fill="#002dff"/><rect x="132" y="192" width="12.5" height="12.5" fill="#0029ff"/><rect x="144" y="192" width="12.5" height="12.5" fill="#0026ff"/><rect x="156" y="192" width="12.5" height="12.5" fill="#0322ff"/><rect x="168" y="192" width="12.5" height="12.5" fill="#091fff"/><rect x="180" y="192" width="12.5" height="12.5" fill="#111bff"/><rect x="192" y="192" width="12.5" height="12.5" fill="#1c18ff"/><rect x="204" y="192" width="12.5" height="12.5" fill="#2915ff"/><rect x="216" y="192" width="12.5" height="12.5" fill="#3812ff"/><rect x="228" y="192" width="12.5" height="12.5" fill="#4a10ff"/><rect x="240" y="192" width="12.5" height="12.5" fill="#5e0dff"/><rect x="252" y="192" width="12.5" height="12.5" fill="#740bff"/><rect x="264" y="192" width="12.5" height="12.5" fill="#8d08ff"/><rect x="276" y="192" width="12.5" height="12.5" fill="#a906ff"/><rect x="288" y="192" width="12.5" height="12.5" fill="#c704ff"/><rect x="300" y="192" width="12.5" height="12.5" fill="#e803ff"/><rect x="312" y="192" width="12.5" height="12.5" fill="#ff01f2"/><rect x="324" y="192" width="12.5" height="12.5" fill="#ff00d4"/><rect x="336" y="192" width="12.5" height="12.5" fill="#ff00ba"/><rect x="348" y="192" width="12.5" height="12.5" fill="#ff00a5"/><rect x="360" y="192" width="12.5" height="12.5" fill="#ff0093"/><rect x="372" y="192" width="12.5" height="12.5" fill="#ff0084"/><rect x="384" y="192" width="12.5" height="12.5" fill="#ff0077"/><rect x="396" y="192" width="12.5" height="12.5" fill="#ff006b"/><rect x="408" y="192" width="12.5" height="12.5" fill="#ff0062"/><rect x="420" y="192" width="12.5" height="12.5" fill="#ff0059"/><rect x="432" y="192" width="12.5" height="12.5" fill="#ff0051"/><rect x="444" y="192" width="12.5" height="12.5" fill="#ff004a"/><rect x="456" y="192" width="12.5" height="12.5" fill="#ff0044"/><rect x="468" y="192" width="12.5" height="12.5" fill="#ff003f"/><rect x="480" y="192" width="12.5" height="12.5" fill="#ff003a"/><rect x="492" y="192" width="12.5" height="12.5" fill="#ff0036"/><rect x="504" y="192" width="12.5" height="12.5" fill="#ff0032"/><rect x="516" y="192" width="12.5" height="12.5" fill="#ff002e"/><rect x="84" y="204" width="12.5" height="12.5" fill="#002eff"/><rect x="96" y="204" width="12.5" height="12.5" fill="#002aff"/><rect x="108" y="204" width="12.5" height="12.5" fill="#0027ff"/><rect x="120" y="204" width="12.5" height="12.5" fill="#0024ff"/><rect x="132" y="204" width="12.5" height="12.5" fill="#0021ff"/><rect x="144" y="204" width="12.5" height="12.5" fill="#001dff"/><rect x="156" y="204" width="12.5" height="12.5" fill="#021aff"/><rect x="168" y="204" width="12.5" height="12.5" fill="#0618ff"/><rect x="180" y="204" width="12.5" height="12.5" fill="#0d15ff"/><rect x="192" y="204" width="12.5" height="12.5" fill="#1612ff"/><rect x="204" y="204" width="12.5" height="12.5" fill="#2110ff"/><rect x="216" y="204" width="12.5" height="12.5" fill="#2e0dff"/><rect x="228" y="204" width="12.5" height="12.5" fill="#3d0bff"/><rect x="240" y="204" width="12.5" height="12.5" fill="#4e09ff"/><rect x="252" y="204" width="12.5" height="12.5" fill="#6207ff"/><rect x="264" y="204" width="12.5" height="12.5" fill="#7705ff"/><rect x="276" y="204" width="12.5" height="12.5" fill="#8f04ff"/><rect x="288" y="204" width="12.5" height="12.5" fill="#a902ff"/><rect x="300" y="204" width="12.5" height="12.5" fill="#c501ff"/><rect x="312" y="204" width="12.5" height="12.5" fill="#e300ff"/><rect x="324" y="204" width="12.5" height="12.5" fill="#ff00f9"/><rect x="336" y="204" width="12.5" height="12.5" fill="#ff00db"/><rect x="348" y="204" width="12.5" height="12.5" fill="#ff00c2"/><rect x="360" y="204" width="12.5" height="12.5" fill="#ff00ad"/><rect x="372" y="204" width="12.5" height="12.5" fill="#ff009b"/><rect x="384" y="204" width="12.5" height="12.5" fill="#ff008b"/><rect x="396" y="204" width="12.5" height="12.5" fill="#ff007e"/><rect x="408" y="204" width="12.5" height="12.5" fill="#ff0072"/><rect x="420" y="204" width="12.5" height="12.5" fill="#ff0068"/><rect x="432" y="204" width="12.5" height="12.5" fill="#ff005f"/><rect x="444" y="204" width="12.5" height="12.5" fill="#ff0057"/><rect x="456" y="204" width="12.5" height="12.5" fill="#ff0050"/><rect x="468" y="204" width="12.5" height="12.5" fill="#ff004a"/><rect x="480" y="204" width="12.5" height="12.5" fill="#ff0044"/><rect x="492" y="204" width="12.5" height="12.5" fill="#ff003f"/><rect x="504" y="204" width="12.5" height="12.5" fill="#ff003b"/><rect x="516" y="204" width="12.5" height="12.5" fill="#ff0036"/><rect x="84" y="216" width="12.5" height="12.5" fill="#0025ff"/><rect x="96" y="216" width="12.5" height="12.5" fill="#0022ff"/><rect x="108" y="216" width="12.5" height="12.5" fill="#001fff"/><rect x="120" y="216" width="12.5" height="12.5" fill="#001cff"/><rect x="132" y="216" width="12.5" height="12.5" fill="#001aff"/><rect x="144" y="216" width="12.5" height="12.5" fill="#0017ff"/><rect x="156" y="216" width="12.5" height="12.5" fill="#0114ff"/><rect x="168" y="216" width="12.5" height="12.5" fill="#0512ff"/><rect x="180" y="216" width="12.5" height="12.5" fill="#0a10ff"/><rect x="192" y="216" width="12.5" height="12.5" fill="#120dff"/><rect x="204" y="216" width="12.5" height="12.5" fill="#1b0bff"/><rect x="216" y="216" width="12.5" height="12.5" fill="#2609ff"/><rect x="228" y="216" width="12.5" height="12.5" fill="#3307ff"/><rect x="240" y="216" width="12.5" height="12.5" fill="#4206ff"/><rect x="252" y="216" width="12.5" height="12.5" fill="#5304ff"/><rect x="264" y="216" width="12.5" height="12.5" fill="#6503ff"/><rect x="276" y="216" width="12.5" height="12.5" fill="#7a02ff"/><rect x="288" y="216" width="12.5" height="12.5" fill="#9001ff"/><rect x="300" y="216" width="12.5" height="12.5" fill="#a900ff"/><rect x="312" y="216" width="12.5" height="12.5" fill="#c300ff"/><rect x="324" y="216" width="12.5" height="12.5" fill="#e000ff"/><rect x="336" y="216" width="12.5" height="12.5" fill="#fe00ff"/><rect x="348" y="216" width="12.5" height="12.5" fill="#ff00e1"/><rect x="360" y="216" width="12.5" height="12.5" fill="#ff00c9"/><rect x="372" y="216" width="12.5" height="12.5" fill="#ff00b4"/><rect x="384" y="216" width="12.5" height="12.5" fill="#ff00a2"/><rect x="396" y="216" width="12.5" height="12.5" fill="#ff0092"/><rect x="408" y="216" width="12.5" height="12.5" fill="#ff0085"/><rect x="420" y="216" width="12.5" height="12.5" fill="#ff0079"/><rect x="432" y="216" width="12.5" height="12.5" fill="#ff006f"/><rect x="444" y="216" width="12.5" height="12.5" fill="#ff0066"/><rect x="456" y="216" width="12.5" height="12.5" fill="#ff005d"/><rect x="468" y="216" width="12.5" height="12.5" fill="#ff0056"/><rect x="480" y="216" width="12.5" height="12.5" fill="#ff004f"/><rect x="492" y="216" width="12.5" height="12.5" fill="#ff004a"/><rect x="504" y="216" width="12.5" height="12.5" fill="#ff0044"/><rect x="516" y="216" width="12.5" height="12.5" fill="#ff003f"/><rect x="84" y="228" width="12.5" height="12.5" fill="#001eff"/><rect x="96" y="228" width="12.5" height="12.5" fill="#001bff"/><rect x="108" y="228" width="12.5" height="12.5" fill="#0019ff"/><rect x="120" y="228" width="12.5" height="12.5" fill="#0016ff"/><rect x="132" y="228" width="12.5" height="12.5" fill="#0014ff"/><rect x="144" y="228" width="12.5" height="12.5" fill="#0012ff"/><rect x="156" y="228" width="12.5" height="12.5" fill="#0010ff"/><rect x="168" y="228" width="12.5" height="12.5" fill="#030eff"/><rect x="180" y="228" width="12.5" height="12.5" fill="#080cff"/><rect x="192" y="228" width="12.5" height="12.5" fill="#0e0aff"/><rect x="204" y="228" width="12.5" height="12.5" fill="#1608ff"/><rect x="216" y="228" width="12.5" height="12.5" fill="#2006ff"/><rect x="228" y="228" width="12.5" height="12.5" fill="#2b05ff"/><rect x="240" y="228" width="12.5" height="12.5" fill="#3804ff"/><rect x="252" y="228" width="12.5" height="12.5" fill="#4602ff"/><rect x="264" y="228" width="12.5" height="12.5" fill="#5701ff"/><rect x="276" y="228" width="12.5" height="12.5" fill="#6801ff"/><rect x="288" y="228" width="12.5" height="12.5" fill="#7c00ff"/><rect x="300" y="228" width="12.5" height="12.5" fill="#9100ff"/><rect x="312" y="228" width="12.5" height="12.5" fill="#a900ff"/><rect x="324" y="228" width="12.5" height="12.5" fill="#c200ff"/><rect x="336" y="228" width="12.5" height="12.5" fill="#dc00ff"/><rect x="348" y="228" width="12.5" height="12.5" fill="#f900ff"/><rect x="360" y="228" width="12.5" height="12.5" fill="#ff00e8"/><rect x="372" y="228" width="12.5" height="12.5" fill="#ff00cf"/><rect x="384" y="228" width="12.5" height="12.5" fill="#ff00bb"/><rect x="396" y="228" width="12.5" height="12.5" fill="#ff00a9"/><rect x="408" y="228" width="12.5" height="12.5" fill="#ff0099"/><rect x="420" y="228" width="12.5" height="12.5" fill="#ff008b"/><rect x="432" y="228" width="12.5" height="12.5" fill="#ff0080"/><rect x="444" y="228" width="12.5" height="12.5" fill="#ff0075"/><rect x="456" y="228" width="12.5" height="12.5" fill="#ff006c"/><rect x="468" y="228" width="12.5" height="12.5" fill="#ff0063"/><rect x="480" y="228" width="12.5" height="12.5" fill="#ff005c"/><rect x="492" y="228" width="12.5" height="12.5" fill="#ff0055"/><rect x="504" y="228" width="12.5" height="12.5" fill="#ff004f"/><rect x="516" y="228" width="12.5" height="12.5" fill="#ff0049"/><rect x="84" y="240" width="12.5" height="12.5" fill="#0018ff"/><rect x="96" y="240" width="12.5" height="12.5" fill="#0016ff"/><rect x="108" y="240" width="12.5" height="12.5" fill="#0014ff"/><rect x="120" y="240" width="12.5" height="12.5" fill="#0012ff"/><rect x="132" y="240" width="12.5" height="12.5" fill="#0010ff"/><rect x="144" y="240" width="12.5" height="12.5" fill="#000eff"/><rect x="156" y="240" width="12.5" height="12.5" fill="#000cff"/><rect x="168" y="240" width="12.5" height="12.5" fill="#020aff"/><rect x="180" y="240" width="12.5" height="12.5" fill="#0608ff"/><rect x="192" y="240" width="12.5" height="12.5" fill="#0b07ff"/><rect x="204" y="240" width="12.5" height="12.5" fill="#1205ff"/><rect x="216" y="240" width="12.5" height="12.5" fill="#1a04ff"/><rect x="228" y="240" width="12.5" height="12.5" fill="#2403ff"/><rect x="240" y="240" width="12.5" height="12.5" fill="#2f02ff"/><rect x="252" y="240" width="12.5" height="12.5" fill="#3c01ff"/><rect x="264" y="240" width="12.5" height="12.5" fill="#4a00ff"/><rect x="276" y="240" width="12.5" height="12.5" fill="#5a00ff"/><rect x="288" y="240" width="12.5" height="12.5" fill="#6b00ff"/><rect x="300" y="240" width="12.5" height="12.5" fill="#7e00ff"/><rect x="312" y="240" width="12.5" height="12.5" fill="#9300ff"/><rect x="324" y="240" width="12.5" height="12.5" fill="#a900ff"/><rect x="336" y="240" width="12.5" height="12.5" fill="#c000ff"/><rect x="348" y="240" width="12.5" height="12.5" fill="#d900ff"/><rect x="360" y="240" width="12.5" height="12.5" fill="#f400ff"/><rect x="372" y="240" width="12.5" height="12.5" fill="#ff00ed"/><rect x="384" y="240" width="12.5" height="12.5" fill="#ff00d5"/><rect x="396" y="240" width="12.5" height="12.5" fill="#ff00c1"/><rect x="408" y="240" width="12.5" height="12.5" fill="#ff00af"/><rect x="420" y="240" width="12.5" height="12.5" fill="#ff009f"/><rect x="432" y="240" width="12.5" height="12.5" fill="#ff0092"/><rect x="444" y="240" width="12.5" height="12.5" fill="#ff0086"/><rect x="456" y="240" width="12.5" height="12.5" fill="#ff007b"/><rect x="468" y="240" width="12.5" height="12.5" fill="#ff0071"/><rect x="480" y="240" width="12.5" height="12.5" fill="#ff0069"/><rect x="492" y="240" width="12.5" height="12.5" fill="#ff0061"/><rect x="504" y="240" width="12.5" height="12.5" fill="#ff005a"/><rect x="516" y="240" width="12.5" height="12.5" fill="#ff0054"/><rect x="84" y="252" width="12.5" height="12.5" fill="#0013ff"/><rect x="96" y="252" width="12.5" height="12.5" fill="#0011ff"/><rect x="108" y="252" width="12.5" height="12.5" fill="#0010ff"/><rect x="120" y="252" width="12.5" height="12.5" fill="#000eff"/><rect x="132" y="252" width="12.5" height="12.5" fill="#000cff"/><rect x="144" y="252" width="12.5" height="12.5" fill="#000aff"/><rect x="156" y="252" width="12.5" height="12.5" fill="#0009ff"/><rect x="168" y="252" width="12.5" height="12.5" fill="#0107ff"/><rect x="180" y="252" width="12.5" height="12.5" fill="#0406ff"/><rect x="192" y="252" width="12.5" height="12.5" fill="#0905ff"/><rect x="204" y="252" width="12.5" height="12.5" fill="#0f03ff"/><rect x="216" y="252" width="12.5" height="12.5" fill="#1602ff"/><rect x="228" y="252" width="12.5" height="12.5" fill="#1f02ff"/><rect x="240" y="252" width="12.5" height="12.5" fill="#2901ff"/><rect x="252" y="252" width="12.5" height="12.5" fill="#3400ff"/><rect x="264" y="252" width="12.5" height="12.5" fill="#4000ff"/><rect x="276" y="252" width="12.5" height="12.5" fill="#4e00ff"/><rect x="288" y="252" width="12.5" height="12.5" fill="#5d00ff"/><rect x="300" y="252" width="12.5" height="12.5" fill="#6e00ff"/><rect x="312" y="252" width="12.5" height="12.5" fill="#8000ff"/><rect x="324" y="252" width="12.5" height="12.5" fill="#9400ff"/><rect x="336" y="252" width="12.5" height="12.5" fill="#a800ff"/><rect x="348" y="252" width="12.5" height="12.5" fill="#bf00ff"/><rect x="360" y="252" width="12.5" height="12.5" fill="#d700ff"/><rect x="372" y="252" width="12.5" height="12.5" fill="#f000ff"/><rect x="384" y="252" width="12.5" height="12.5" fill="#ff00f3"/><rect x="396" y="252" width="12.5" height="12.5" fill="#ff00db"/><rect x="408" y="252" width="12.5" height="12.5" fill="#ff00c7"/><rect x="420" y="252" width="12.5" height="12.5" fill="#ff00b5"/><rect x="432" y="252" width="12.5" height="12.5" fill="#ff00a5"/><rect x="444" y="252" width="12.5" height="12.5" fill="#ff0098"/><rect x="456" y="252" width="12.5" height="12.5" fill="#ff008c"/><rect x="468" y="252" width="12.5" height="12.5" fill="#ff0081"/><rect x="480" y="252" width="12.5" height="12.5" fill="#ff0077"/><rect x="492" y="252" width="12.5" height="12.5" fill="#ff006e"/><rect x="504" y="252" width="12.5" height="12.5" fill="#ff0066"/><rect x="516" y="252" width="12.5" height="12.5" fill="#ff005f"/><rect x="84" y="264" width="12.5" height="12.5" fill="#0010ff"/><rect x="96" y="264" width="12.5" height="12.5" fill="#000eff"/><rect x="108" y="264" width="12.5" height="12.5" fill="#000cff"/><rect x="120" y="264" width="12.5" height="12.5" fill="#000bff"/><rect x="132" y="264" width="12.5" height="12.5" fill="#0009ff"/><rect x="144" y="264" width="12.5" height="12.5" fill="#0008ff"/><rect x="156" y="264" width="12.5" height="12.5" fill="#0006ff"/><rect x="168" y="264" width="12.5" height="12.5" fill="#0105ff"/><rect x="180" y="264" width="12.5" height="12.5" fill="#0304ff"/><rect x="192" y="264" width="12.5" height="12.5" fill="#0703ff"/><rect x="204" y="264" width="12.5" height="12.5" fill="#0c02ff"/><rect x="216" y="264" width="12.5" height="12.5" fill="#1201ff"/><rect x="228" y="264" width="12.5" height="12.5" fill="#1a01ff"/><rect x="240" y="264" width="12.5" height="12.5" fill="#2300ff"/><rect x="252" y="264" width="12.5" height="12.5" fill="#2d00ff"/><rect x="264" y="264" width="12.5" height="12.5" fill="#3800ff"/><rect x="276" y="264" width="12.5" height="12.5" fill="#4400ff"/><rect x="288" y="264" width="12.5" height="12.5" fill="#5200ff"/><rect x="300" y="264" width="12.5" height="12.5" fill="#6000ff"/><rect x="312" y="264" width="12.5" height="12.5" fill="#7100ff"/><rect x="324" y="264" width="12.5" height="12.5" fill="#8200ff"/><rect x="336" y="264" width="12.5" height="12.5" fill="#9400ff"/><rect x="348" y="264" width="12.5" height="12.5" fill="#a800ff"/><rect x="360" y="264" width="12.5" height="12.5" fill="#be00ff"/><rect x="372" y="264" width="12.5" height="12.5" fill="#d400ff"/><rect x="384" y="264" width="12.5" height="12.5" fill="#ec00ff"/><rect x="396" y="264" width="12.5" height="12.5" fill="#ff00f7"/><rect x="408" y="264" width="12.5" height="12.5" fill="#ff00e0"/><rect x="420" y="264" width="12.5" height="12.5" fill="#ff00cc"/><rect x="432" y="264" width="12.5" height="12.5" fill="#ff00bb"/><rect x="444" y="264" width="12.5" height="12.5" fill="#ff00ab"/><rect x="456" y="264" width="12.5" height="12.5" fill="#ff009d"/><rect x="468" y="264" width="12.5" height="12.5" fill="#ff0091"/><rect x="480" y="264" width="12.5" height="12.5" fill="#ff0086"/><rect x="492" y="264" width="12.5" height="12.5" fill="#ff007c"/><rect x="504" y="264" width="12.5" height="12.5" fill="#ff0074"/><rect x="516" y="264" width="12.5" height="12.5" fill="#ff006c"/><rect x="84" y="276" width="12.5" height="12.5" fill="#000cff"/><rect x="96" y="276" width="12.5" height="12.5" fill="#000bff"/><rect x="108" y="276" width="12.5" height="12.5" fill="#0009ff"/><rect x="120" y="276" width="12.5" height="12.5" fill="#0008ff"/><rect x="132" y="276" width="12.5" height="12.5" fill="#0007ff"/><rect x="144" y="276" width="12.5" height="12.5" fill="#0006ff"/><rect x="156" y="276" width="12.5" height="12.5" fill="#0004ff"/><rect x="168" y="276" width="12.5" height="12.5" fill="#0003ff"/><rect x="180" y="276" width="12.5" height="12.5" fill="#0203ff"/><rect x="192" y="276" width="12.5" height="12.5" fill="#0502ff"/><rect x="204" y="276" width="12.5" height="12.5" fill="#0a01ff"/><rect x="216" y="276" width="12.5" height="12.5" fill="#0f00ff"/><rect x="228" y="276" width="12.5" height="12.5" fill="#1600ff"/><rect x="240" y="276" width="12.5" height="12.5" fill="#1e00ff"/><rect x="252" y="276" width="12.5" height="12.5" fill="#2700ff"/><rect x="264" y="276" width="12.5" height="12.5" fill="#3100ff"/><rect x="276" y="276" width="12.5" height="12.5" fill="#3c00ff"/><rect x="288" y="276" width="12.5" height="12.5" fill="#4800ff"/><rect x="300" y="276" width="12.5" height="12.5" fill="#5500ff"/><rect x="312" y="276" width="12.5" height="12.5" fill="#6300ff"/><rect x="324" y="276" width="12.5" height="12.5" fill="#7300ff"/><rect x="336" y="276" width="12.5" height="12.5" fill="#8300ff"/><rect x="348" y="276" width="12.5" height="12.5" fill="#9500ff"/><rect x="360" y="276" width="12.5" height="12.5" fill="#a800ff"/><rect x="372" y="276" width="12.5" height="12.5" fill="#bd00ff"/><rect x="384" y="276" width="12.5" height="12.5" fill="#d200ff"/><rect x="396" y="276" width="12.5" height="12.5" fill="#e900ff"/><rect x="408" y="276" width="12.5" height="12.5" fill="#ff00fc"/><rect x="420" y="276" width="12.5" height="12.5" fill="#ff00e5"/><rect x="432" y="276" width="12.5" height="12.5" fill="#ff00d2"/><rect x="444" y="276" width="12.5" height="12.5" fill="#ff00c0"/><rect x="456" y="276" width="12.5" height="12.5" fill="#ff00b1"/><rect x="468" y="276" width="12.5" height="12.5" fill="#ff00a3"/><rect x="480" y="276" width="12.5" height="12.5" fill="#ff0097"/><rect x="492" y="276" width="12.5" height="12.5" fill="#ff008c"/><rect x="504" y="276" width="12.5" height="12.5" fill="#ff0082"/><rect x="516" y="276" width="12.5" height="12.5" fill="#ff0079"/><rect x="84" y="288" width="12.5" height="12.5" fill="#000aff"/><rect x="96" y="288" width="12.5" height="12.5" fill="#0008ff"/><rect x="108" y="288" width="12.5" height="12.5" fill="#0007ff"/><rect x="120" y="288" width="12.5" height="12.5" fill="#0006ff"/><rect x="132" y="288" width="12.5" height="12.5" fill="#0005ff"/><rect x="144" y="288" width="12.5" height="12.5" fill="#0004ff"/><rect x="156" y="288" width="12.5" height="12.5" fill="#0003ff"/><rect x="168" y="288" width="12.5" height="12.5" fill="#0002ff"/><rect x="180" y="288" width="12.5" height="12.5" fill="#0101ff"/><rect x="192" y="288" width="12.5" height="12.5" fill="#0401ff"/><rect x="204" y="288" width="12.5" height="12.5" fill="#0800ff"/><rect x="216" y="288" width="12.5" height="12.5" fill="#0d00ff"/><rect x="228" y="288" width="12.5" height="12.5" fill="#1300ff"/><rect x="240" y="288" width="12.5" height="12.5" fill="#1a00ff"/><rect x="252" y="288" width="12.5" height="12.5" fill="#2100ff"/><rect x="264" y="288" width="12.5" height="12.5" fill="#2a00ff"/><rect x="276" y="288" width="12.5" height="12.5" fill="#3400ff"/><rect x="288" y="288" width="12.5" height="12.5" fill="#3f00ff"/><rect x="300" y="288" width="12.5" height="12.5" fill="#4b00ff"/><rect x="312" y="288" width="12.5" height="12.5" fill="#5800ff"/><rect x="324" y="288" width="12.5" height="12.5" fill="#6600ff"/><rect x="336" y="288" width="12.5" height="12.5" fill="#7500ff"/><rect x="348" y="288" width="12.5" height="12.5" fill="#8500ff"/><rect x="360" y="288" width="12.5" height="12.5" fill="#9600ff"/><rect x="372" y="288" width="12.5" height="12.5" fill="#a800ff"/><rect x="384" y="288" width="12.5" height="12.5" fill="#bc00ff"/><rect x="396" y="288" width="12.5" height="12.5" fill="#d000ff"/><rect x="408" y="288" width="12.5" height="12.5" fill="#e600ff"/><rect x="420" y="288" width="12.5" height="12.5" fill="#fd00ff"/><rect x="432" y="288" width="12.5" height="12.5" fill="#ff00ea"/><rect x="444" y="288" width="12.5" height="12.5" fill="#ff00d7"/><rect x="456" y="288" width="12.5" height="12.5" fill="#ff00c5"/><rect x="468" y="288" width="12.5" height="12.5" fill="#ff00b6"/><rect x="480" y="288" width="12.5" height="12.5" fill="#ff00a8"/><rect x="492" y="288" width="12.5" height="12.5" fill="#ff009c"/><rect x="504" y="288" width="12.5" height="12.5" fill="#ff0091"/><rect x="516" y="288" width="12.5" height="12.5" fill="#ff0087"/><rect x="84" y="300" width="12.5" height="12.5" fill="#0008ff"/><rect x="96" y="300" width="12.5" height="12.5" fill="#0006ff"/><rect x="108" y="300" width="12.5" height="12.5" fill="#0005ff"/><rect x="120" y="300" width="12.5" height="12.5" fill="#0004ff"/><rect x="132" y="300" width="12.5" height="12.5" fill="#0003ff"/><rect x="144" y="300" width="12.5" height="12.5" fill="#0003ff"/><rect x="156" y="300" width="12.5" height="12.5" fill="#0002ff"/><rect x="168" y="300" width="12.5" height="12.5" fill="#0001ff"/><rect x="180" y="300" width="12.5" height="12.5" fill="#0101ff"/><rect x="192" y="300" width="12.5" height="12.5" fill="#0300ff"/><rect x="204" y="300" width="12.5" height="12.5" fill="#0600ff"/><rect x="216" y="300" width="12.5" height="12.5" fill="#0b00ff"/><rect x="228" y="300" width="12.5" height="12.5" fill="#1000ff"/><rect x="240" y="300" width="12.5" height="12.5" fill="#1600ff"/><rect x="252" y="300" width="12.5" height="12.5" fill="#1d00ff"/><rect x="264" y="300" width="12.5" height="12.5" fill="#2500ff"/><rect x="276" y="300" width="12.5" height="12.5" fill="#2e00ff"/><rect x="288" y="300" width="12.5" height="12.5" fill="#3800ff"/><rect x="300" y="300" width="12.5" height="12.5" fill="#4200ff"/><rect x="312" y="300" width="12.5" height="12.5" fill="#4e00ff"/><rect x="324" y="300" width="12.5" height="12.5" fill="#5b00ff"/><rect x="336" y="300" width="12.5" height="12.5" fill="#6800ff"/><rect x="348" y="300" width="12.5" height="12.5" fill="#7700ff"/><rect x="360" y="300" width="12.5" height="12.5" fill="#8600ff"/><rect x="372" y="300" width="12.5" height="12.5" fill="#9700ff"/><rect x="384" y="300" width="12.5" height="12.5" fill="#a800ff"/><rect x="396" y="300" width="12.5" height="12.5" fill="#bb00ff"/><rect x="408" y="300" width="12.5" height="12.5" fill="#ce00ff"/><rect x="420" y="300" width="12.5" height="12.5" fill="#e300ff"/><rect x="432" y="300" width="12.5" height="12.5" fill="#f900ff"/><rect x="444" y="300" width="12.5" height="12.5" fill="#ff00ef"/><rect x="456" y="300" width="12.5" height="12.5" fill="#ff00db"/><rect x="468" y="300" width="12.5" height="12.5" fill="#ff00ca"/><rect x="480" y="300" width="12.5" height="12.5" fill="#ff00bb"/><rect x="492" y="300" width="12.5" height="12.5" fill="#ff00ad"/><rect x="504" y="300" width="12.5" height="12.5" fill="#ff00a1"/><rect x="516" y="300" width="12.5" height="12.5" fill="#ff0096"/><rect x="84" y="312" width="12.5" height="12.5" fill="#0006ff"/><rect x="96" y="312" width="12.5" height="12.5" fill="#0005ff"/><rect x="108" y="312" width="12.5" height="12.5" fill="#0004ff"/><rect x="120" y="312" width="12.5" height="12.5" fill="#0003ff"/><rect x="132" y="312" width="12.5" height="12.5" fill="#0002ff"/><rect x="144" y="312" width="12.5" height="12.5" fill="#0002ff"/><rect x="156" y="312" width="12.5" height="12.5" fill="#0001ff"/><rect x="168" y="312" width="12.5" height="12.5" fill="#0000ff"/><rect x="180" y="312" width="12.5" height="12.5" fill="#0000ff"/><rect x="192" y="312" width="12.5" height="12.5" fill="#0200ff"/><rect x="204" y="312" width="12.5" height="12.5" fill="#0500ff"/><rect x="216" y="312" width="12.5" height="12.5" fill="#0900ff"/><rect x="228" y="312" width="12.5" height="12.5" fill="#0d00ff"/><rect x="240" y="312" width="12.5" height="12.5" fill="#1300ff"/><rect x="252" y="312" width="12.5" height="12.5" fill="#1900ff"/><rect x="264" y="312" width="12.5" height="12.5" fill="#2000ff"/><rect x="276" y="312" width="12.5" height="12.5" fill="#2800ff"/><rect x="288" y="312" width="12.5" height="12.5" fill="#3100ff"/><rect x="300" y="312" width="12.5" height="12.5" fill="#3b00ff"/><rect x="312" y="312" width="12.5" height="12.5" fill="#4600ff"/><rect x="324" y="312" width="12.5" height="12.5" fill="#5100ff"/><rect x="336" y="312" width="12.5" height="12.5" fill="#5d00ff"/><rect x="348" y="312" width="12.5" height="12.5" fill="#6b00ff"/><rect x="360" y="312" width="12.5" height="12.5" fill="#7900ff"/><rect x="372" y="312" width="12.5" height="12.5" fill="#8800ff"/><rect x="384" y="312" width="12.5" height="12.5" fill="#9700ff"/><rect x="396" y="312" width="12.5" height="12.5" fill="#a800ff"/><rect x="408" y="312" width="12.5" height="12.5" fill="#ba00ff"/><rect x="420" y="312" width="12.5" height="12.5" fill="#cd00ff"/><rect x="432" y="312" width="12.5" height="12.5" fill="#e000ff"/><rect x="444" y="312" width="12.5" height="12.5" fill="#f500ff"/><rect x="456" y="312" width="12.5" height="12.5" fill="#ff00f3"/><rect x="468" y="312" width="12.5" height="12.5" fill="#ff00e0"/><rect x="480" y="312" width="12.5" height="12.5" fill="#ff00cf"/><rect x="492" y="312" width="12.5" height="12.5" fill="#ff00c0"/><rect x="504" y="312" width="12.5" height="12.5" fill="#ff00b2"/><rect x="516" y="312" width="12.5" height="12.5" fill="#ff00a6"/><rect x="84" y="324" width="12.5" height="12.5" fill="#0004ff"/><rect x="96" y="324" width="12.5" height="12.5" fill="#0003ff"/><rect x="108" y="324" width="12.5" height="12.5" fill="#0003ff"/><rect x="120" y="324" width="12.5" height="12.5" fill="#0002ff"/><rect x="132" y="324" width="12.5" height="12.5" fill="#0001ff"/><rect x="144" y="324" width="12.5" height="12.5" fill="#0001ff"/><rect x="156" y="324" width="12.5" height="12.5" fill="#0000ff"/><rect x="168" y="324" width="12.5" height="12.5" fill="#0000ff"/><rect x="180" y="324" width="12.5" height="12.5" fill="#0000ff"/><rect x="192" y="324" width="12.5" height="12.5" fill="#0200ff"/><rect x="204" y="324" width="12.5" height="12.5" fill="#0400ff"/><rect x="216" y="324" width="12.5" height="12.5" fill="#0700ff"/><rect x="228" y="324" width="12.5" height="12.5" fill="#0b00ff"/><rect x="240" y="324" width="12.5" height="12.5" fill="#1000ff"/><rect x="252" y="324" width="12.5" height="12.5" fill="#1600ff"/><rect x="264" y="324" width="12.5" height="12.5" fill="#1c00ff"/><rect x="276" y="324" width="12.5" height="12.5" fill="#2400ff"/><rect x="288" y="324" width="12.5" height="12.5" fill="#2c00ff"/><rect x="300" y="324" width="12.5" height="12.5" fill="#3500ff"/><rect x="312" y="324" width="12.5" height="12.5" fill="#3e00ff"/><rect x="324" y="324" width="12.5" height="12.5" fill="#4900ff"/><rect x="336" y="324" width="12.5" height="12.5" fill="#5400ff"/><rect x="348" y="324" width="12.5" height="12.5" fill="#6000ff"/><rect x="360" y="324" width="12.5" height="12.5" fill="#6d00ff"/><rect x="372" y="324" width="12.5" height="12.5" fill="#7a00ff"/><rect x="384" y="324" width="12.5" height="12.5" fill="#8900ff"/><rect x="396" y="324" width="12.5" height="12.5" fill="#9800ff"/><rect x="408" y="324" width="12.5" height="12.5" fill="#a800ff"/><rect x="420" y="324" width="12.5" height="12.5" fill="#b900ff"/><rect x="432" y="324" width="12.5" height="12.5" fill="#cb00ff"/><rect x="444" y="324" width="12.5" height="12.5" fill="#de00ff"/><rect x="456" y="324" width="12.5" height="12.5" fill="#f200ff"/><rect x="468" y="324" width="12.5" height="12.5" fill="#ff00f7"/><rect x="480" y="324" width="12.5" height="12.5" fill="#ff00e4"/><rect x="492" y="324" width="12.5" height="12.5" fill="#ff00d3"/><rect x="504" y="324" width="12.5" height="12.5" fill="#ff00c4"/><rect x="516" y="324" width="12.5" height="12.5" fill="#ff00b6"/><rect x="84" y="336" width="12.5" height="12.5" fill="#0003ff"/><rect x="96" y="336" width="12.5" height="12.5" fill="#0002ff"/><rect x="108" y="336" width="12.5" height="12.5" fill="#0002ff"/><rect x="120" y="336" width="12.5" height="12.5" fill="#0001ff"/><rect x="132" y="336" width="12.5" height="12.5" fill="#0001ff"/><rect x="144" y="336" width="12.5" height="12.5" fill="#0000ff"/><rect x="156" y="336" width="12.5" height="12.5" fill="#0000ff"/><rect x="168" y="336" width="12.5" height="12.5" fill="#0000ff"/><rect x="180" y="336" width="12.5" height="12.5" fill="#0000ff"/><rect x="192" y="336" width="12.5" height="12.5" fill="#0100ff"/><rect x="204" y="336" width="12.5" height="12.5" fill="#0300ff"/><rect x="216" y="336" width="12.5" height="12.5" fill="#0600ff"/><rect x="228" y="336" width="12.5" height="12.5" fill="#0a00ff"/><rect x="240" y="336" width="12.5" height="12.5" fill="#0e00ff"/><rect x="252" y="336" width="12.5" height="12.5" fill="#1300ff"/><rect x="264" y="336" width="12.5" height="12.5" fill="#1900ff"/><rect x="276" y="336" width="12.5" height="12.5" fill="#2000ff"/><rect x="288" y="336" width="12.5" height="12.5" fill="#2700ff"/><rect x="300" y="336" width="12.5" height="12.5" fill="#2f00ff"/><rect x="312" y="336" width="12.5" height="12.5" fill="#3800ff"/><rect x="324" y="336" width="12.5" height="12.5" fill="#4100ff"/><rect x="336" y="336" width="12.5" height="12.5" fill="#4b00ff"/><rect x="348" y="336" width="12.5" height="12.5" fill="#5600ff"/><rect x="360" y="336" width="12.5" height="12.5" fill="#6200ff"/><rect x="372" y="336" width="12.5" height="12.5" fill="#6f00ff"/><rect x="384" y="336" width="12.5" height="12.5" fill="#7c00ff"/><rect x="396" y="336" width="12.5" height="12.5" fill="#8a00ff"/><rect x="408" y="336" width="12.5" height="12.5" fill="#9900ff"/><rect x="420" y="336" width="12.5" height="12.5" fill="#a800ff"/><rect x="432" y="336" width="12.5" height="12.5" fill="#b900ff"/><rect x="444" y="336" width="12.5" height="12.5" fill="#ca00ff"/><rect x="456" y="336" width="12.5" height="12.5" fill="#dc00ff"/><rect x="468" y="336" width="12.5" height="12.5" fill="#ef00ff"/><rect x="480" y="336" width="12.5" height="12.5" fill="#ff00fa"/><rect x="492" y="336" width="12.5" height="12.5" fill="#ff00e8"/><rect x="504" y="336" width="12.5" height="12.5" fill="#ff00d7"/><rect x="516" y="336" width="12.5" height="12.5" fill="#ff00c8"/><rect x="84" y="348" width="12.5" height="12.5" fill="#0002ff"/><rect x="96" y="348" width="12.5" height="12.5" fill="#0001ff"/><rect x="108" y="348" width="12.5" height="12.5" fill="#0001ff"/><rect x="120" y="348" width="12.5" height="12.5" fill="#0000ff"/><rect x="132" y="348" width="12.5" height="12.5" fill="#0000ff"/><rect x="144" y="348" width="12.5" height="12.5" fill="#0000ff"/><rect x="156" y="348" width="12.5" height="12.5" fill="#0000ff"/><rect x="168" y="348" width="12.5" height="12.5" fill="#0000ff"/><rect x="180" y="348" width="12.5" height="12.5" fill="#0000ff"/><rect x="192" y="348" width="12.5" height="12.5" fill="#0100ff"/><rect x="204" y="348" width="12.5" height="12.5" fill="#0200ff"/><rect x="216" y="348" width="12.5" height="12.5" fill="#0500ff"/><rect x="228" y="348" width="12.5" height="12.5" fill="#0800ff"/><rect x="240" y="348" width="12.5" height="12.5" fill="#0c00ff"/><rect x="252" y="348" width="12.5" height="12.5" fill="#1100ff"/><rect x="264" y="348" width="12.5" height="12.5" fill="#1600ff"/><rect x="276" y="348" width="12.5" height="12.5" fill="#1c00ff"/><rect x="288" y="348" width="12.5" height="12.5" fill="#2300ff"/><rect x="300" y="348" width="12.5" height="12.5" fill="#2a00ff"/><rect x="312" y="348" width="12.5" height="12.5" fill="#3200ff"/><rect x="324" y="348" width="12.5" height="12.5" fill="#3b00ff"/><rect x="336" y="348" width="12.5" height="12.5" fill="#4400ff"/><rect x="348" y="348" width="12.5" height="12.5" fill="#4e00ff"/><rect x="360" y="348" width="12.5" height="12.5" fill="#5900ff"/><rect x="372" y="348" width="12.5" height="12.5" fill="#6400ff"/><rect x="384" y="348" width="12.5" height="12.5" fill="#7000ff"/><rect x="396" y="348" width="12.5" height="12.5" fill="#7d00ff"/><rect x="408" y="348" width="12.5" height="12.5" fill="#8b00ff"/><rect x="420" y="348" width="12.5" height="12.5" fill="#9900ff"/><rect x="432" y="348" width="12.5" height="12.5" fill="#a800ff"/><rect x="444" y="348" width="12.5" height="12.5" fill="#b800ff"/><rect x="456" y="348" width="12.5" height="12.5" fill="#c900ff"/><rect x="468" y="348" width="12.5" height="12.5" fill="#da00ff"/><rect x="480" y="348" width="12.5" height="12.5" fill="#ec00ff"/><rect x="492" y="348" width="12.5" height="12.5" fill="#ff00fe"/><rect x="504" y="348" width="12.5" height="12.5" fill="#ff00ec"/><rect x="516" y="348" width="12.5" height="12.5" fill="#ff00db"/></g></g></svg>
<canvas id="cie" class="a" style="left:1014px;top:81px" width="618" height="476"></canvas>
<div class="a" style="left:1007px;top:557px;width:6px;height:1px;background:#8c8c8c"></div>
<div class="t" style="left:967.5px;top:550.5px;width:40px;text-align:right;font-size:14px;color:#d8d8d8;">0</div>
<div class="a" style="left:1007px;top:517px;width:6px;height:1px;background:#8c8c8c"></div>
<div class="t" style="left:967.5px;top:510.5px;width:40px;text-align:right;font-size:14px;color:#d8d8d8;">0,05</div>
<div class="a" style="left:1007px;top:478px;width:6px;height:1px;background:#8c8c8c"></div>
<div class="t" style="left:967.5px;top:471.5px;width:40px;text-align:right;font-size:14px;color:#d8d8d8;">0,1</div>
<div class="a" style="left:1007px;top:438px;width:6px;height:1px;background:#8c8c8c"></div>
<div class="t" style="left:967.5px;top:431.5px;width:40px;text-align:right;font-size:14px;color:#d8d8d8;">0,15</div>
<div class="a" style="left:1007px;top:398px;width:6px;height:1px;background:#8c8c8c"></div>
<div class="t" style="left:967.5px;top:391.5px;width:40px;text-align:right;font-size:14px;color:#d8d8d8;">0,2</div>
<div class="a" style="left:1007px;top:359px;width:6px;height:1px;background:#8c8c8c"></div>
<div class="t" style="left:967.5px;top:352.5px;width:40px;text-align:right;font-size:14px;color:#d8d8d8;">0,25</div>
<div class="a" style="left:1007px;top:319px;width:6px;height:1px;background:#8c8c8c"></div>
<div class="t" style="left:967.5px;top:312.5px;width:40px;text-align:right;font-size:14px;color:#d8d8d8;">0,3</div>
<div class="a" style="left:1007px;top:280px;width:6px;height:1px;background:#8c8c8c"></div>
<div class="t" style="left:967.5px;top:273.5px;width:40px;text-align:right;font-size:14px;color:#d8d8d8;">0,35</div>
<div class="a" style="left:1007px;top:240px;width:6px;height:1px;background:#8c8c8c"></div>
<div class="t" style="left:967.5px;top:233.5px;width:40px;text-align:right;font-size:14px;color:#d8d8d8;">0,4</div>
<div class="a" style="left:1007px;top:200px;width:6px;height:1px;background:#8c8c8c"></div>
<div class="t" style="left:967.5px;top:193.5px;width:40px;text-align:right;font-size:14px;color:#d8d8d8;">0,45</div>
<div class="a" style="left:1007px;top:161px;width:6px;height:1px;background:#8c8c8c"></div>
<div class="t" style="left:967.5px;top:154.5px;width:40px;text-align:right;font-size:14px;color:#d8d8d8;">0,5</div>
<div class="a" style="left:1007px;top:121px;width:6px;height:1px;background:#8c8c8c"></div>
<div class="t" style="left:967.5px;top:114.5px;width:40px;text-align:right;font-size:14px;color:#d8d8d8;">0,55</div>
<div class="a" style="left:1014px;top:557px;width:1px;height:6px;background:#8c8c8c"></div>
<div class="t" style="left:994.5px;top:566px;width:40px;text-align:center;font-size:14px;color:#d8d8d8;">0</div>
<div class="a" style="left:1066px;top:557px;width:1px;height:6px;background:#8c8c8c"></div>
<div class="t" style="left:1046.5px;top:566px;width:40px;text-align:center;font-size:14px;color:#d8d8d8;">0,05</div>
<div class="a" style="left:1117px;top:557px;width:1px;height:6px;background:#8c8c8c"></div>
<div class="t" style="left:1097.5px;top:566px;width:40px;text-align:center;font-size:14px;color:#d8d8d8;">0,1</div>
<div class="a" style="left:1169px;top:557px;width:1px;height:6px;background:#8c8c8c"></div>
<div class="t" style="left:1149.5px;top:566px;width:40px;text-align:center;font-size:14px;color:#d8d8d8;">0,15</div>
<div class="a" style="left:1220px;top:557px;width:1px;height:6px;background:#8c8c8c"></div>
<div class="t" style="left:1200.5px;top:566px;width:40px;text-align:center;font-size:14px;color:#d8d8d8;">0,2</div>
<div class="a" style="left:1272px;top:557px;width:1px;height:6px;background:#8c8c8c"></div>
<div class="t" style="left:1252.5px;top:566px;width:40px;text-align:center;font-size:14px;color:#d8d8d8;">0,25</div>
<div class="a" style="left:1323px;top:557px;width:1px;height:6px;background:#8c8c8c"></div>
<div class="t" style="left:1303.5px;top:566px;width:40px;text-align:center;font-size:14px;color:#d8d8d8;">0,3</div>
<div class="a" style="left:1375px;top:557px;width:1px;height:6px;background:#8c8c8c"></div>
<div class="t" style="left:1355.5px;top:566px;width:40px;text-align:center;font-size:14px;color:#d8d8d8;">0,35</div>
<div class="a" style="left:1426px;top:557px;width:1px;height:6px;background:#8c8c8c"></div>
<div class="t" style="left:1406.5px;top:566px;width:40px;text-align:center;font-size:14px;color:#d8d8d8;">0,4</div>
<div class="a" style="left:1478px;top:557px;width:1px;height:6px;background:#8c8c8c"></div>
<div class="t" style="left:1458.5px;top:566px;width:40px;text-align:center;font-size:14px;color:#d8d8d8;">0,45</div>
<div class="a" style="left:1529px;top:557px;width:1px;height:6px;background:#8c8c8c"></div>
<div class="t" style="left:1509.5px;top:566px;width:40px;text-align:center;font-size:14px;color:#d8d8d8;">0,5</div>
<div class="a" style="left:1581px;top:557px;width:1px;height:6px;background:#8c8c8c"></div>
<div class="t" style="left:1561.5px;top:566px;width:40px;text-align:center;font-size:14px;color:#d8d8d8;">0,55</div>
<div class="a" style="left:1386px;top:526px;width:243px;height:25px;background:#2c2c2c"></div>
<div class="t" style="left:1386px;top:529px;font-size:19px;color:#f6f6f6;">Gamut Coverage:&nbsp; 71,5%</div>
<svg class="a" style="left:1106px;top:88px" width="19" height="19"><rect x="2.8" y="2.8" width="13.4" height="13.4" fill="none" stroke="#f4f4f4" stroke-width="1.6"/></svg>
<svg class="a" style="left:1215px;top:99px" width="19" height="19"><rect x="2.8" y="2.8" width="13.4" height="13.4" fill="none" stroke="#f4f4f4" stroke-width="1.6"/></svg>
<svg class="a" style="left:1516px;top:130px" width="18" height="18"><rect x="2.8" y="2.8" width="12.4" height="12.4" fill="none" stroke="#f4f4f4" stroke-width="1.6"/></svg>
<svg class="a" style="left:1129px;top:188px" width="18" height="18"><rect x="2.8" y="2.8" width="12.4" height="12.4" fill="none" stroke="#f4f4f4" stroke-width="1.6"/></svg>
<svg class="a" style="left:1339px;top:286px" width="19" height="19"><rect x="2.8" y="2.8" width="13.4" height="13.4" fill="none" stroke="#f4f4f4" stroke-width="1.6"/></svg>
<svg class="a" style="left:1185px;top:422px" width="19" height="19"><rect x="2.8" y="2.8" width="13.4" height="13.4" fill="none" stroke="#f4f4f4" stroke-width="1.6"/></svg>
<svg class="a" style="left:1133.6px;top:102.4px" width="14" height="14"><circle cx="7" cy="7" r="4.5" fill="#20a020" stroke="#111" stroke-width="1.2"/></svg>
<svg class="a" style="left:1213.6px;top:110.4px" width="14" height="14"><circle cx="7" cy="7" r="4.5" fill="#bcb418" stroke="#111" stroke-width="1.2"/></svg>
<svg class="a" style="left:1454.5px;top:135.2px" width="14" height="14"><circle cx="7" cy="7" r="4.5" fill="#b01010" stroke="#111" stroke-width="1.2"/></svg>
<svg class="a" style="left:1147.9px;top:187px" width="14" height="14"><circle cx="7" cy="7" r="4.5" fill="#10b0b8" stroke="#111" stroke-width="1.2"/></svg>
<svg class="a" style="left:1315.4px;top:285.2px" width="14" height="14"><circle cx="7" cy="7" r="4.5" fill="#a010b0" stroke="#111" stroke-width="1.2"/></svg>
<svg class="a" style="left:1190.2px;top:417px" width="14" height="14"><circle cx="7" cy="7" r="4.5" fill="#1010c8" stroke="#111" stroke-width="1.2"/></svg>
<svg class="a" style="left:1208px;top:176px" width="18" height="18"><rect x="3.1" y="3.1" width="11.8" height="11.8" fill="none" stroke="#000000" stroke-width="2.2"/></svg>
<svg class="a" style="left:1207.6px;top:177.2px" width="14" height="14"><circle cx="7" cy="7" r="4.3" fill="#ffffff" stroke="#111" stroke-width="1.2"/></svg>
<div class="t" style="left:709.5px;top:604px;width:200px;text-align:center;font-size:14px;color:#d8d8d8;">CIE 1931 xy</div>
<div class="a" style="left:644px;top:620px;width:331px;height:193px;border:1px solid #8a8a8a"></div>
<svg class="a" style="left:645px;top:621px" width="329" height="191"><rect x="0" y="0" width="12" height="12" fill="#69ffd7"/><rect x="12" y="0" width="12" height="12" fill="#73ffd6"/><rect x="24" y="0" width="12" height="12" fill="#7cffd6"/><rect x="36" y="0" width="12" height="12" fill="#85ffd6"/><rect x="48" y="0" width="12" height="12" fill="#8effd5"/><rect x="60" y="0" width="12" height="12" fill="#96ffd5"/><rect x="72" y="0" width="12" height="12" fill="#9effd4"/><rect x="84" y="0" width="12" height="12" fill="#a6ffd4"/><rect x="96" y="0" width="12" height="12" fill="#aeffd4"/><rect x="108" y="0" width="12" height="12" fill="#b6ffd3"/><rect x="120" y="0" width="12" height="12" fill="#bdffd3"/><rect x="132" y="0" width="12" height="12" fill="#c5ffd2"/><rect x="144" y="0" width="12" height="12" fill="#ccffd2"/><rect x="156" y="0" width="12" height="12" fill="#d3ffd1"/><rect x="168" y="0" width="12" height="12" fill="#dbffd1"/><rect x="180" y="0" width="12" height="12" fill="#e2ffd0"/><rect x="192" y="0" width="12" height="12" fill="#e9ffd0"/><rect x="204" y="0" width="12" height="12" fill="#f0ffcf"/><rect x="216" y="0" width="12" height="12" fill="#f7ffcf"/><rect x="228" y="0" width="12" height="12" fill="#feffce"/><rect x="240" y="0" width="12" height="12" fill="#fff8c8"/><rect x="252" y="0" width="12" height="12" fill="#fff1c2"/><rect x="264" y="0" width="12" height="12" fill="#ffebbd"/><rect x="276" y="0" width="12" height="12" fill="#ffe5b8"/><rect x="288" y="0" width="12" height="12" fill="#ffe0b2"/><rect x="300" y="0" width="12" height="12" fill="#ffdaae"/><rect x="312" y="0" width="12" height="12" fill="#ffd5a9"/><rect x="324" y="0" width="12" height="12" fill="#ffd0a5"/><rect x="0" y="12" width="12" height="12" fill="#6effdc"/><rect x="12" y="12" width="12" height="12" fill="#78ffdb"/><rect x="24" y="12" width="12" height="12" fill="#81ffdb"/><rect x="36" y="12" width="12" height="12" fill="#8affdb"/><rect x="48" y="12" width="12" height="12" fill="#93ffda"/><rect x="60" y="12" width="12" height="12" fill="#9bffda"/><rect x="72" y="12" width="12" height="12" fill="#a3ffda"/><rect x="84" y="12" width="12" height="12" fill="#abffd9"/><rect x="96" y="12" width="12" height="12" fill="#b3ffd9"/><rect x="108" y="12" width="12" height="12" fill="#bbffd8"/><rect x="120" y="12" width="12" height="12" fill="#c2ffd8"/><rect x="132" y="12" width="12" height="12" fill="#caffd8"/><rect x="144" y="12" width="12" height="12" fill="#d1ffd7"/><rect x="156" y="12" width="12" height="12" fill="#d9ffd7"/><rect x="168" y="12" width="12" height="12" fill="#e0ffd6"/><rect x="180" y="12" width="12" height="12" fill="#e7ffd6"/><rect x="192" y="12" width="12" height="12" fill="#eeffd5"/><rect x="204" y="12" width="12" height="12" fill="#f6ffd5"/><rect x="216" y="12" width="12" height="12" fill="#fdffd5"/><rect x="228" y="12" width="12" height="12" fill="#fff9d0"/><rect x="240" y="12" width="12" height="12" fill="#fff2c9"/><rect x="252" y="12" width="12" height="12" fill="#ffecc4"/><rect x="264" y="12" width="12" height="12" fill="#ffe6be"/><rect x="276" y="12" width="12" height="12" fill="#ffe0b9"/><rect x="288" y="12" width="12" height="12" fill="#ffdbb4"/><rect x="300" y="12" width="12" height="12" fill="#ffd6af"/><rect x="312" y="12" width="12" height="12" fill="#ffd0ab"/><rect x="324" y="12" width="12" height="12" fill="#ffcca6"/><rect x="0" y="24" width="12" height="12" fill="#73ffe1"/><rect x="12" y="24" width="12" height="12" fill="#7cffe0"/><rect x="24" y="24" width="12" height="12" fill="#86ffe0"/><rect x="36" y="24" width="12" height="12" fill="#8fffe0"/><rect x="48" y="24" width="12" height="12" fill="#97ffdf"/><rect x="60" y="24" width="12" height="12" fill="#a0ffdf"/><rect x="72" y="24" width="12" height="12" fill="#a8ffdf"/><rect x="84" y="24" width="12" height="12" fill="#b0ffdf"/><rect x="96" y="24" width="12" height="12" fill="#b8ffde"/><rect x="108" y="24" width="12" height="12" fill="#bfffde"/><rect x="120" y="24" width="12" height="12" fill="#c7ffde"/><rect x="132" y="24" width="12" height="12" fill="#cfffdd"/><rect x="144" y="24" width="12" height="12" fill="#d6ffdd"/><rect x="156" y="24" width="12" height="12" fill="#deffdc"/><rect x="168" y="24" width="12" height="12" fill="#e5ffdc"/><rect x="180" y="24" width="12" height="12" fill="#edffdc"/><rect x="192" y="24" width="12" height="12" fill="#f4ffdb"/><rect x="204" y="24" width="12" height="12" fill="#fbffdb"/><rect x="216" y="24" width="12" height="12" fill="#fffad7"/><rect x="228" y="24" width="12" height="12" fill="#fff4d1"/><rect x="240" y="24" width="12" height="12" fill="#ffedcb"/><rect x="252" y="24" width="12" height="12" fill="#ffe7c5"/><rect x="264" y="24" width="12" height="12" fill="#ffe1c0"/><rect x="276" y="24" width="12" height="12" fill="#ffdbba"/><rect x="288" y="24" width="12" height="12" fill="#ffd6b5"/><rect x="300" y="24" width="12" height="12" fill="#ffd1b1"/><rect x="312" y="24" width="12" height="12" fill="#ffccac"/><rect x="324" y="24" width="12" height="12" fill="#ffc7a8"/><rect x="0" y="36" width="12" height="12" fill="#78ffe6"/><rect x="12" y="36" width="12" height="12" fill="#81ffe6"/><rect x="24" y="36" width="12" height="12" fill="#8affe5"/><rect x="36" y="36" width="12" height="12" fill="#93ffe5"/><rect x="48" y="36" width="12" height="12" fill="#9cffe5"/><rect x="60" y="36" width="12" height="12" fill="#a4ffe5"/><rect x="72" y="36" width="12" height="12" fill="#adffe4"/><rect x="84" y="36" width="12" height="12" fill="#b5ffe4"/><rect x="96" y="36" width="12" height="12" fill="#bdffe4"/><rect x="108" y="36" width="12" height="12" fill="#c4ffe3"/><rect x="120" y="36" width="12" height="12" fill="#ccffe3"/><rect x="132" y="36" width="12" height="12" fill="#d4ffe3"/><rect x="144" y="36" width="12" height="12" fill="#dcffe3"/><rect x="156" y="36" width="12" height="12" fill="#e3ffe2"/><rect x="168" y="36" width="12" height="12" fill="#ebffe2"/><rect x="180" y="36" width="12" height="12" fill="#f2ffe2"/><rect x="192" y="36" width="12" height="12" fill="#faffe1"/><rect x="204" y="36" width="12" height="12" fill="#fffcdf"/><rect x="216" y="36" width="12" height="12" fill="#fff5d8"/><rect x="228" y="36" width="12" height="12" fill="#ffeed2"/><rect x="240" y="36" width="12" height="12" fill="#ffe8cc"/><rect x="252" y="36" width="12" height="12" fill="#ffe2c6"/><rect x="264" y="36" width="12" height="12" fill="#ffdcc1"/><rect x="276" y="36" width="12" height="12" fill="#ffd7bc"/><rect x="288" y="36" width="12" height="12" fill="#ffd1b7"/><rect x="300" y="36" width="12" height="12" fill="#ffccb2"/><rect x="312" y="36" width="12" height="12" fill="#ffc7ae"/><rect x="324" y="36" width="12" height="12" fill="#ffc3a9"/><rect x="0" y="48" width="12" height="12" fill="#7cffeb"/><rect x="12" y="48" width="12" height="12" fill="#86ffeb"/><rect x="24" y="48" width="12" height="12" fill="#8fffeb"/><rect x="36" y="48" width="12" height="12" fill="#98ffeb"/><rect x="48" y="48" width="12" height="12" fill="#a1ffea"/><rect x="60" y="48" width="12" height="12" fill="#a9ffea"/><rect x="72" y="48" width="12" height="12" fill="#b2ffea"/><rect x="84" y="48" width="12" height="12" fill="#baffea"/><rect x="96" y="48" width="12" height="12" fill="#c2ffe9"/><rect x="108" y="48" width="12" height="12" fill="#caffe9"/><rect x="120" y="48" width="12" height="12" fill="#d1ffe9"/><rect x="132" y="48" width="12" height="12" fill="#d9ffe9"/><rect x="144" y="48" width="12" height="12" fill="#e1ffe9"/><rect x="156" y="48" width="12" height="12" fill="#e9ffe8"/><rect x="168" y="48" width="12" height="12" fill="#f0ffe8"/><rect x="180" y="48" width="12" height="12" fill="#f8ffe8"/><rect x="192" y="48" width="12" height="12" fill="#fffde7"/><rect x="204" y="48" width="12" height="12" fill="#fff6e0"/><rect x="216" y="48" width="12" height="12" fill="#ffefd9"/><rect x="228" y="48" width="12" height="12" fill="#ffe9d3"/><rect x="240" y="48" width="12" height="12" fill="#ffe3cd"/><rect x="252" y="48" width="12" height="12" fill="#ffddc8"/><rect x="264" y="48" width="12" height="12" fill="#ffd7c2"/><rect x="276" y="48" width="12" height="12" fill="#ffd2bd"/><rect x="288" y="48" width="12" height="12" fill="#ffcdb8"/><rect x="300" y="48" width="12" height="12" fill="#ffc8b4"/><rect x="312" y="48" width="12" height="12" fill="#ffc3af"/><rect x="324" y="48" width="12" height="12" fill="#ffbeab"/><rect x="0" y="60" width="12" height="12" fill="#81fff1"/><rect x="12" y="60" width="12" height="12" fill="#8bfff0"/><rect x="24" y="60" width="12" height="12" fill="#94fff0"/><rect x="36" y="60" width="12" height="12" fill="#9dfff0"/><rect x="48" y="60" width="12" height="12" fill="#a6fff0"/><rect x="60" y="60" width="12" height="12" fill="#aefff0"/><rect x="72" y="60" width="12" height="12" fill="#b7fff0"/><rect x="84" y="60" width="12" height="12" fill="#bffff0"/><rect x="96" y="60" width="12" height="12" fill="#c7ffef"/><rect x="108" y="60" width="12" height="12" fill="#cfffef"/><rect x="120" y="60" width="12" height="12" fill="#d7ffef"/><rect x="132" y="60" width="12" height="12" fill="#dfffef"/><rect x="144" y="60" width="12" height="12" fill="#e7ffef"/><rect x="156" y="60" width="12" height="12" fill="#eeffef"/><rect x="168" y="60" width="12" height="12" fill="#f6ffee"/><rect x="180" y="60" width="12" height="12" fill="#feffee"/><rect x="192" y="60" width="12" height="12" fill="#fff8e8"/><rect x="204" y="60" width="12" height="12" fill="#fff0e1"/><rect x="216" y="60" width="12" height="12" fill="#ffeada"/><rect x="228" y="60" width="12" height="12" fill="#ffe3d4"/><rect x="240" y="60" width="12" height="12" fill="#ffddce"/><rect x="252" y="60" width="12" height="12" fill="#ffd8c9"/><rect x="264" y="60" width="12" height="12" fill="#ffd2c4"/><rect x="276" y="60" width="12" height="12" fill="#ffcdbf"/><rect x="288" y="60" width="12" height="12" fill="#ffc8ba"/><rect x="300" y="60" width="12" height="12" fill="#ffc3b5"/><rect x="312" y="60" width="12" height="12" fill="#ffbfb1"/><rect x="324" y="60" width="12" height="12" fill="#ffbaac"/><rect x="0" y="72" width="12" height="12" fill="#86fff6"/><rect x="12" y="72" width="12" height="12" fill="#90fff6"/><rect x="24" y="72" width="12" height="12" fill="#99fff6"/><rect x="36" y="72" width="12" height="12" fill="#a2fff6"/><rect x="48" y="72" width="12" height="12" fill="#abfff6"/><rect x="60" y="72" width="12" height="12" fill="#b3fff6"/><rect x="72" y="72" width="12" height="12" fill="#bcfff6"/><rect x="84" y="72" width="12" height="12" fill="#c4fff6"/><rect x="96" y="72" width="12" height="12" fill="#ccfff5"/><rect x="108" y="72" width="12" height="12" fill="#d4fff5"/><rect x="120" y="72" width="12" height="12" fill="#dcfff5"/><rect x="132" y="72" width="12" height="12" fill="#e4fff5"/><rect x="144" y="72" width="12" height="12" fill="#ecfff5"/><rect x="156" y="72" width="12" height="12" fill="#f4fff5"/><rect x="168" y="72" width="12" height="12" fill="#fcfff5"/><rect x="180" y="72" width="12" height="12" fill="#fff9f0"/><rect x="192" y="72" width="12" height="12" fill="#fff2e8"/><rect x="204" y="72" width="12" height="12" fill="#ffebe2"/><rect x="216" y="72" width="12" height="12" fill="#ffe4db"/><rect x="228" y="72" width="12" height="12" fill="#ffded5"/><rect x="240" y="72" width="12" height="12" fill="#ffd8cf"/><rect x="252" y="72" width="12" height="12" fill="#ffd3ca"/><rect x="264" y="72" width="12" height="12" fill="#ffcdc5"/><rect x="276" y="72" width="12" height="12" fill="#ffc8c0"/><rect x="288" y="72" width="12" height="12" fill="#ffc3bb"/><rect x="300" y="72" width="12" height="12" fill="#ffbfb6"/><rect x="312" y="72" width="12" height="12" fill="#ffbab2"/><rect x="324" y="72" width="12" height="12" fill="#ffb6ae"/><rect x="0" y="84" width="12" height="12" fill="#8bfffc"/><rect x="12" y="84" width="12" height="12" fill="#95fffc"/><rect x="24" y="84" width="12" height="12" fill="#9efffc"/><rect x="36" y="84" width="12" height="12" fill="#a7fffc"/><rect x="48" y="84" width="12" height="12" fill="#b0fffc"/><rect x="60" y="84" width="12" height="12" fill="#b9fffc"/><rect x="72" y="84" width="12" height="12" fill="#c1fffc"/><rect x="84" y="84" width="12" height="12" fill="#cafffc"/><rect x="96" y="84" width="12" height="12" fill="#d2fffc"/><rect x="108" y="84" width="12" height="12" fill="#dafffc"/><rect x="120" y="84" width="12" height="12" fill="#e2fffc"/><rect x="132" y="84" width="12" height="12" fill="#eafffc"/><rect x="144" y="84" width="12" height="12" fill="#f2fffc"/><rect x="156" y="84" width="12" height="12" fill="#fafffc"/><rect x="168" y="84" width="12" height="12" fill="#fffbf8"/><rect x="180" y="84" width="12" height="12" fill="#fff3f0"/><rect x="192" y="84" width="12" height="12" fill="#ffece9"/><rect x="204" y="84" width="12" height="12" fill="#ffe5e3"/><rect x="216" y="84" width="12" height="12" fill="#ffdfdc"/><rect x="228" y="84" width="12" height="12" fill="#ffd9d6"/><rect x="240" y="84" width="12" height="12" fill="#ffd3d1"/><rect x="252" y="84" width="12" height="12" fill="#ffcecb"/><rect x="264" y="84" width="12" height="12" fill="#ffc8c6"/><rect x="276" y="84" width="12" height="12" fill="#ffc3c1"/><rect x="288" y="84" width="12" height="12" fill="#ffbfbc"/><rect x="300" y="84" width="12" height="12" fill="#ffbab8"/><rect x="312" y="84" width="12" height="12" fill="#ffb6b3"/><rect x="324" y="84" width="12" height="12" fill="#ffb1af"/><rect x="0" y="96" width="12" height="12" fill="#8ffbff"/><rect x="12" y="96" width="12" height="12" fill="#98fbff"/><rect x="24" y="96" width="12" height="12" fill="#a1fbff"/><rect x="36" y="96" width="12" height="12" fill="#aafbff"/><rect x="48" y="96" width="12" height="12" fill="#b3fbff"/><rect x="60" y="96" width="12" height="12" fill="#bbfbff"/><rect x="72" y="96" width="12" height="12" fill="#c4fbff"/><rect x="84" y="96" width="12" height="12" fill="#ccfbff"/><rect x="96" y="96" width="12" height="12" fill="#d4fbff"/><rect x="108" y="96" width="12" height="12" fill="#ddfbff"/><rect x="120" y="96" width="12" height="12" fill="#e5fbff"/><rect x="132" y="96" width="12" height="12" fill="#edfbff"/><rect x="144" y="96" width="12" height="12" fill="#f5fbff"/><rect x="156" y="96" width="12" height="12" fill="#fdfbff"/><rect x="168" y="96" width="12" height="12" fill="#fff4f8"/><rect x="180" y="96" width="12" height="12" fill="#ffedf1"/><rect x="192" y="96" width="12" height="12" fill="#ffe6ea"/><rect x="204" y="96" width="12" height="12" fill="#ffe0e3"/><rect x="216" y="96" width="12" height="12" fill="#ffd9dd"/><rect x="228" y="96" width="12" height="12" fill="#ffd4d7"/><rect x="240" y="96" width="12" height="12" fill="#ffced2"/><rect x="252" y="96" width="12" height="12" fill="#ffc9cc"/><rect x="264" y="96" width="12" height="12" fill="#ffc4c7"/><rect x="276" y="96" width="12" height="12" fill="#ffbfc2"/><rect x="288" y="96" width="12" height="12" fill="#ffbabe"/><rect x="300" y="96" width="12" height="12" fill="#ffb5b9"/><rect x="312" y="96" width="12" height="12" fill="#ffb1b5"/><rect x="324" y="96" width="12" height="12" fill="#ffadb0"/><rect x="0" y="108" width="12" height="12" fill="#91f5ff"/><rect x="12" y="108" width="12" height="12" fill="#9af5ff"/><rect x="24" y="108" width="12" height="12" fill="#a3f5ff"/><rect x="36" y="108" width="12" height="12" fill="#abf5ff"/><rect x="48" y="108" width="12" height="12" fill="#b4f5ff"/><rect x="60" y="108" width="12" height="12" fill="#bcf5ff"/><rect x="72" y="108" width="12" height="12" fill="#c5f5ff"/><rect x="84" y="108" width="12" height="12" fill="#cdf5ff"/><rect x="96" y="108" width="12" height="12" fill="#d5f4ff"/><rect x="108" y="108" width="12" height="12" fill="#ddf4ff"/><rect x="120" y="108" width="12" height="12" fill="#e5f4ff"/><rect x="132" y="108" width="12" height="12" fill="#edf4ff"/><rect x="144" y="108" width="12" height="12" fill="#f5f4ff"/><rect x="156" y="108" width="12" height="12" fill="#fcf4ff"/><rect x="168" y="108" width="12" height="12" fill="#ffeef9"/><rect x="180" y="108" width="12" height="12" fill="#ffe7f2"/><rect x="192" y="108" width="12" height="12" fill="#ffe0eb"/><rect x="204" y="108" width="12" height="12" fill="#ffdae4"/><rect x="216" y="108" width="12" height="12" fill="#ffd4de"/><rect x="228" y="108" width="12" height="12" fill="#ffced8"/><rect x="240" y="108" width="12" height="12" fill="#ffc9d3"/><rect x="252" y="108" width="12" height="12" fill="#ffc4cd"/><rect x="264" y="108" width="12" height="12" fill="#ffbfc8"/><rect x="276" y="108" width="12" height="12" fill="#ffbac3"/><rect x="288" y="108" width="12" height="12" fill="#ffb5bf"/><rect x="300" y="108" width="12" height="12" fill="#ffb1ba"/><rect x="312" y="108" width="12" height="12" fill="#ffadb6"/><rect x="324" y="108" width="12" height="12" fill="#ffa9b2"/><rect x="0" y="120" width="12" height="12" fill="#92f0ff"/><rect x="12" y="120" width="12" height="12" fill="#9befff"/><rect x="24" y="120" width="12" height="12" fill="#a4efff"/><rect x="36" y="120" width="12" height="12" fill="#acefff"/><rect x="48" y="120" width="12" height="12" fill="#b5efff"/><rect x="60" y="120" width="12" height="12" fill="#bdefff"/><rect x="72" y="120" width="12" height="12" fill="#c5efff"/><rect x="84" y="120" width="12" height="12" fill="#cdeeff"/><rect x="96" y="120" width="12" height="12" fill="#d5eeff"/><rect x="108" y="120" width="12" height="12" fill="#ddeeff"/><rect x="120" y="120" width="12" height="12" fill="#e5eeff"/><rect x="132" y="120" width="12" height="12" fill="#edeeff"/><rect x="144" y="120" width="12" height="12" fill="#f4edff"/><rect x="156" y="120" width="12" height="12" fill="#fcedff"/><rect x="168" y="120" width="12" height="12" fill="#ffe8f9"/><rect x="180" y="120" width="12" height="12" fill="#ffe1f2"/><rect x="192" y="120" width="12" height="12" fill="#ffdbeb"/><rect x="204" y="120" width="12" height="12" fill="#ffd5e5"/><rect x="216" y="120" width="12" height="12" fill="#ffcfdf"/><rect x="228" y="120" width="12" height="12" fill="#ffc9d9"/><rect x="240" y="120" width="12" height="12" fill="#ffc4d4"/><rect x="252" y="120" width="12" height="12" fill="#ffbfce"/><rect x="264" y="120" width="12" height="12" fill="#ffbac9"/><rect x="276" y="120" width="12" height="12" fill="#ffb5c5"/><rect x="288" y="120" width="12" height="12" fill="#ffb1c0"/><rect x="300" y="120" width="12" height="12" fill="#ffacbb"/><rect x="312" y="120" width="12" height="12" fill="#ffa8b7"/><rect x="324" y="120" width="12" height="12" fill="#ffa4b3"/><rect x="0" y="132" width="12" height="12" fill="#94eaff"/><rect x="12" y="132" width="12" height="12" fill="#9deaff"/><rect x="24" y="132" width="12" height="12" fill="#a5eaff"/><rect x="36" y="132" width="12" height="12" fill="#ade9ff"/><rect x="48" y="132" width="12" height="12" fill="#b6e9ff"/><rect x="60" y="132" width="12" height="12" fill="#bee9ff"/><rect x="72" y="132" width="12" height="12" fill="#c6e9ff"/><rect x="84" y="132" width="12" height="12" fill="#cee8ff"/><rect x="96" y="132" width="12" height="12" fill="#d5e8ff"/><rect x="108" y="132" width="12" height="12" fill="#dde8ff"/><rect x="120" y="132" width="12" height="12" fill="#e5e7ff"/><rect x="132" y="132" width="12" height="12" fill="#ece7ff"/><rect x="144" y="132" width="12" height="12" fill="#f4e7ff"/><rect x="156" y="132" width="12" height="12" fill="#fce7ff"/><rect x="168" y="132" width="12" height="12" fill="#ffe2fa"/><rect x="180" y="132" width="12" height="12" fill="#ffdcf3"/><rect x="192" y="132" width="12" height="12" fill="#ffd5ec"/><rect x="204" y="132" width="12" height="12" fill="#ffcfe6"/><rect x="216" y="132" width="12" height="12" fill="#ffc9e0"/><rect x="228" y="132" width="12" height="12" fill="#ffc4da"/><rect x="240" y="132" width="12" height="12" fill="#ffbfd5"/><rect x="252" y="132" width="12" height="12" fill="#ffbacf"/><rect x="264" y="132" width="12" height="12" fill="#ffb5ca"/><rect x="276" y="132" width="12" height="12" fill="#ffb0c6"/><rect x="288" y="132" width="12" height="12" fill="#ffacc1"/><rect x="300" y="132" width="12" height="12" fill="#ffa8bd"/><rect x="312" y="132" width="12" height="12" fill="#ffa4b8"/><rect x="324" y="132" width="12" height="12" fill="#ffa0b4"/><rect x="0" y="144" width="12" height="12" fill="#95e4ff"/><rect x="12" y="144" width="12" height="12" fill="#9ee4ff"/><rect x="24" y="144" width="12" height="12" fill="#a6e4ff"/><rect x="36" y="144" width="12" height="12" fill="#afe3ff"/><rect x="48" y="144" width="12" height="12" fill="#b7e3ff"/><rect x="60" y="144" width="12" height="12" fill="#bee3ff"/><rect x="72" y="144" width="12" height="12" fill="#c6e3ff"/><rect x="84" y="144" width="12" height="12" fill="#cee2ff"/><rect x="96" y="144" width="12" height="12" fill="#d6e2ff"/><rect x="108" y="144" width="12" height="12" fill="#dde2ff"/><rect x="120" y="144" width="12" height="12" fill="#e5e1ff"/><rect x="132" y="144" width="12" height="12" fill="#ece1ff"/><rect x="144" y="144" width="12" height="12" fill="#f4e1ff"/><rect x="156" y="144" width="12" height="12" fill="#fbe0ff"/><rect x="168" y="144" width="12" height="12" fill="#ffdcfa"/><rect x="180" y="144" width="12" height="12" fill="#ffd6f4"/><rect x="192" y="144" width="12" height="12" fill="#ffd0ed"/><rect x="204" y="144" width="12" height="12" fill="#ffcae7"/><rect x="216" y="144" width="12" height="12" fill="#ffc4e1"/><rect x="228" y="144" width="12" height="12" fill="#ffbfdb"/><rect x="240" y="144" width="12" height="12" fill="#ffbad6"/><rect x="252" y="144" width="12" height="12" fill="#ffb5d0"/><rect x="264" y="144" width="12" height="12" fill="#ffb0cb"/><rect x="276" y="144" width="12" height="12" fill="#ffacc7"/><rect x="288" y="144" width="12" height="12" fill="#ffa7c2"/><rect x="300" y="144" width="12" height="12" fill="#ffa3be"/><rect x="312" y="144" width="12" height="12" fill="#ff9fba"/><rect x="324" y="144" width="12" height="12" fill="#ff9bb6"/><rect x="0" y="156" width="12" height="12" fill="#97dfff"/><rect x="12" y="156" width="12" height="12" fill="#9fdeff"/><rect x="24" y="156" width="12" height="12" fill="#a7deff"/><rect x="36" y="156" width="12" height="12" fill="#b0deff"/><rect x="48" y="156" width="12" height="12" fill="#b7ddff"/><rect x="60" y="156" width="12" height="12" fill="#bfddff"/><rect x="72" y="156" width="12" height="12" fill="#c7ddff"/><rect x="84" y="156" width="12" height="12" fill="#cedcff"/><rect x="96" y="156" width="12" height="12" fill="#d6dcff"/><rect x="108" y="156" width="12" height="12" fill="#dddcff"/><rect x="120" y="156" width="12" height="12" fill="#e5dbff"/><rect x="132" y="156" width="12" height="12" fill="#ecdbff"/><rect x="144" y="156" width="12" height="12" fill="#f3daff"/><rect x="156" y="156" width="12" height="12" fill="#fbdaff"/><rect x="168" y="156" width="12" height="12" fill="#ffd6fb"/><rect x="180" y="156" width="12" height="12" fill="#ffd0f4"/><rect x="192" y="156" width="12" height="12" fill="#ffcaee"/><rect x="204" y="156" width="12" height="12" fill="#ffc4e7"/><rect x="216" y="156" width="12" height="12" fill="#ffbfe1"/><rect x="228" y="156" width="12" height="12" fill="#ffbadc"/><rect x="240" y="156" width="12" height="12" fill="#ffb5d7"/><rect x="252" y="156" width="12" height="12" fill="#ffb0d1"/><rect x="264" y="156" width="12" height="12" fill="#ffabcc"/><rect x="276" y="156" width="12" height="12" fill="#ffa7c8"/><rect x="288" y="156" width="12" height="12" fill="#ffa3c3"/><rect x="300" y="156" width="12" height="12" fill="#ff9fbf"/><rect x="312" y="156" width="12" height="12" fill="#ff9bbb"/><rect x="324" y="156" width="12" height="12" fill="#ff97b7"/><rect x="0" y="168" width="12" height="12" fill="#98d9ff"/><rect x="12" y="168" width="12" height="12" fill="#a1d9ff"/><rect x="24" y="168" width="12" height="12" fill="#a9d9ff"/><rect x="36" y="168" width="12" height="12" fill="#b0d8ff"/><rect x="48" y="168" width="12" height="12" fill="#b8d8ff"/><rect x="60" y="168" width="12" height="12" fill="#c0d7ff"/><rect x="72" y="168" width="12" height="12" fill="#c7d7ff"/><rect x="84" y="168" width="12" height="12" fill="#cfd6ff"/><rect x="96" y="168" width="12" height="12" fill="#d6d6ff"/><rect x="108" y="168" width="12" height="12" fill="#ddd6ff"/><rect x="120" y="168" width="12" height="12" fill="#e5d5ff"/><rect x="132" y="168" width="12" height="12" fill="#ecd5ff"/><rect x="144" y="168" width="12" height="12" fill="#f3d4ff"/><rect x="156" y="168" width="12" height="12" fill="#fad4ff"/><rect x="168" y="168" width="12" height="12" fill="#ffd1fb"/><rect x="180" y="168" width="12" height="12" fill="#ffcaf5"/><rect x="192" y="168" width="12" height="12" fill="#ffc4ee"/><rect x="204" y="168" width="12" height="12" fill="#ffbfe8"/><rect x="216" y="168" width="12" height="12" fill="#ffbae2"/><rect x="228" y="168" width="12" height="12" fill="#ffb5dd"/><rect x="240" y="168" width="12" height="12" fill="#ffb0d7"/><rect x="252" y="168" width="12" height="12" fill="#ffabd2"/><rect x="264" y="168" width="12" height="12" fill="#ffa7cd"/><rect x="276" y="168" width="12" height="12" fill="#ffa2c9"/><rect x="288" y="168" width="12" height="12" fill="#ff9ec4"/><rect x="300" y="168" width="12" height="12" fill="#ff9ac0"/><rect x="312" y="168" width="12" height="12" fill="#ff96bc"/><rect x="324" y="168" width="12" height="12" fill="#ff93b8"/><rect x="0" y="180" width="12" height="12" fill="#9ad4ff"/><rect x="12" y="180" width="12" height="12" fill="#a2d3ff"/><rect x="24" y="180" width="12" height="12" fill="#aad3ff"/><rect x="36" y="180" width="12" height="12" fill="#b1d3ff"/><rect x="48" y="180" width="12" height="12" fill="#b9d2ff"/><rect x="60" y="180" width="12" height="12" fill="#c0d2ff"/><rect x="72" y="180" width="12" height="12" fill="#c8d1ff"/><rect x="84" y="180" width="12" height="12" fill="#cfd1ff"/><rect x="96" y="180" width="12" height="12" fill="#d6d0ff"/><rect x="108" y="180" width="12" height="12" fill="#ded0ff"/><rect x="120" y="180" width="12" height="12" fill="#e5cfff"/><rect x="132" y="180" width="12" height="12" fill="#ecceff"/><rect x="144" y="180" width="12" height="12" fill="#f3ceff"/><rect x="156" y="180" width="12" height="12" fill="#facdff"/><rect x="168" y="180" width="12" height="12" fill="#ffcbfc"/><rect x="180" y="180" width="12" height="12" fill="#ffc5f5"/><rect x="192" y="180" width="12" height="12" fill="#ffbfef"/><rect x="204" y="180" width="12" height="12" fill="#ffbae9"/><rect x="216" y="180" width="12" height="12" fill="#ffb4e3"/><rect x="228" y="180" width="12" height="12" fill="#ffafde"/><rect x="240" y="180" width="12" height="12" fill="#ffabd8"/><rect x="252" y="180" width="12" height="12" fill="#ffa6d3"/><rect x="264" y="180" width="12" height="12" fill="#ffa2ce"/><rect x="276" y="180" width="12" height="12" fill="#ff9eca"/><rect x="288" y="180" width="12" height="12" fill="#ff99c5"/><rect x="300" y="180" width="12" height="12" fill="#ff96c1"/><rect x="312" y="180" width="12" height="12" fill="#ff92bd"/><rect x="324" y="180" width="12" height="12" fill="#ff8eb9"/></svg>
<canvas id="xy" class="a" style="left:644px;top:620px;border:1px solid #8a8a8a" width="329" height="191"></canvas>
<svg class="a" style="left:772px;top:700px" width="50" height="30"><circle cx="15.5" cy="8" r="4" fill="#b4b4b4" stroke="#222" stroke-width="1"/><ellipse cx="10.2" cy="16.5" rx="4.5" ry="4" fill="#ffffff" stroke="#222" stroke-width="1"/><rect x="30.2" y="8.5" width="14" height="14" fill="none" stroke="#000" stroke-width="2.2"/></svg>
<div class="a" style="left:992px;top:607px;width:613px;height:191px;background:#333333"></div>
<div class="a" style="left:1005px;top:607px;width:600px;height:38px;background:linear-gradient(#2a2a2a 0%,#2c2c2c 48%,#161616 52%,#141414 100%)"></div>
<div class="a" style="left:992px;top:607px;width:13px;height:38px;background:#000000"></div>
<div class="a" style="left:992px;top:607px;width:613px;height:191px;overflow:hidden">
<div class="t" style="left:88px;top:8.5px;font-size:21px;color:#f0f0f0;transform:scaleX(0.75);transform-origin:0 0">White</div>
<div class="t" style="left:165px;top:8.5px;font-size:21px;color:#f0f0f0;transform:scaleX(0.75);transform-origin:0 0">Red</div>
<div class="t" style="left:232px;top:8.5px;font-size:21px;color:#f0f0f0;transform:scaleX(0.75);transform-origin:0 0">Green</div>
<div class="t" style="left:309px;top:8.5px;font-size:21px;color:#f0f0f0;transform:scaleX(0.75);transform-origin:0 0">Blue</div>
<div class="t" style="left:376px;top:8.5px;font-size:21px;color:#f0f0f0;transform:scaleX(0.75);transform-origin:0 0">Cyan</div>
<div class="t" style="left:453px;top:8.5px;font-size:21px;color:#f0f0f0;transform:scaleX(0.75);transform-origin:0 0">Magenta</div>
<div class="t" style="left:521.5999999999999px;top:8.5px;font-size:21px;color:#f0f0f0;transform:scaleX(0.75);transform-origin:0 0">Yellow</div>
<div class="t" style="left:598px;top:8.5px;font-size:21px;color:#f0f0f0;transform:scaleX(0.75);transform-origin:0 0">100W</div>
<div class="a" style="left:0;top:37.5px;width:13px;height:35px;background:#1e1e1e"></div>
<div class="a" style="left:13px;top:37.5px;width:600px;height:35px;background:#3c3c3c"></div>
<div class="t" style="left:18px;top:43.0px;font-size:21px;color:#f2f2f2;transform:scaleX(0.75);transform-origin:0 0">x: CIE31</div>
<div class="t" style="left:88px;top:43.0px;font-size:21px;color:#f2f2f2;transform:scaleX(0.75);transform-origin:0 0">0,3093</div>
<div class="t" style="left:165px;top:43.0px;font-size:21px;color:#f2f2f2;transform:scaleX(0.75);transform-origin:0 0">0,6259</div>
<div class="t" style="left:232px;top:43.0px;font-size:21px;color:#f2f2f2;transform:scaleX(0.75);transform-origin:0 0">0,2957</div>
<div class="t" style="left:309px;top:43.0px;font-size:21px;color:#f2f2f2;transform:scaleX(0.75);transform-origin:0 0">0,1539</div>
<div class="t" style="left:376px;top:43.0px;font-size:21px;color:#f2f2f2;transform:scaleX(0.75);transform-origin:0 0">0,2229</div>
<div class="t" style="left:453px;top:43.0px;font-size:21px;color:#f2f2f2;transform:scaleX(0.75);transform-origin:0 0">0,3172</div>
<div class="t" style="left:521.5999999999999px;top:43.0px;font-size:21px;color:#f2f2f2;transform:scaleX(0.75);transform-origin:0 0">0,4145</div>
<div class="t" style="left:598px;top:43.0px;font-size:21px;color:#f2f2f2;transform:scaleX(0.75);transform-origin:0 0">0,3</div>
<div class="a" style="left:0;top:72.5px;width:13px;height:35px;background:#1e1e1e"></div>
<div class="a" style="left:13px;top:72.5px;width:600px;height:35px;background:#787878"></div>
<div class="t" style="left:18px;top:78.0px;font-size:21px;color:#f2f2f2;transform:scaleX(0.75);transform-origin:0 0">y: CIE31</div>
<div class="t" style="left:88px;top:78.0px;font-size:21px;color:#f2f2f2;transform:scaleX(0.75);transform-origin:0 0">0,3309</div>
<div class="t" style="left:165px;top:78.0px;font-size:21px;color:#f2f2f2;transform:scaleX(0.75);transform-origin:0 0">0,3334</div>
<div class="t" style="left:232px;top:78.0px;font-size:21px;color:#f2f2f2;transform:scaleX(0.75);transform-origin:0 0">0,6017</div>
<div class="t" style="left:309px;top:78.0px;font-size:21px;color:#f2f2f2;transform:scaleX(0.75);transform-origin:0 0">0,0642</div>
<div class="t" style="left:376px;top:78.0px;font-size:21px;color:#f2f2f2;transform:scaleX(0.75);transform-origin:0 0">0,3303</div>
<div class="t" style="left:453px;top:78.0px;font-size:21px;color:#f2f2f2;transform:scaleX(0.75);transform-origin:0 0">0,1566</div>
<div class="t" style="left:521.5999999999999px;top:78.0px;font-size:21px;color:#f2f2f2;transform:scaleX(0.75);transform-origin:0 0">0,5076</div>
<div class="t" style="left:598px;top:78.0px;font-size:21px;color:#f2f2f2;transform:scaleX(0.75);transform-origin:0 0">0,3</div>
<div class="a" style="left:0;top:107.5px;width:13px;height:35px;background:#1e1e1e"></div>
<div class="a" style="left:13px;top:107.5px;width:600px;height:35px;background:#3c3c3c"></div>
<div class="t" style="left:18px;top:113.0px;font-size:21px;color:#f2f2f2;transform:scaleX(0.75);transform-origin:0 0">Y</div>
<div class="t" style="left:88px;top:113.0px;font-size:21px;color:#f2f2f2;transform:scaleX(0.75);transform-origin:0 0">238,4823</div>
<div class="t" style="left:165px;top:113.0px;font-size:21px;color:#f2f2f2;transform:scaleX(0.75);transform-origin:0 0">50,6230</div>
<div class="t" style="left:232px;top:113.0px;font-size:21px;color:#f2f2f2;transform:scaleX(0.75);transform-origin:0 0">166,9610</div>
<div class="t" style="left:309px;top:113.0px;font-size:21px;color:#f2f2f2;transform:scaleX(0.75);transform-origin:0 0">18,3519</div>
<div class="t" style="left:376px;top:113.0px;font-size:21px;color:#f2f2f2;transform:scaleX(0.75);transform-origin:0 0">187,2323</div>
<div class="t" style="left:453px;top:113.0px;font-size:21px;color:#f2f2f2;transform:scaleX(0.75);transform-origin:0 0">68,3176</div>
<div class="t" style="left:521.5999999999999px;top:113.0px;font-size:21px;color:#f2f2f2;transform:scaleX(0.75);transform-origin:0 0">217,5511</div>
<div class="t" style="left:598px;top:113.0px;font-size:21px;color:#f2f2f2;transform:scaleX(0.75);transform-origin:0 0">449</div>
<div class="a" style="left:0;top:142.5px;width:13px;height:35px;background:#1e1e1e"></div>
<div class="a" style="left:13px;top:142.5px;width:600px;height:35px;background:#787878"></div>
<div class="t" style="left:18px;top:148.0px;font-size:21px;color:#f2f2f2;transform:scaleX(0.75);transform-origin:0 0">Target Y</div>
<div class="t" style="left:88px;top:148.0px;font-size:21px;color:#f2f2f2;transform:scaleX(0.75);transform-origin:0 0">238,4823</div>
<div class="t" style="left:165px;top:148.0px;font-size:21px;color:#f2f2f2;transform:scaleX(0.75);transform-origin:0 0">54,6098</div>
<div class="t" style="left:232px;top:148.0px;font-size:21px;color:#f2f2f2;transform:scaleX(0.75);transform-origin:0 0">164,9656</div>
<div class="t" style="left:309px;top:148.0px;font-size:21px;color:#f2f2f2;transform:scaleX(0.75);transform-origin:0 0">18,9069</div>
<div class="t" style="left:376px;top:148.0px;font-size:21px;color:#f2f2f2;transform:scaleX(0.75);transform-origin:0 0">183,8725</div>
<div class="t" style="left:453px;top:148.0px;font-size:21px;color:#f2f2f2;transform:scaleX(0.75);transform-origin:0 0">73,5168</div>
<div class="t" style="left:521.5999999999999px;top:148.0px;font-size:21px;color:#f2f2f2;transform:scaleX(0.75);transform-origin:0 0">219,5754</div>
<div class="t" style="left:598px;top:148.0px;font-size:21px;color:#f2f2f2;transform:scaleX(0.75);transform-origin:0 0">449</div>
<div class="a" style="left:0;top:177.5px;width:13px;height:35px;background:#1e1e1e"></div>
<div class="a" style="left:13px;top:177.5px;width:600px;height:35px;background:#3c3c3c"></div>
<div class="t" style="left:18px;top:183.0px;font-size:21px;color:#f2f2f2;transform:scaleX(0.75);transform-origin:0 0">&#916;E 2000</div>
<div class="t" style="left:88px;top:183.0px;font-size:21px;color:#f2f2f2;transform:scaleX(0.75);transform-origin:0 0">2,1221</div>
<div class="t" style="left:165px;top:183.0px;font-size:21px;color:#f2f2f2;transform:scaleX(0.75);transform-origin:0 0">6,0306</div>
<div class="t" style="left:232px;top:183.0px;font-size:21px;color:#f2f2f2;transform:scaleX(0.75);transform-origin:0 0">5,0621</div>
<div class="t" style="left:309px;top:183.0px;font-size:21px;color:#f2f2f2;transform:scaleX(0.75);transform-origin:0 0">1,0075</div>
<div class="t" style="left:376px;top:183.0px;font-size:21px;color:#f2f2f2;transform:scaleX(0.75);transform-origin:0 0">3,9679</div>
<div class="t" style="left:453px;top:183.0px;font-size:21px;color:#f2f2f2;transform:scaleX(0.75);transform-origin:0 0">3,2420</div>
<div class="t" style="left:521.5999999999999px;top:183.0px;font-size:21px;color:#f2f2f2;transform:scaleX(0.75);transform-origin:0 0">5,7503</div>
<div class="t" style="left:598px;top:183.0px;font-size:21px;color:#f2f2f2;transform:scaleX(0.75);transform-origin:0 0">3,1</div>
</div>
<div class="a" style="left:1605px;top:607px;width:17px;height:38px;background:#333333"></div>
<div class="a" style="left:1605px;top:645px;width:16px;height:152px;background:#5e5e5e;border-radius:3px"></div>
<div class="a" style="left:1606px;top:647px;width:14px;height:18px;background:#767676;border-radius:4px"></div>
<div class="a" style="left:1608px;top:651px;border-left:5px solid transparent;border-right:5px solid transparent;border-bottom:8px solid #3a3a3a"></div>
<div class="a" style="left:1607px;top:669px;width:13px;height:83px;background:#3e3e3e;border-radius:7px"></div>
<div class="a" style="left:1606px;top:778px;width:14px;height:18px;background:#767676;border-radius:4px"></div>
<div class="a" style="left:1608px;top:783px;border-left:5px solid transparent;border-right:5px solid transparent;border-top:8px solid #3a3a3a"></div>
<div class="a" style="left:1006px;top:798px;width:599px;height:22px;background:#626262;border-radius:0 0 3px 3px"></div>
<div class="a" style="left:1007px;top:800px;width:14px;height:18px;background:#7a7a7a;border-radius:4px"></div>
<div class="a" style="left:1011px;top:804px;border-top:5px solid transparent;border-bottom:5px solid transparent;border-right:6px solid #3a3a3a"></div>
<div class="a" style="left:1025px;top:800px;width:512px;height:18px;background:#474747;border-radius:9px"></div>
<div class="a" style="left:1589px;top:800px;width:15px;height:18px;background:#7a7a7a;border-radius:4px"></div>
<div class="a" style="left:1594px;top:804px;border-top:5px solid transparent;border-bottom:5px solid transparent;border-left:6px solid #3a3a3a"></div>
<div class="a" style="left:2px;top:829px;width:155px;height:80px;background:linear-gradient(#a2a2a2 0%,#8a8a8a 40%,#707070 75%,#626262 100%);border-radius:5px"></div>
<div class="a" style="left:8px;top:835px;width:143px;height:45px;background:#c0c0c0;border-radius:5px;box-shadow:inset 1px 1px 2px rgba(0,0,0,0.35)"></div>
<div class="t" style="left:-20.5px;top:888px;width:200px;text-align:center;font-size:14px;color:#2e2e2e;font-weight:bold">White</div>
<div class="a" style="left:160px;top:829px;width:155px;height:80px;background:linear-gradient(#a2a2a2 0%,#8a8a8a 40%,#707070 75%,#626262 100%);border-radius:5px"></div>
<div class="a" style="left:166px;top:835px;width:143px;height:45px;background:#c00000;border-radius:5px;box-shadow:inset 1px 1px 2px rgba(0,0,0,0.35)"></div>
<div class="t" style="left:137.5px;top:888px;width:200px;text-align:center;font-size:14px;color:#2e2e2e;font-weight:bold">Red</div>
<div class="a" style="left:318px;top:829px;width:155px;height:80px;background:linear-gradient(#a2a2a2 0%,#8a8a8a 40%,#707070 75%,#626262 100%);border-radius:5px"></div>
<div class="a" style="left:324px;top:835px;width:143px;height:45px;background:#00c000;border-radius:5px;box-shadow:inset 1px 1px 2px rgba(0,0,0,0.35)"></div>
<div class="t" style="left:295.5px;top:888px;width:200px;text-align:center;font-size:14px;color:#2e2e2e;font-weight:bold">Green</div>
<div class="a" style="left:476px;top:829px;width:155px;height:80px;background:linear-gradient(#a2a2a2 0%,#8a8a8a 40%,#707070 75%,#626262 100%);border-radius:5px"></div>
<div class="a" style="left:482px;top:835px;width:143px;height:45px;background:#0000c0;border-radius:5px;box-shadow:inset 1px 1px 2px rgba(0,0,0,0.35)"></div>
<div class="t" style="left:453.5px;top:888px;width:200px;text-align:center;font-size:14px;color:#2e2e2e;font-weight:bold">Blue</div>
<div class="a" style="left:634px;top:829px;width:155px;height:80px;background:linear-gradient(#a2a2a2 0%,#8a8a8a 40%,#707070 75%,#626262 100%);border-radius:5px"></div>
<div class="a" style="left:640px;top:835px;width:143px;height:45px;background:#00c0c0;border-radius:5px;box-shadow:inset 1px 1px 2px rgba(0,0,0,0.35)"></div>
<div class="t" style="left:611.5px;top:888px;width:200px;text-align:center;font-size:14px;color:#2e2e2e;font-weight:bold">Cyan</div>
<div class="a" style="left:792px;top:829px;width:155px;height:80px;background:linear-gradient(#a2a2a2 0%,#8a8a8a 40%,#707070 75%,#626262 100%);border-radius:5px"></div>
<div class="a" style="left:798px;top:835px;width:143px;height:45px;background:#c000c0;border-radius:5px;box-shadow:inset 1px 1px 2px rgba(0,0,0,0.35)"></div>
<div class="t" style="left:769.5px;top:888px;width:200px;text-align:center;font-size:14px;color:#2e2e2e;font-weight:bold">Magenta</div>
<div class="a" style="left:950px;top:829px;width:155px;height:80px;background:linear-gradient(#a2a2a2 0%,#8a8a8a 40%,#707070 75%,#626262 100%);border-radius:5px"></div>
<div class="a" style="left:956px;top:835px;width:143px;height:45px;background:#c0c000;border-radius:5px;box-shadow:inset 1px 1px 2px rgba(0,0,0,0.35)"></div>
<div class="t" style="left:927.5px;top:888px;width:200px;text-align:center;font-size:14px;color:#2e2e2e;font-weight:bold">Yellow</div>
<div class="a" style="left:1108px;top:829px;width:155px;height:80px;background:#262626;border:1px solid #1a1a1a;border-radius:5px"></div>
<div class="a" style="left:1114px;top:835px;width:143px;height:45px;background:#ffffff;border-radius:5px;box-shadow:inset 1px 1px 1px #888"></div>
<div class="t" style="left:1085.5px;top:888px;width:200px;text-align:center;font-size:14px;color:#ffffff;font-weight:bold">100W</div>
<div class="a" style="left:1267px;top:828px;width:60px;height:23px;background:linear-gradient(#a0a0a0,#7a7a7a);border-radius:5px 5px 0 0"></div>
<div class="a" style="left:1267px;top:851px;width:60px;height:50px;background:linear-gradient(#8a8a8a,#6a6a6a)"></div>
<div class="a" style="left:1267px;top:850px;width:60px;height:1px;background:#555"></div>
<div class="a" style="left:1288.5px;top:831px;width:18px;height:18px;border-radius:50%;background:linear-gradient(#6e6e6e,#8a8a8a 60%,#9e9e9e)"></div>
<div class="a" style="left:1292px;top:836px;border-left:5.5px solid transparent;border-right:5.5px solid transparent;border-bottom:6px solid #2a2a2a"></div>
<div class="a" style="left:1278px;top:859px;width:39px;height:38px;background:linear-gradient(#b8b8b8 0%,#b0b0b0 52%,#989898 52%,#a2a2a2 100%);border:3px solid #262626;border-radius:6px"></div>
<div class="a" style="left:1289px;top:870px;width:17px;height:17px;background:linear-gradient(#1a1a1a 50%,#000 50%)"></div>
<div class="a" style="left:1329px;top:828px;width:282px;height:38px;background:linear-gradient(#a8a8a8 0%,#8c8c8c 50%,#727272 100%);border-radius:5px 0 0 0"></div>
<div class="a" style="left:1386px;top:828px;width:1px;height:38px;background:#3a3a3a"></div>
<div class="a" style="left:1442px;top:828px;width:1px;height:38px;background:#3a3a3a"></div>
<div class="a" style="left:1498px;top:828px;width:1px;height:38px;background:#3a3a3a"></div>
<div class="a" style="left:1555px;top:828px;width:1px;height:38px;background:#3a3a3a"></div>
<div class="a" style="left:1344px;top:834px;width:26px;height:26px;border-radius:50%;background:linear-gradient(#6c6c6c,#8a8a8a 55%,#a4a4a4)"></div>
<div class="a" style="left:1401px;top:834px;width:26px;height:26px;border-radius:50%;background:linear-gradient(#6c6c6c,#8a8a8a 55%,#a4a4a4)"></div>
<div class="a" style="left:1458px;top:834px;width:26px;height:26px;border-radius:50%;background:linear-gradient(#6c6c6c,#8a8a8a 55%,#a4a4a4)"></div>
<div class="a" style="left:1514px;top:834px;width:26px;height:26px;border-radius:50%;background:linear-gradient(#6c6c6c,#8a8a8a 55%,#a4a4a4)"></div>
<div class="a" style="left:1570px;top:834px;width:26px;height:26px;border-radius:50%;background:linear-gradient(#6c6c6c,#8a8a8a 55%,#a4a4a4)"></div>
<div class="a" style="left:1352px;top:842px;width:10px;height:9px;background:#2a2a2a"></div>
<div class="a" style="left:1411px;top:842px;border-top:6px solid transparent;border-bottom:6px solid transparent;border-left:10px solid #2a2a2a"></div>
<svg class="a" style="left:1459px;top:838px" width="24" height="20" viewBox="0 0 24 20"><path d="M7 3 H4 V17 H7 M17 3 H20 V17 H17" fill="none" stroke="#2a2a2a" stroke-width="2.6"/><circle cx="10.5" cy="10" r="1.1" fill="#2a2a2a"/><circle cx="13.5" cy="10" r="1.1" fill="#2a2a2a"/></svg>
<svg class="a" style="left:1515px;top:838px" width="24" height="20" viewBox="0 0 24 20"><path d="M12 10 C9 6 4.5 6 4.5 10 C4.5 14 9 14 12 10 C15 6 19.5 6 19.5 10 C19.5 14 15 14 12 10 Z" fill="none" stroke="#2a2a2a" stroke-width="2.6"/></svg>
<svg class="a" style="left:1571px;top:835px" width="24" height="24" viewBox="0 0 24 24"><path d="M6.5 11 A6 6 0 0 1 16.5 7.5" fill="none" stroke="#2a2a2a" stroke-width="2.8"/><path d="M14 4 L19.5 4.5 L18.5 10 Z" fill="#2a2a2a"/><path d="M17.5 13 A6 6 0 0 1 7.5 16.5" fill="none" stroke="#2a2a2a" stroke-width="2.8"/><path d="M10 20 L4.5 19.5 L5.5 14 Z" fill="#2a2a2a"/></svg>
<div class="a" style="left:1329px;top:867px;width:170px;height:40px;background:linear-gradient(#a8a8a8 0%,#8a8a8a 60%,#7a7a7a 100%);border-radius:5px 0 0 0"></div>
<div class="a" style="left:1499px;top:867px;width:160px;height:40px;background:linear-gradient(#a8a8a8 0%,#8a8a8a 60%,#7a7a7a 100%);border-left:1px solid #3a3a3a"></div>
<div class="a" style="left:1354px;top:873px;width:26px;height:26px;border-radius:50%;background:linear-gradient(#6c6c6c,#8a8a8a 55%,#a4a4a4)"></div>
<div class="a" style="left:1620px;top:873px;width:26px;height:26px;border-radius:50%;background:linear-gradient(#6c6c6c,#8a8a8a 55%,#a4a4a4)"></div>
<svg class="a" style="left:1360px;top:880px" width="14" height="12" viewBox="0 0 14 12"><path d="M6 1 L1.5 6 L6 11 M12 1 L7.5 6 L12 11" fill="none" stroke="#2e2e2e" stroke-width="2.2"/></svg>
<svg class="a" style="left:1627.5px;top:880px" width="14" height="12" viewBox="0 0 14 12"><path d="M2 1 L6.5 6 L2 11 M8 1 L12.5 6 L8 11" fill="none" stroke="#2e2e2e" stroke-width="2.2"/></svg>
<div class="t" style="left:1400px;top:873.5px;font-size:27px;color:#333333;font-weight:bold">Back</div>
<div class="t" style="left:1534px;top:873.5px;font-size:27px;color:#333333;font-weight:bold;letter-spacing:1.7px">Next</div>
<svg class="a" style="left:1617px;top:825px" width="42" height="42" viewBox="-21 -21 42 42"><g fill="#e30c0c"><rect x="-3.7" y="-17" width="7.4" height="34" rx="1.5" transform="rotate(0)"/><rect x="-3.7" y="-17" width="7.4" height="34" rx="1.5" transform="rotate(60)"/><rect x="-3.7" y="-17" width="7.4" height="34" rx="1.5" transform="rotate(120)"/></g></svg>
<script>(function(){
var L=[[0.1741,0.0050],[0.1738,0.0049],[0.1733,0.0048],[0.1726,0.0048],[0.1714,0.0051],[0.1703,0.0058],[0.1689,0.0069],[0.1669,0.0086],[0.1644,0.0109],[0.1611,0.0138],[0.1566,0.0177],[0.1510,0.0227],[0.1440,0.0297],[0.1355,0.0399],[0.1241,0.0578],[0.1096,0.0868],[0.0913,0.1327],[0.0687,0.2007],[0.0454,0.2950],[0.0235,0.4127],[0.0082,0.5384],[0.0039,0.6548],[0.0139,0.7502],[0.0389,0.8120],[0.0743,0.8338],[0.1142,0.8262],[0.1547,0.8059],[0.1929,0.7816],[0.2296,0.7543],[0.2658,0.7243],[0.3016,0.6923],[0.3373,0.6589],[0.3731,0.6245],[0.4087,0.5896],[0.4441,0.5547],[0.4788,0.5202],[0.5125,0.4866],[0.5448,0.4544],[0.5752,0.4242],[0.6029,0.3965],[0.6270,0.3725],[0.6482,0.3514],[0.6658,0.3340],[0.6801,0.3197],[0.6915,0.3083],[0.7006,0.2993],[0.7079,0.2920],[0.7140,0.2859],[0.7190,0.2809],[0.7230,0.2770],[0.7260,0.2740],[0.7300,0.2700],[0.7347,0.2653]];
var P3M=[[2.4934969,-0.9313836,-0.4027108],[-0.8294890,1.7626641,0.0236247],[0.0358458,-0.0761724,0.9568845]];
var S=[[3.2406,-1.5372,-0.4986],[-0.9689,1.8758,0.0415],[0.0557,-0.2040,1.0570]];
function rgbOf(x,y,dark,gam,MM){
  var M=MM||P3M; var X=x/y,Y=1,Z=(1-x-y)/y;
  var r=M[0][0]*X+M[0][1]*Y+M[0][2]*Z, g=M[1][0]*X+M[1][1]*Y+M[1][2]*Z, b=M[2][0]*X+M[2][1]*Y+M[2][2]*Z;
  var f=1; if(r<0||g<0||b<0){f=dark; if(r<0)r=0; if(g<0)g=0; if(b<0)b=0;}
  var m=Math.max(r,g,b); if(m<=0)m=1; r/=m; g/=m; b/=m;
  if(f==1){r=Math.pow(r,gam); g=Math.pow(g,gam); b=Math.pow(b,gam);}
  return [r*f*255,g*f*255,b*f*255];
}
// CIE 1976
var c=document.getElementById('cie');
if(c&&c.getContext){
  var W=c.width,H=c.height,ox=1014,oy=81;
  var SS=2, W2=W*SS, H2=H*SS;
  var off=document.createElement('canvas'); off.width=W2; off.height=H2;
  var oc=off.getContext('2d'); var img=oc.createImageData(W2,H2); var d=img.data;
  for(var j=0;j<H2;j++){ for(var i=0;i<W2;i++){
    var u=(ox+(i+0.5)/SS-1014.2)/1029.8, v=(557-(oy+(j+0.5)/SS))/792.5;
    var den=6*u-16*v+12; var x=9*u/den, y=4*v/den; var p=(j*W2+i)*4;
    if(y<=0.001){d[p+3]=0;continue;}
    var col=rgbOf(x,y,0.58,1.8);
    d[p]=col[0]; d[p+1]=col[1]; d[p+2]=col[2]; d[p+3]=255;
  }}
  oc.putImageData(img,0,0);
  var ctx=c.getContext('2d'); ctx.save(); ctx.beginPath();
  var P=[]; for(var k=0;k<L.length;k++){var x=L[k][0],y=L[k][1];var den=-2*x+12*y+3;var u=4*x/den,v=9*y/den;
    P.push([1014.2+u*1029.8-ox, 557-v*792.5-oy]);}
  ctx.moveTo(P[0][0],P[0][1]); var n=P.length;
  for(var k=0;k<n-1;k++){var p0=P[Math.max(k-1,0)],p1=P[k],p2=P[k+1],p3=P[Math.min(k+2,n-1)];
    ctx.bezierCurveTo(p1[0]+(p2[0]-p0[0])/6,p1[1]+(p2[1]-p0[1])/6,p2[0]-(p3[0]-p1[0])/6,p2[1]-(p3[1]-p1[1])/6,p2[0],p2[1]);}
  ctx.closePath(); ctx.clip(); ctx.imageSmoothingEnabled=true; ctx.imageSmoothingQuality='high'; ctx.drawImage(off,0,0,W,H); ctx.restore();
}
// CIE 1931 xy small
var c2=document.getElementById('xy');
if(c2&&c2.getContext){
  var W2=c2.width,H2=c2.height; var ctx2=c2.getContext('2d'); var im2=ctx2.createImageData(W2,H2); var d2=im2.data;
  for(var j=0;j<H2;j++){ for(var i=0;i<W2;i++){
    var x=0.3127+(i-164)/3000, y=0.329-(j-95)/2300; var col=rgbOf(x,y,1,0.55,S); var p=(j*W2+i)*4;
    d2[p]=col[0]; d2[p+1]=col[1]; d2[p+2]=col[2]; d2[p+3]=255;
  }}
  ctx2.putImageData(im2,0,0);
}
})();
</script>
</body></html>
